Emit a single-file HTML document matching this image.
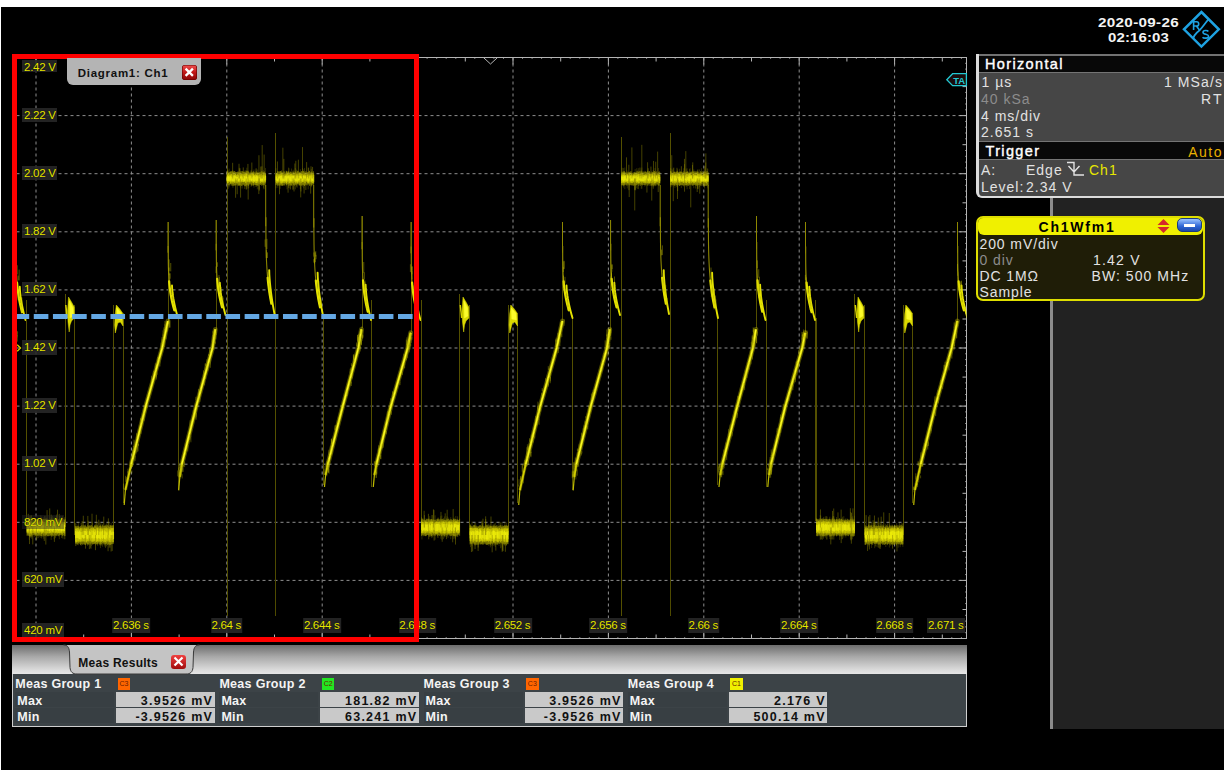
<!DOCTYPE html>
<html><head><meta charset="utf-8">
<style>
*{margin:0;padding:0;box-sizing:border-box}
html,body{width:1230px;height:772px;overflow:hidden;background:#fff}
body{position:relative;font-family:"Liberation Sans",sans-serif}
.a{position:absolute}
.t{position:absolute;white-space:nowrap}
#main{left:1px;top:7px;width:1223px;height:763px;background:#000}
svg{position:absolute;left:0;top:0}
.gd{stroke:#8e8e8e;stroke-width:1;stroke-dasharray:3 3}
.gdh{stroke:#8e8e8e;stroke-width:1;stroke-dasharray:3 3}
.yl{position:absolute;height:14.6px;background:rgba(40,40,40,0.88);color:#e8e800;font-size:11.5px;line-height:14.6px;padding:0 1.5px 0 2px;letter-spacing:-0.25px;white-space:nowrap;text-shadow:0 0 1px #000}
.tl{position:absolute;height:15.2px;background:rgba(40,40,40,0.88);color:#e8e800;font-size:11.5px;line-height:15.2px;padding:0 1.5px 0 0.5px;letter-spacing:-0.3px;white-space:nowrap;transform:translateX(-50%);text-shadow:0 0 1px #000}
#date{left:1090px;top:14px;width:90px;color:#fff;font-weight:bold;font-size:13px;line-height:16px;text-align:center}
#info{left:976px;top:54px;width:248px;height:144px;background:#464646;border-left:3px solid #d4d4d4;border-top:1px solid #9a9a9a;border-bottom:2px solid #d4d4d4;border-bottom-left-radius:5px}
.ih{position:absolute;left:0;width:245px;height:17px;background:#000;color:#fff;font-size:14.5px;line-height:17px;padding-left:7px;font-weight:normal}
.ib{position:absolute;left:2px;color:#e4e4e4;font-size:14px;line-height:16.5px;white-space:nowrap}
.dim{color:#8e8e8e}
#rpanel{left:1053px;top:198px;width:171px;height:531px;background:#222}
#rline{left:1050px;top:198px;width:3px;height:531px;background:#8a8a8a}
#wfm{left:976px;top:216px;width:229px;height:85px;background:#1d1b06;border:2px solid #e6e600;border-radius:7px;overflow:hidden}
#wfmh{left:0;top:0;width:225px;height:18px;background:#f2f200;color:#000;font-weight:bold;font-size:14.5px;line-height:18px;text-align:center}
.wb{position:absolute;color:#e4e4e4;font-size:14px;line-height:16.2px;white-space:nowrap}
#meas{left:12px;top:645px;width:955px;height:82px;background:#3a4145;border:1px solid #c8c8c8;border-top:none}
#mtabbar{left:0;top:0;width:954px;height:29px;background:linear-gradient(#6e6e6e,#d8d8d8 85%,#e8e8e8)}
.mrow{position:absolute;height:16px;font-size:12.5px;line-height:16px;font-weight:bold;color:#fff;white-space:nowrap}
.mval{position:absolute;height:15px;background:#c6c9cc;color:#000;font-size:12.5px;line-height:16px;font-weight:bold;text-align:right;padding-right:3px;white-space:nowrap}
.badge{position:absolute;width:12px;height:12px;font-size:6px;line-height:12px;text-align:center;color:#222}
</style></head><body>
<div id="main" class="a"></div>
<svg width="1230" height="772" viewBox="0 0 1230 772">
<defs><clipPath id="gc"><rect x="17" y="58" width="949.5" height="580"/></clipPath></defs>
<line x1="36" y1="57.5" x2="36" y2="638.5" class="gd"/>
<line x1="131.4" y1="57.5" x2="131.4" y2="638.5" class="gd"/>
<line x1="226.8" y1="57.5" x2="226.8" y2="638.5" class="gd"/>
<line x1="322.2" y1="57.5" x2="322.2" y2="638.5" class="gd"/>
<line x1="417.6" y1="57.5" x2="417.6" y2="638.5" class="gd"/>
<line x1="513" y1="57.5" x2="513" y2="638.5" class="gd"/>
<line x1="608.4" y1="57.5" x2="608.4" y2="638.5" class="gd"/>
<line x1="703.8" y1="57.5" x2="703.8" y2="638.5" class="gd"/>
<line x1="799.2" y1="57.5" x2="799.2" y2="638.5" class="gd"/>
<line x1="894.6" y1="57.5" x2="894.6" y2="638.5" class="gd"/>
<line x1="16.5" y1="115.6" x2="966.5" y2="115.6" class="gdh"/>
<line x1="16.5" y1="173.7" x2="966.5" y2="173.7" class="gdh"/>
<line x1="16.5" y1="231.8" x2="966.5" y2="231.8" class="gdh"/>
<line x1="16.5" y1="289.9" x2="966.5" y2="289.9" class="gdh"/>
<line x1="16.5" y1="348" x2="966.5" y2="348" class="gdh"/>
<line x1="16.5" y1="406.1" x2="966.5" y2="406.1" class="gdh"/>
<line x1="16.5" y1="464.2" x2="966.5" y2="464.2" class="gdh"/>
<line x1="16.5" y1="522.3" x2="966.5" y2="522.3" class="gdh"/>
<line x1="16.5" y1="580.4" x2="966.5" y2="580.4" class="gdh"/>
<rect x="16.5" y="57.5" width="950" height="581" fill="none" stroke="#b4b4b4" stroke-width="1"/>
<path d="M26.5 57.5v1.2M26.5 638.5v-1.2M36 57.5v7M36 638.5v-7M45.5 57.5v1.2M45.5 638.5v-1.2M55.1 57.5v1.2M55.1 638.5v-1.2M64.6 57.5v1.2M64.6 638.5v-1.2M74.2 57.5v1.2M74.2 638.5v-1.2M83.7 57.5v4M83.7 638.5v-4M93.2 57.5v1.2M93.2 638.5v-1.2M102.8 57.5v1.2M102.8 638.5v-1.2M112.3 57.5v1.2M112.3 638.5v-1.2M121.9 57.5v1.2M121.9 638.5v-1.2M131.4 57.5v7M131.4 638.5v-7M140.9 57.5v1.2M140.9 638.5v-1.2M150.5 57.5v1.2M150.5 638.5v-1.2M160 57.5v1.2M160 638.5v-1.2M169.6 57.5v1.2M169.6 638.5v-1.2M179.1 57.5v4M179.1 638.5v-4M188.6 57.5v1.2M188.6 638.5v-1.2M198.2 57.5v1.2M198.2 638.5v-1.2M207.7 57.5v1.2M207.7 638.5v-1.2M217.3 57.5v1.2M217.3 638.5v-1.2M226.8 57.5v7M226.8 638.5v-7M236.3 57.5v1.2M236.3 638.5v-1.2M245.9 57.5v1.2M245.9 638.5v-1.2M255.4 57.5v1.2M255.4 638.5v-1.2M265 57.5v1.2M265 638.5v-1.2M274.5 57.5v4M274.5 638.5v-4M284 57.5v1.2M284 638.5v-1.2M293.6 57.5v1.2M293.6 638.5v-1.2M303.1 57.5v1.2M303.1 638.5v-1.2M312.7 57.5v1.2M312.7 638.5v-1.2M322.2 57.5v7M322.2 638.5v-7M331.7 57.5v1.2M331.7 638.5v-1.2M341.3 57.5v1.2M341.3 638.5v-1.2M350.8 57.5v1.2M350.8 638.5v-1.2M360.4 57.5v1.2M360.4 638.5v-1.2M369.9 57.5v4M369.9 638.5v-4M379.4 57.5v1.2M379.4 638.5v-1.2M389 57.5v1.2M389 638.5v-1.2M398.5 57.5v1.2M398.5 638.5v-1.2M408.1 57.5v1.2M408.1 638.5v-1.2M417.6 57.5v7M417.6 638.5v-7M427.1 57.5v1.2M427.1 638.5v-1.2M436.7 57.5v1.2M436.7 638.5v-1.2M446.2 57.5v1.2M446.2 638.5v-1.2M455.8 57.5v1.2M455.8 638.5v-1.2M465.3 57.5v4M465.3 638.5v-4M474.8 57.5v1.2M474.8 638.5v-1.2M484.4 57.5v1.2M484.4 638.5v-1.2M493.9 57.5v1.2M493.9 638.5v-1.2M503.5 57.5v1.2M503.5 638.5v-1.2M513 57.5v7M513 638.5v-7M522.5 57.5v1.2M522.5 638.5v-1.2M532.1 57.5v1.2M532.1 638.5v-1.2M541.6 57.5v1.2M541.6 638.5v-1.2M551.2 57.5v1.2M551.2 638.5v-1.2M560.7 57.5v4M560.7 638.5v-4M570.2 57.5v1.2M570.2 638.5v-1.2M579.8 57.5v1.2M579.8 638.5v-1.2M589.3 57.5v1.2M589.3 638.5v-1.2M598.9 57.5v1.2M598.9 638.5v-1.2M608.4 57.5v7M608.4 638.5v-7M617.9 57.5v1.2M617.9 638.5v-1.2M627.5 57.5v1.2M627.5 638.5v-1.2M637 57.5v1.2M637 638.5v-1.2M646.6 57.5v1.2M646.6 638.5v-1.2M656.1 57.5v4M656.1 638.5v-4M665.6 57.5v1.2M665.6 638.5v-1.2M675.2 57.5v1.2M675.2 638.5v-1.2M684.7 57.5v1.2M684.7 638.5v-1.2M694.3 57.5v1.2M694.3 638.5v-1.2M703.8 57.5v7M703.8 638.5v-7M713.3 57.5v1.2M713.3 638.5v-1.2M722.9 57.5v1.2M722.9 638.5v-1.2M732.4 57.5v1.2M732.4 638.5v-1.2M742 57.5v1.2M742 638.5v-1.2M751.5 57.5v4M751.5 638.5v-4M761 57.5v1.2M761 638.5v-1.2M770.6 57.5v1.2M770.6 638.5v-1.2M780.1 57.5v1.2M780.1 638.5v-1.2M789.7 57.5v1.2M789.7 638.5v-1.2M799.2 57.5v7M799.2 638.5v-7M808.7 57.5v1.2M808.7 638.5v-1.2M818.3 57.5v1.2M818.3 638.5v-1.2M827.8 57.5v1.2M827.8 638.5v-1.2M837.4 57.5v1.2M837.4 638.5v-1.2M846.9 57.5v4M846.9 638.5v-4M856.4 57.5v1.2M856.4 638.5v-1.2M866 57.5v1.2M866 638.5v-1.2M875.5 57.5v1.2M875.5 638.5v-1.2M885.1 57.5v1.2M885.1 638.5v-1.2M894.6 57.5v7M894.6 638.5v-7M904.1 57.5v1.2M904.1 638.5v-1.2M913.7 57.5v1.2M913.7 638.5v-1.2M923.2 57.5v1.2M923.2 638.5v-1.2M932.8 57.5v1.2M932.8 638.5v-1.2M942.3 57.5v4M942.3 638.5v-4M951.8 57.5v1.2M951.8 638.5v-1.2M961.4 57.5v1.2M961.4 638.5v-1.2M966.5 63.3h-1.2M966.5 69.1h-1.2M966.5 74.9h-1.2M966.5 80.7h-1.2M966.5 86.6h-4M966.5 92.4h-1.2M966.5 98.2h-1.2M966.5 104h-1.2M966.5 109.8h-1.2M966.5 115.6h-7M966.5 121.4h-1.2M966.5 127.2h-1.2M966.5 133h-1.2M966.5 138.8h-1.2M966.5 144.7h-4M966.5 150.5h-1.2M966.5 156.3h-1.2M966.5 162.1h-1.2M966.5 167.9h-1.2M966.5 173.7h-7M966.5 179.5h-1.2M966.5 185.3h-1.2M966.5 191.1h-1.2M966.5 196.9h-1.2M966.5 202.8h-4M966.5 208.6h-1.2M966.5 214.4h-1.2M966.5 220.2h-1.2M966.5 226h-1.2M966.5 231.8h-7M966.5 237.6h-1.2M966.5 243.4h-1.2M966.5 249.2h-1.2M966.5 255h-1.2M966.5 260.9h-4M966.5 266.7h-1.2M966.5 272.5h-1.2M966.5 278.3h-1.2M966.5 284.1h-1.2M966.5 289.9h-7M966.5 295.7h-1.2M966.5 301.5h-1.2M966.5 307.3h-1.2M966.5 313.1h-1.2M966.5 319h-4M966.5 324.8h-1.2M966.5 330.6h-1.2M966.5 336.4h-1.2M966.5 342.2h-1.2M966.5 348h-7M966.5 353.8h-1.2M966.5 359.6h-1.2M966.5 365.4h-1.2M966.5 371.2h-1.2M966.5 377.1h-4M966.5 382.9h-1.2M966.5 388.7h-1.2M966.5 394.5h-1.2M966.5 400.3h-1.2M966.5 406.1h-7M966.5 411.9h-1.2M966.5 417.7h-1.2M966.5 423.5h-1.2M966.5 429.3h-1.2M966.5 435.2h-4M966.5 441h-1.2M966.5 446.8h-1.2M966.5 452.6h-1.2M966.5 458.4h-1.2M966.5 464.2h-7M966.5 470h-1.2M966.5 475.8h-1.2M966.5 481.6h-1.2M966.5 487.4h-1.2M966.5 493.3h-4M966.5 499.1h-1.2M966.5 504.9h-1.2M966.5 510.7h-1.2M966.5 516.5h-1.2M966.5 522.3h-7M966.5 528.1h-1.2M966.5 533.9h-1.2M966.5 539.7h-1.2M966.5 545.5h-1.2M966.5 551.4h-4M966.5 557.2h-1.2M966.5 563h-1.2M966.5 568.8h-1.2M966.5 574.6h-1.2M966.5 580.4h-7M966.5 586.2h-1.2M966.5 592h-1.2M966.5 597.8h-1.2M966.5 603.6h-1.2M966.5 609.5h-4M966.5 615.3h-1.2M966.5 621.1h-1.2M966.5 626.9h-1.2M966.5 632.7h-1.2" stroke="#b4b4b4" stroke-width="1" fill="none"/>
<path d="M484 58 L490.5 64 L497 58" fill="none" stroke="#b4b4b4" stroke-width="1"/>
<g clip-path="url(#gc)">
<path d="M-368.5 318V521M-329.5 294V527M-320.5 305V535M-281.5 305V535M-271.5 313V503M-216.5 315V490M-178.5 220V330M-226.5 222V324M-167.5 137V616M-71.5 318V485M-32.5 216V328M-23.5 300V487M16.5 222V332M26.5 300V521" stroke="#545000" stroke-width="1.0" stroke-opacity="1.0" fill="none"/>
<path d="M-119.5 133V520" stroke="#545000" stroke-width="1.0" stroke-opacity="1.0" fill="none"/>
<path d="M-119.5 520V616" stroke="#4e4a00" stroke-width="1.0" stroke-opacity="1.0" fill="none"/>
<path d="M-365.67 516.95V538.52M-364.72 517.79V536.36M-361.41 518.94V538.11M-360.97 518.03V536.12M-360.25 515.63V538.08M-355.95 518.08V537.16M-353.16 518.16V539.64M-351.75 516.48V539.11M-351.16 517.67V539.86M-350.23 518.01V536.4M-348.55 516.07V536.52M-347.7 517.32V536.85M-346.15 515.46V536.84M-344.62 515.04V536.85M-343.41 518.71V536.36M-342.6 516.59V537.49M-340.14 518.38V539.63M-339.17 518.24V538.96M-338.11 515.2V539.53M-337.29 518.58V536.15M-336.21 516.18V537.03M-334.63 516.12V536.28M-331.94 517.92V537.78M-331.49 517.52V538.29M-331 515.44V539.92" stroke="#8a8600" stroke-width="0.6" stroke-opacity="0.55" fill="none"/><path d="M-368 520.43V534.54M-367.34 518.57V534.54M-366.78 519.04V535.14M-366.08 519.41V535.97M-365.42 519.09V536.09M-364.76 519.13V536.3M-364.11 518.92V536.23M-363.58 519.74V535.67M-363.03 519.22V536.49M-362.38 519.72V535.97M-361.85 518.82V534.67M-361.25 519.3V535.46M-360.86 519.51V535.73M-360.19 520.48V535.1M-359.62 520.16V536.31M-359.05 518.72V535.15M-358.49 519.64V536.11M-357.82 519.73V535.67M-357.4 519.51V536.17M-356.76 518.6V535.05M-356.39 519.95V534.93M-355.92 519.51V535.13M-355.29 519.6V534.65M-354.97 520.42V535.92M-354.45 518.92V534.54M-354.09 520.45V536.16M-353.7 520.41V535.76M-353.22 519.19V536.11M-352.54 520.1V535.45M-352.16 519.56V535.93M-351.79 519.81V535.89M-351.28 518.99V535.29M-350.67 520.33V536.37M-350.08 519.59V535.75M-349.41 519.36V536.26M-348.8 519.57V535.8M-348.41 518.86V535.78M-347.83 518.7V536.46M-347.14 518.92V535.14M-346.47 519.8V534.67M-346 518.96V535.47M-345.68 520.37V536.1M-345.31 518.92V534.78M-344.96 519.05V536.18M-344.38 519.51V536.4M-344.05 519.45V535.08M-343.45 519.45V536.19M-342.93 519.74V536.19M-342.27 518.8V536.44M-341.76 520.1V535.57M-341.26 520.44V536.44M-340.75 518.9V535.63M-340.26 520.37V535.58M-339.79 518.65V535.04M-339.3 519.63V536.13M-338.64 519.87V534.88M-338.09 520.24V536.06M-337.78 520.05V535.87M-337.36 519.26V534.71M-336.76 519.48V535M-336.38 519.63V535.25M-335.92 520.18V534.91M-335.37 519.44V536.2M-334.82 520.03V535.98M-334.2 519.87V535.13M-333.53 518.5V536.28M-333.17 519.05V535.02M-332.84 519.66V536.08M-332.49 519.13V534.54M-332.11 518.68V536.44M-331.76 518.98V535.51M-331.18 520.36V534.71M-330.87 519.47V535.64M-330.51 520.09V536.18M-329.82 520.31V534.62" stroke="#bcb600" stroke-width="0.6" stroke-opacity="0.7" fill="none"/><path d="M-368 521.58V532.72M-367.51 522.11V533.16M-367.21 521.45V532.49M-366.73 522.15V532.51M-366.36 522.78V533.63M-365.74 521.42V533.21M-365.28 521.99V533.77M-364.66 521.34V533.39M-364.04 522.15V533.63M-363.39 521.57V533.42M-362.93 522.69V532.75M-362.44 522.23V533.22M-361.89 521.29V533.27M-361.46 521.89V533.05M-361 521.77V533.32M-360.4 522.76V533.18M-359.8 522.16V532.28M-359.42 522.64V532.6M-358.76 521.99V533.75M-358.23 521.78V533.5M-357.9 521.59V532.27M-357.23 522.05V532.47M-356.73 522.71V533.71M-356.27 521.84V532.78M-355.85 521.9V532.65M-355.26 522.78V532.59M-354.95 521.59V532.82M-354.29 522.72V533.78M-353.61 521.35V532.89M-353.12 522.41V533.04M-352.44 522.05V533.77M-351.82 522.62V533.2M-351.34 522.72V533.04M-350.99 521.73V532.93M-350.58 522.13V533.44M-350.07 521.28V533.37M-349.67 521.37V533.45M-349.12 522.37V533.3M-348.6 521.79V533.41M-348.22 521.23V533.67M-347.57 522.7V532.63M-347.1 522.64V533.07M-346.77 521.72V533.08M-346.22 522.03V532.54M-345.78 521.46V532.32M-345.43 521.8V533.43M-345.05 522.39V533.5M-344.6 521.22V532.72M-344.08 521.33V532.88M-343.63 521.4V532.33M-343.3 522.02V533.3M-342.88 522.68V532.54M-342.32 522.31V533.36M-341.74 522.57V532.77M-341.15 522.61V533.33M-340.62 521.3V533.66M-340.14 522.31V532.71M-339.68 521.37V532.6M-339.24 522.22V532.83M-338.79 521.9V533.48M-338.27 521.9V532.48M-337.67 522.35V532.24M-337.16 521.89V533.75M-336.6 522.7V533.07M-335.98 522.67V533.38M-335.32 521.79V532.43M-334.73 522.41V532.55M-334.12 521.58V532.83M-333.68 521.72V532.99M-333.17 521.67V533.66M-332.7 521.73V533.57M-332.08 521.38V533.73M-331.53 521.66V533.48M-331.06 522.57V533.39M-330.36 522.53V532.53M-329.89 521.25V532.29" stroke="#e0dc00" stroke-width="0.6" stroke-opacity="0.85" fill="none"/><path d="M-368 524.05V531.19M-367.51 524.42V530.82M-366.66 525.09V530.06M-366.15 523.92V530.84M-365.63 524.76V530.03M-364.86 524.24V531.27M-364.22 523.59V531.46M-363.65 523.46V530.63M-363.13 523.48V531.24M-362.54 524.31V530.23M-361.65 524.84V529.72M-361.01 523.77V531.07M-360.31 525V530.32M-359.78 524.31V530.93M-358.88 524.27V529.99M-358.1 523.72V531.33M-357.29 524.78V531.08M-356.84 524.4V531.54M-356.14 524.72V531.22M-355.54 525.12V531.29M-355.03 524.29V530M-354.21 524.7V529.85M-353.66 523.92V530.39M-352.92 524.54V530.59M-352.04 524.04V529.72M-351.45 524.84V530.79M-350.82 523.39V531.24M-350.31 524.74V530.42M-349.64 524.65V530.45M-348.91 524.92V531.11M-348.35 524.22V531.09M-347.78 525.12V529.97M-347.33 523.94V530.05M-346.73 524.16V529.87M-346.22 525.06V530.48M-345.78 524.48V530.68M-345.06 523.72V530.44M-344.49 525.27V530.47M-343.74 523.78V530.97M-343.04 524.66V530.36M-342.31 524.57V530.68M-341.52 524.12V530M-340.74 524.24V530.38M-340.09 523.93V531.6M-339.43 523.69V530.08M-338.56 524.92V529.86M-338.03 523.96V530.33M-337.17 524.41V529.94M-336.28 523.56V530.75M-335.6 524.79V531.45M-334.71 524.14V529.94M-333.89 523.57V530.16M-333.21 524.94V530.75M-332.77 524.95V531.6M-331.9 524.71V530.99M-331.13 524.16V531.25M-330.72 524.4V529.98M-330.13 524.97V530.7" stroke="#ffff10" stroke-width="0.6" stroke-opacity="0.75" fill="none"/><path d="M-346.44 511.19V527.5M-365.63 527.5V539.51M-332.27 527.5V540.64M-352.11 527.5V541.41M-339.56 527.5V540.7M-330.99 527.5V541.99M-352.19 511.47V527.5M-334.23 511.8V527.5M-351.35 527.5V540.92M-365.02 527.5V544.4M-340.5 527.5V543.51M-355.97 527.5V539.42M-362.5 511.98V527.5M-352.64 510.44V527.5M-347.95 513.55V527.5M-352.68 515.45V527.5" stroke="#8c8600" stroke-width="0.7" stroke-opacity="0.7" fill="none"/>
<path d="M-317.42 522.28V545.39M-315.46 522.33V545M-314.29 524.3V545.8M-312.87 524.07V546.84M-312.44 521.91V545.73M-310.06 521.81V548.09M-307.26 522.97V545.27M-306.24 525.08V547.4M-303.06 525.18V545.39M-301.91 524.56V547.16M-300.96 522.85V548.04M-300.15 524.3V548.21M-299.28 522.94V544.86M-298.19 523.39V546.62M-297.16 522.29V544.85M-295.99 523.31V545.25M-293.61 521.78V546.5M-292.23 522.87V547.63M-288.11 522.41V547.65M-287.16 523.54V545.38M-284.02 524.89V544.57M-283.27 523.73V545.55M-282.31 521.87V546.78" stroke="#8a8600" stroke-width="0.6" stroke-opacity="0.55" fill="none"/><path d="M-319.5 526.38V543.08M-319.07 525.95V543.53M-318.54 525.36V543.34M-318.14 525.62V544.66M-317.52 526.18V543.73M-317.14 526.92V543.98M-316.53 526.71V543.91M-315.93 526.52V544.78M-315.58 526.4V543.85M-315.25 525.01V544.53M-314.65 526.49V544.1M-314.26 525.14V543.73M-313.82 525.78V543.08M-313.36 526.88V543.69M-312.78 525.82V544.77M-312.3 525.31V543.76M-311.68 526.31V543.37M-311.16 526.59V543.43M-310.68 526.11V544.99M-310.11 526.59V543.77M-309.78 526.27V543.55M-309.47 526.48V543.79M-308.8 526.46V543.72M-308.44 526.28V544.53M-307.85 526.96V543.64M-307.4 525.24V543.65M-306.79 526.89V543.79M-306.39 526.7V544.19M-306.08 526.15V544.09M-305.72 526.48V544.45M-305.16 526.59V543.56M-304.57 526.23V544.73M-304.18 526.31V543.43M-303.87 525.74V544.13M-303.24 526.4V544.34M-302.57 525.62V544.33M-301.89 526.53V544.27M-301.56 526.22V543.12M-301.1 526.01V543.56M-300.74 526.05V543.33M-300.17 526.81V543.68M-299.71 525.83V544.4M-299.18 526.95V543.78M-298.74 526.19V543.11M-298.24 526.06V543.65M-297.84 526.31V544.78M-297.31 525.66V543.37M-296.82 525.09V543.73M-296.29 525.46V544.25M-295.75 526.17V543.55M-295.11 526.24V544.82M-294.8 525.99V543.62M-294.35 526.7V543.38M-293.96 526.53V543M-293.45 526.52V543.99M-292.89 525.75V544.12M-292.25 526.33V543.69M-291.6 525.57V544.39M-291.02 525.35V543.32M-290.48 525.87V543.74M-290.06 525.93V543.47M-289.66 526.64V544.03M-289.31 526.86V543.2M-288.73 526.1V544.54M-288.24 525.27V544.74M-287.92 525.99V544.59M-287.46 526.5V544.43M-287.03 525.48V544.69M-286.4 526.16V544.41M-285.85 525.4V543.25M-285.4 526.54V543.37M-285.09 525.12V544.94M-284.74 526.16V544.26M-284.28 525.02V543.1M-283.69 526.92V543.57M-283.1 526.76V543.66M-282.79 526.03V543.75M-282.37 525.32V543.57M-281.91 525.47V544.96M-281.45 525.91V544.6" stroke="#bcb600" stroke-width="0.6" stroke-opacity="0.7" fill="none"/><path d="M-319.5 529.13V542.19M-319.1 529.11V541.22M-318.79 529.07V541.7M-318.38 528.53V541.29M-317.98 529.2V542.13M-317.55 529.01V541.47M-316.86 527.91V541.47M-316.39 528.67V540.79M-315.87 528.3V541.14M-315.19 527.71V541.41M-314.56 529.02V540.74M-314.19 529.18V541.27M-313.59 528.48V540.72M-313.21 529.28V541.54M-312.58 528.12V541.34M-311.96 528.07V542.28M-311.62 528.66V541.83M-311.22 529.26V541.62M-310.83 528.71V541.75M-310.21 528.28V541.27M-309.79 528.79V540.85M-309.36 528.96V541.89M-308.84 529.02V540.87M-308.49 528.61V540.72M-307.98 528.79V541.56M-307.3 527.89V541.21M-306.7 527.72V541.39M-306.02 528.65V541.83M-305.65 528.22V542.22M-305.22 528.73V542.28M-304.86 528.7V541.73M-304.47 527.88V542.07M-303.92 528.39V540.88M-303.29 528.57V541.76M-302.82 528.93V541.66M-302.29 529.25V541.7M-301.81 528.35V542.19M-301.45 527.71V541.88M-301.02 527.72V541.34M-300.38 527.72V541.49M-299.98 528.26V542.2M-299.35 528.48V542.29M-299.03 528.16V541.1M-298.4 528.44V542.08M-298.02 528.27V540.82M-297.5 528.51V541.09M-296.88 528.07V541.58M-296.22 529.06V541.29M-295.88 528.75V542.08M-295.25 529.01V541.32M-294.61 527.86V540.82M-293.91 528.29V542.1M-293.32 528.23V541.39M-293.01 528.8V541.71M-292.6 528.19V540.99M-292.25 528.55V540.91M-291.91 528.32V541.27M-291.53 528.19V541.88M-291.08 528.65V540.93M-290.53 527.99V541.35M-290.05 527.79V541.25M-289.47 528.37V541.16M-288.82 527.93V541.78M-288.34 528.68V541.89M-287.8 529.2V541.37M-287.38 527.77V541.17M-286.8 528.91V541.36M-286.45 528.9V541.37M-286.02 527.94V541.65M-285.5 527.87V540.84M-285.05 528.14V541.77M-284.61 527.78V540.74M-284.06 528.72V541.44M-283.63 528.33V542.25M-282.94 528.67V542.03M-282.38 527.7V540.81M-281.9 528.25V541.05" stroke="#e0dc00" stroke-width="0.6" stroke-opacity="0.85" fill="none"/><path d="M-319.5 531.56V537.93M-318.9 532.21V537.98M-318.18 530.71V538.18M-317.37 530.63V537.87M-316.74 530.44V539.75M-315.89 531.6V538.82M-315.22 530.6V538.29M-314.57 531.11V537.9M-314.13 531.73V539.37M-313.6 532.28V538.1M-312.98 531.35V539.54M-312.52 532.05V539.81M-311.86 531.01V539.57M-310.98 532.38V537.95M-310.17 530.78V537.96M-309.51 532.15V538.28M-308.62 530.47V537.7M-308.01 531.81V537.85M-307.15 531.29V539.09M-306.31 531.11V538.74M-305.46 531.72V539.28M-304.93 531.42V538.68M-304.35 531.37V537.71M-303.53 531.2V538.85M-302.93 532.17V538.45M-302.38 531.88V539.31M-301.73 531.47V539.8M-301.33 530.21V538.43M-300.63 531.71V538.99M-299.94 531.27V538.77M-299.16 532.19V538.17M-298.62 531.43V539.56M-298.02 530.85V537.79M-297.13 531.65V538.32M-296.32 530.94V537.73M-295.54 530.98V538.86M-294.67 532.35V539.73M-293.9 532.39V539.28M-293.29 530.16V539.69M-292.85 531.4V539.31M-292.26 531.41V537.87M-291.7 532.24V537.86M-290.89 531.15V537.86M-290.43 530.23V538.87M-289.57 531.46V538.82M-288.75 530.41V538.67M-288.33 531.54V539.13M-287.47 530.83V538.48M-286.68 530.71V537.98M-285.98 531.61V537.97M-285.41 531.22V538.48M-284.72 531.58V538.93M-284.08 531.65V539.19M-283.56 530.74V538.91M-283.04 530.52V538.46M-282.28 530.99V538.87M-281.39 531.36V538.71" stroke="#ffff10" stroke-width="0.6" stroke-opacity="0.75" fill="none"/><path d="M-291.24 518.97V535M-287.82 514.47V535M-297.94 535V549M-313.01 535V550.94M-289.33 513.48V535M-310.59 516.35V535M-296.42 516.38V535M-297.42 535V553.04M-293.55 514.89V535M-292.49 515.64V535M-292.19 520.51V535M-317.76 520.47V535M-307.89 521.45V535M-300.95 520.22V535M-308.45 515.51V535M-312.7 535V552.63" stroke="#8c8600" stroke-width="0.7" stroke-opacity="0.7" fill="none"/>
<path d="M-326.5 297L-323.5 302L-320.8 307L-320.6 318L-323.5 321L-325 325L-325.8 332L-327 322L-327.4 311Z" fill="#e6e400" fill-opacity="0.95" stroke="#e6e400" stroke-opacity="0.76" stroke-width="0.6" stroke-linejoin="round"/><path d="M-325.5 301L-322 308L-321.6 316L-325 318Z" fill="#ffff30" fill-opacity="0.9" stroke="#ffff30" stroke-opacity="0.7200000000000001" stroke-width="0.6" stroke-linejoin="round"/><path d="M-329.2 305L-327.8 318" stroke="#d8d400" stroke-width="1.5" fill="none"/>
<path d="M-278.7 305L-275.2 309L-272.4 313L-272 326L-274.7 322L-277.2 323L-279.7 333L-280.4 325L-279.8 314Z" fill="#e6e400" fill-opacity="0.95" stroke="#e6e400" stroke-opacity="0.76" stroke-width="0.6" stroke-linejoin="round"/><path d="M-278.2 308L-273.7 313L-273.2 320L-277.7 319Z" fill="#ffff30" fill-opacity="0.9" stroke="#ffff30" stroke-opacity="0.7200000000000001" stroke-width="0.6" stroke-linejoin="round"/>
<path d="M-263.8 464.3L-258.5 443.3L-249.2 406L-232.8 347.8L-227.1 321" stroke="#a8a400" stroke-width="4.8" stroke-opacity="0.45" fill="none" stroke-linecap="round" stroke-linejoin="round"/><path d="M-269.6 490L-263.8 464.3" stroke="#a8a400" stroke-width="3.4" stroke-opacity="0.35" fill="none"/><path d="M-263.8 464.3L-258.5 443.3L-249.2 406L-232.8 347.8L-227.1 321" stroke="#dcd800" stroke-width="2.5" fill="none" stroke-linejoin="round" stroke-opacity="0.95"/><path d="M-269.6 490L-263.8 464.3" stroke="#dcd800" stroke-width="1.9" fill="none" stroke-opacity="0.95"/><path d="M-270.8 505L-269.6 490" stroke="#d4d000" stroke-width="1.2" fill="none" stroke-opacity="0.9"/><path d="M-263.8 464.3L-258.5 443.3L-249.2 406L-232.8 347.8L-227.1 321" stroke="#ffff30" stroke-width="1.0" fill="none" stroke-linejoin="round"/><path d="M-230.61 346.89V343.92M-229.73 328.19V325.86M-252.2 421.43V416.54M-256.88 433.33V427.49M-254.08 423.88V420.49M-229.7 347.82V341.87M-270.63 486.03V478.43M-269.21 487.04V482.92M-262.54 464.21V461.81M-269.2 483.08V475.67M-230.06 336.3V330.23M-267.36 478.96V473.97M-261.37 447.25V444.41M-263.46 465.32V459.97M-230.06 347.18V343.65M-257.62 453.48V445.63M-256.81 447.33V445.21M-233.37 362.42V356.99M-232.85 342.63V336.02M-261.34 445.49V442.82M-252.26 408.69V406.5M-260.04 452.58V447.1M-272.02 493.37V486.6M-236.05 359.5V355.49M-252.62 430.4V426.95M-266.06 476.96V472.94M-255.76 429.98V422.69M-264.35 462.44V457.73M-260.58 449.56V446.13M-231.19 342.59V339.06M-270.03 487.16V483.35M-253.28 416.82V414.62M-263.3 456.25V449.67M-264.01 457.7V452.35M-262.64 460.25V452.78M-233.25 350.81V344.79M-260.38 459.34V455.06M-250.79 423.53V421.12M-271.91 492.53V484.8M-236.2 354.39V351.16M-231.03 352.13V348.07M-261.85 465.16V457.49M-261.41 461.03V457.61M-241.91 388.39V380.85M-261.22 446.14V443.03M-254.32 420.04V416.11M-231.95 347.13V341.89M-228.58 337.73V334.16M-270.68 489.14V486.68M-247 409.94V403.88M-263.9 463.64V458.23M-251.8 428.05V422.47M-250.95 423.2V418.41M-263.19 464.24V458.17M-237.25 362.77V360.46M-264.11 466.81V459.88M-269.88 493.26V485.49M-229.27 331.85V328.76M-265.99 487.74V483.72M-228.55 334.49V330.99" stroke="#bcb800" stroke-width="0.6" stroke-opacity="0.6" fill="none"/>
<path d="M-213.3 464.8L-198.8 406.4L-182.5 348L-179.7 329.3" stroke="#a8a400" stroke-width="4.8" stroke-opacity="0.45" fill="none" stroke-linecap="round" stroke-linejoin="round"/><path d="M-215.2 477L-213.3 464.8" stroke="#a8a400" stroke-width="3.4" stroke-opacity="0.35" fill="none"/><path d="M-213.3 464.8L-198.8 406.4L-182.5 348L-179.7 329.3" stroke="#dcd800" stroke-width="2.5" fill="none" stroke-linejoin="round" stroke-opacity="0.95"/><path d="M-215.2 477L-213.3 464.8" stroke="#dcd800" stroke-width="1.9" fill="none" stroke-opacity="0.95"/><path d="M-216.3 490.4L-215.2 477" stroke="#d4d000" stroke-width="1.2" fill="none" stroke-opacity="0.9"/><path d="M-213.3 464.8L-198.8 406.4L-182.5 348L-179.7 329.3" stroke="#ffff30" stroke-width="1.0" fill="none" stroke-linejoin="round"/><path d="M-198.08 399.42V393.95M-180.81 341.74V338.2M-179.41 347.2V340.08M-206.16 441.21V433.69M-200.8 412.93V407.6M-179.55 346.9V343.2M-216.78 471.71V466.83M-211.89 473.48V468.39M-179.67 337.38V332.98M-180.15 339.65V334.88M-213.81 474.29V471.92M-200.46 410.47V405.82M-217.18 476.33V470.83M-181.64 336.79V329.37M-214.08 475.64V467.96M-182.05 333.88V329.98M-182.88 355.37V349.23M-177.57 336.73V329.22M-200.55 421.66V414.8M-211.73 461.07V454.79M-216.12 468.32V463.25M-190.32 381.93V375.87M-179.08 331.76V329.37M-209.01 462.03V454.8M-194.04 394.88V388.23M-182.06 350.25V347.5M-214.89 473.86V469.5M-211.64 472.97V467.14M-180.69 344.91V342.68M-203.37 437.3V433.91M-213.79 470.48V466.58M-190.19 367.85V364.25M-212.18 476.7V469.23M-189.66 377.19V373.37M-181.27 335.36V331.69M-184.57 349.88V343.65M-212.93 472.98V469.48M-200.54 412.63V408.02M-184.81 348.76V344.63M-179.54 347.34V340.6M-215.34 478.57V472.46M-189.69 373.2V371.13M-213.35 475.86V473.52M-208.01 457.44V450.71M-192.76 391.86V389.61M-214.71 472.75V470.11M-183.34 348.09V340.66M-215.39 479.82V474.13M-198.88 410.03V403.32M-206.62 444.31V438.22M-181.19 348.52V345.75M-214.66 472.19V467.89M-179.79 335.96V332.72M-201.02 417.8V412.27M-182.93 354.32V350.31M-212.73 476.83V471.78M-178.36 335.75V332.6M-212.53 469.69V465M-189.65 370V365.39M-204.75 430.28V426.46" stroke="#bcb800" stroke-width="0.6" stroke-opacity="0.6" fill="none"/>
<path d="M-67.3 464.8L-52.3 406.4L-36.6 348L-33.6 329.3" stroke="#a8a400" stroke-width="4.8" stroke-opacity="0.45" fill="none" stroke-linecap="round" stroke-linejoin="round"/><path d="M-69.4 475L-67.3 464.8" stroke="#a8a400" stroke-width="3.4" stroke-opacity="0.35" fill="none"/><path d="M-67.3 464.8L-52.3 406.4L-36.6 348L-33.6 329.3" stroke="#dcd800" stroke-width="2.5" fill="none" stroke-linejoin="round" stroke-opacity="0.95"/><path d="M-69.4 475L-67.3 464.8" stroke="#dcd800" stroke-width="1.9" fill="none" stroke-opacity="0.95"/><path d="M-70.5 487L-69.4 475" stroke="#d4d000" stroke-width="1.2" fill="none" stroke-opacity="0.9"/><path d="M-67.3 464.8L-52.3 406.4L-36.6 348L-33.6 329.3" stroke="#ffff30" stroke-width="1.0" fill="none" stroke-linejoin="round"/><path d="M-68.59 474V466.72M-33.63 338.18V333.16M-36.32 333.11V329.75M-53.92 425.49V419.55M-34.44 341.54V338.19M-65.58 471.53V467.48M-37.02 350.99V344.39M-51.56 404.72V397.53M-38.4 352.11V344.63M-70.86 471.57V468.27M-33.73 349.89V343.62M-40.14 364.55V361.04M-32.24 339.23V336.41M-39.54 360.18V358.05M-44.03 377.05V374.05M-35.79 339.01V332.18M-36.82 336.5V334.21M-32.26 340.8V335.38M-45.31 387.03V384.58M-45.59 376.61V372.43M-62.87 444.67V440.52M-68.84 471.71V467.28M-40.59 372.65V366.99M-66.77 455.67V453.15M-69.17 469.93V464.99M-69.17 470.2V466.22M-42.23 369.2V361.93M-53.49 416.49V414.32M-40.01 372.49V369.15M-59.28 432.59V426.7M-37.76 361.91V358.86M-52.58 412.86V409.83M-43.66 374.4V367.78M-40.14 357.55V353.37M-58.96 439.56V432.46M-66.78 471V463.36M-71.75 476.09V471.97M-32.77 337.97V335.59M-66.23 473.58V467.9M-53.56 406.88V400.81M-69.6 472.92V467.55M-51.16 395.59V388.05M-50.91 393.09V389.23M-65.44 452.65V445.57M-36.3 337.97V332.7M-34.52 337.29V332.81M-36.83 343.56V338.89M-64.17 450.33V445.98M-69.3 470.25V467.1M-33.16 337.43V332.7M-36.63 341.37V335.89M-67.6 464.37V456.54M-36.12 341.96V334.79M-39.13 352.54V344.58M-65.91 469.31V463.02M-65.72 474.12V466.75M-70.01 471.45V466.67M-58.77 427.77V423.09M-34.4 351.45V345.76M-68.06 474.4V471.11" stroke="#bcb800" stroke-width="0.6" stroke-opacity="0.6" fill="none"/>
<path d="M-18.7 464.8L-4.2 406.4L12.7 348L15.7 332.8" stroke="#a8a400" stroke-width="4.8" stroke-opacity="0.45" fill="none" stroke-linecap="round" stroke-linejoin="round"/><path d="M-20.6 475L-18.7 464.8" stroke="#a8a400" stroke-width="3.4" stroke-opacity="0.35" fill="none"/><path d="M-18.7 464.8L-4.2 406.4L12.7 348L15.7 332.8" stroke="#dcd800" stroke-width="2.5" fill="none" stroke-linejoin="round" stroke-opacity="0.95"/><path d="M-20.6 475L-18.7 464.8" stroke="#dcd800" stroke-width="1.9" fill="none" stroke-opacity="0.95"/><path d="M-21.7 487L-20.6 475" stroke="#d4d000" stroke-width="1.2" fill="none" stroke-opacity="0.9"/><path d="M-18.7 464.8L-4.2 406.4L12.7 348L15.7 332.8" stroke="#ffff30" stroke-width="1.0" fill="none" stroke-linejoin="round"/><path d="M-21.2 474.06V470.99M-20.51 466.6V463.47M-10.18 421.62V419.41M-6.48 421.83V415.39M17.35 341.61V334.78M-16.22 447.16V445.12M-20.05 469.8V462.53M3.18 386.01V381.51M-21.38 476.31V468.8M-22.23 476.04V472.62M12.54 353.11V350.39M14.5 334.81V332.76M13.53 343.11V337.93M-21.16 476.63V470.98M4.86 386.59V380.73M-18.48 455.86V449.92M-12.28 439.74V437.48M-21.01 475.35V472M15.94 341.86V335.3M-22.36 473.25V469.59M-20.34 468.8V462.92M-19.98 463.29V456.21M-20.99 470.5V467.42M11.36 349.22V343.37M-15.85 464.05V457.3M13.53 348.25V343.2M11.64 351.88V343.95M-21.15 474.06V472M12.37 346.59V340.6M-11.98 444.52V440.29M-21.45 467.59V463.88M2.71 393.42V390.83M-7.55 430.15V426.09M0.39 403.04V396.6M6.77 374.64V369.18M14.58 351.03V345.09M-14.95 450.91V448.37M-19.33 472.2V468.94M12.98 348.66V341.52M-20.85 475.4V469.24M-12.17 435.27V430.99M6.04 366.63V360.5M6.47 371.47V366.42M-19.27 476.03V472.64M13.03 347.72V342.87M13.85 345.65V342.2M14.98 343.56V336.07M-16.32 460.52V454.4M12.17 344.9V338.52M9.69 351.17V348.58M-19.35 475.35V471.81M7.05 376.52V372.29M-19.66 476.84V471.99M-22.44 475.89V473.5M-1.46 402.39V395.45M10.61 355.71V349.81M11.04 357.52V352.03M-16.65 469.95V466.23M6.32 370.47V368.41M15.16 338.78V331.32" stroke="#bcb800" stroke-width="0.6" stroke-opacity="0.6" fill="none"/>
<path d="M-227 222V252.72" stroke="#8e8800" stroke-width="1" fill="none"/><path d="M-226.8 246L-226.8 249.22L-226.8 252.43L-226.79 255.65L-226.76 258.86L-226.73 262.08L-226.67 265.3L-226.58 268.51L-226.47 271.73L-226.32 274.94L-226.13 278.16L-225.88 281.38L-225.59 284.59L-225.24 287.81L-224.82 291.02L-224.33 294.24L-223.76 297.46L-223.11 300.67L-222.37 303.89L-221.54 307.1L-220.6 310.32" stroke="#8c8600" stroke-width="1.1" fill="none"/><path d="M-225.88 281.38L-225.59 284.59L-225.24 287.81L-224.82 291.02L-224.33 294.24L-223.76 297.46L-223.11 300.67L-222.37 303.89L-221.54 307.1L-220.6 310.32" stroke="#e4e200" stroke-width="2.2" stroke-linecap="round" fill="none"/><path d="M-223 285.36L-222.85 288.62L-222.54 291.89L-222.13 295.15L-221.62 298.42L-221.02 301.68L-220.35 304.94L-219.61 308.21L-218.8 311.47L-217.93 314.74L-217 318" stroke="#e4e200" stroke-width="1.9" stroke-linecap="round" fill="none"/><path d="M-226.51 267.12V274.43M-226.51 273.99V284.93M-225.45 264.1V270.46M-219.73 300.98V311.6M-223.12 301.08V306.89M-222.68 281.59V291.65M-225.49 287.53V292.35M-224.19 290.25V298.28" stroke="#c8c400" stroke-width="0.6" stroke-opacity="0.7" fill="none"/>
<path d="M-178.9 220V250.4" stroke="#8e8800" stroke-width="1" fill="none"/><path d="M-178.7 243.75L-178.7 246.93L-178.7 250.12L-178.69 253.3L-178.67 256.48L-178.63 259.66L-178.58 262.85L-178.5 266.03L-178.39 269.21L-178.25 272.39L-178.07 275.57L-177.84 278.76L-177.56 281.94L-177.23 285.12L-176.84 288.31L-176.38 291.49L-175.85 294.67L-175.24 297.85L-174.54 301.04L-173.75 304.22L-172.87 307.4" stroke="#8c8600" stroke-width="1.1" fill="none"/><path d="M-177.84 278.76L-177.56 281.94L-177.23 285.12L-176.84 288.31L-176.38 291.49L-175.85 294.67L-175.24 297.85L-174.54 301.04L-173.75 304.22L-172.87 307.4" stroke="#e4e200" stroke-width="2.2" stroke-linecap="round" fill="none"/><path d="M-175.14 282.7L-175 285.93L-174.71 289.16L-174.32 292.39L-173.84 295.62L-173.28 298.85L-172.65 302.08L-171.95 305.31L-171.19 308.54L-170.37 311.77L-169.5 315" stroke="#e4e200" stroke-width="1.9" stroke-linecap="round" fill="none"/><path d="M-176.72 292.29V296.73M-178.96 262.82V273.28M-177.33 284.09V289.63M-173.13 304.26V309.67M-178.32 276.45V285.7M-177.52 270.13V280.94M-172.64 296.69V302.24M-177.54 269.87V280.39" stroke="#c8c400" stroke-width="0.6" stroke-opacity="0.7" fill="none"/>
<path d="M-33 216V249.28" stroke="#8e8800" stroke-width="1" fill="none"/><path d="M-32.8 242L-32.8 245.48L-32.8 248.97L-32.79 252.45L-32.77 255.94L-32.73 259.42L-32.68 262.9L-32.61 266.39L-32.5 269.87L-32.37 273.36L-32.19 276.84L-31.98 280.32L-31.71 283.81L-31.39 287.29L-31.02 290.78L-30.58 294.26L-30.07 297.74L-29.48 301.23L-28.82 304.71L-28.06 308.2L-27.22 311.68" stroke="#8c8600" stroke-width="1.1" fill="none"/><path d="M-31.98 280.32L-31.71 283.81L-31.39 287.29L-31.02 290.78L-30.58 294.26L-30.07 297.74L-29.48 301.23L-28.82 304.71L-28.06 308.2L-27.22 311.68" stroke="#e4e200" stroke-width="2.2" stroke-linecap="round" fill="none"/><path d="M-29.4 284.64L-29.26 288.18L-28.99 291.71L-28.61 295.25L-28.15 298.78L-27.62 302.32L-27.02 305.86L-26.35 309.39L-25.62 312.93L-24.84 316.46L-24 320" stroke="#e4e200" stroke-width="1.9" stroke-linecap="round" fill="none"/><path d="M-32.2 278.6V284.89M-32.16 258.27V269.78M-29.37 295.67V305.28M-31.16 286.53V292.11M-27.56 301.99V307.3M-28.32 288.18V297.47M-31.83 262.57V267.69M-29.78 278.53V285.04" stroke="#c8c400" stroke-width="0.6" stroke-opacity="0.7" fill="none"/>
<path d="M16 222V253.36" stroke="#8e8800" stroke-width="1" fill="none"/><path d="M16.2 246.5L16.2 249.78L16.2 253.07L16.21 256.35L16.23 259.63L16.27 262.92L16.32 266.2L16.4 269.48L16.51 272.76L16.66 276.05L16.84 279.33L17.07 282.61L17.35 285.9L17.68 289.18L18.08 292.46L18.55 295.75L19.08 299.03L19.7 302.31L20.4 305.59L21.2 308.88L22.09 312.16" stroke="#8c8600" stroke-width="1.1" fill="none"/><path d="M17.07 282.61L17.35 285.9L17.68 289.18L18.08 292.46L18.55 295.75L19.08 299.03L19.7 302.31L20.4 305.59L21.2 308.88L22.09 312.16" stroke="#e4e200" stroke-width="2.2" stroke-linecap="round" fill="none"/><path d="M19.8 286.68L19.94 290.01L20.23 293.34L20.63 296.68L21.12 300.01L21.68 303.34L22.32 306.67L23.02 310L23.79 313.34L24.62 316.67L25.5 320" stroke="#e4e200" stroke-width="1.9" stroke-linecap="round" fill="none"/><path d="M16.2 264.1V271.48M17.2 265.21V274.26M21.9 297.65V306.64M19.14 269.59V280.41M16.36 267.07V274.55M18.2 275.61V280.39M17.98 293.22V300.23M21.3 303.29V313.53" stroke="#c8c400" stroke-width="0.6" stroke-opacity="0.7" fill="none"/>
<path d="M-164.82 171.23V188.3M-160.2 171.17V188.49M-159.41 169.63V187.45M-158.08 170.97V187.99M-156.66 168.98V186.21M-154.67 170.32V186.68M-153.79 170.25V185.98M-146.87 170.82V187.8M-145.56 169.82V187.47M-144.35 168.91V188.17M-143.42 170.19V188.12M-142.72 171.26V187.36M-138.14 168.69V188.99M-136.54 169.79V189.14M-136.08 168.13V189.13M-135.62 168.11V187.65" stroke="#8a8600" stroke-width="0.6" stroke-opacity="0.55" fill="none"/><path d="M-168 172.3V184.16M-167.61 171.43V184.12M-167.04 172.33V184.37M-166.6 171.47V184.37M-165.97 172.6V184.76M-165.48 171.32V184.09M-164.99 172.8V185.94M-164.32 172.4V184.69M-163.8 171.3V184.66M-163.13 172.08V185.81M-162.8 172.36V184.17M-162.33 172.93V184.59M-161.67 172.2V184.15M-161.03 172.18V184.81M-160.49 172V185.55M-160.06 172.42V185.85M-159.55 172.09V184.09M-159.02 172.81V185.25M-158.71 172.69V184.48M-158.09 171.53V184.06M-157.79 172.67V184.84M-157.33 171.69V184.19M-156.87 172.22V185.94M-156.29 172.72V184.6M-155.61 171.33V185.03M-154.92 171.33V185.65M-154.4 171.22V185.2M-154.05 171.84V185.79M-153.64 171.48V184.22M-153.09 172.14V184.66M-152.43 171.61V185.55M-151.74 172.08V185.86M-151.21 172.85V184.88M-150.81 171.84V184.76M-150.33 172.75V185.11M-149.82 172.23V185.03M-149.31 172.38V184.04M-148.72 171.94V185.42M-148.34 172.04V185.41M-147.78 171.69V184.26M-147.11 171.1V185.89M-146.54 172.76V184.16M-145.89 172.11V184.56M-145.23 172.74V184.7M-144.57 171.09V185.21M-143.99 172.73V184.51M-143.31 171.51V184.23M-142.99 172.18V185.31M-142.56 171.24V185.87M-141.96 172.21V185.02M-141.36 171.83V185.37M-140.72 172.37V184.87M-140.39 171.48V184.76M-139.81 171.11V184.3M-139.33 171.57V184.31M-138.64 171.33V184.27M-137.95 171.82V184.27M-137.33 171.59V184.35M-136.9 172.83V185.28M-136.46 171.3V185.1M-136.14 172.03V184.15M-135.47 172.08V185.55M-134.93 172.66V185.67M-134.49 171.71V184.65M-133.99 172.6V184.07M-133.45 171.2V185.27M-132.87 171.17V184.12M-132.34 172.87V185.75M-131.81 171.51V184.18M-131.31 172.91V185.24M-130.73 172.4V184.65M-130.22 171.62V184.68M-129.58 171.6V184.72" stroke="#bcb600" stroke-width="0.6" stroke-opacity="0.7" fill="none"/><path d="M-168 173.78V182.94M-167.38 175.09V182.2M-166.93 174.9V181.85M-166.3 174.31V183.02M-165.95 174.56V182.31M-165.53 175.2V182.4M-164.9 175.26V181.85M-164.53 174.62V183.06M-163.84 174.97V182.89M-163.25 174.73V182.66M-162.63 174.48V182.8M-162.24 174.36V183.02M-161.89 174.07V182.87M-161.24 174.58V182.13M-160.68 174.55V183.3M-160.25 174.64V182.85M-159.62 174.48V183.04M-158.97 174.83V181.84M-158.51 173.83V181.86M-158.18 174.06V182.48M-157.69 174.17V182.23M-157.23 174.87V181.84M-156.92 175.04V182.63M-156.46 173.89V182.19M-156.08 174.56V182.27M-155.54 174.91V181.9M-155.11 174.01V182.02M-154.69 174.51V181.87M-154.3 173.99V183.06M-153.92 174.21V181.7M-153.25 173.91V181.77M-152.57 173.94V182.06M-152.13 175.1V181.86M-151.53 175.1V182.62M-150.9 174.43V182.3M-150.5 175.07V182.48M-149.81 173.94V182.06M-149.12 174.75V183.08M-148.61 174.29V182.44M-148.02 174.92V181.8M-147.54 173.71V182.09M-147.05 173.94V183.03M-146.58 175.28V182.15M-146.27 173.85V183.3M-145.73 174.58V182.34M-145.23 175.04V183.12M-144.66 175V182.49M-144.07 174.79V182.02M-143.59 174.6V181.92M-143.18 173.75V182.17M-142.8 173.89V182.18M-142.28 173.88V182.61M-141.74 174.44V182.29M-141.04 174.53V182.03M-140.7 174.49V182.97M-140.03 174.31V183.02M-139.45 175.08V182.51M-138.89 175.13V181.82M-138.56 174.21V183.01M-137.9 173.79V182.61M-137.38 174.74V181.85M-136.78 175.19V181.95M-136.39 173.95V182.52M-135.9 174.64V181.85M-135.27 174.26V182.26M-134.83 174.98V183.26M-134.32 174.4V182.12M-133.94 174V182.04M-133.42 174.41V181.74M-132.81 174.13V182.93M-132.27 175.19V182.01M-131.7 174.55V182M-131.05 174.3V182.86M-130.68 174.91V182.07M-130.13 174.33V182.15M-129.44 175.03V183.1" stroke="#e0dc00" stroke-width="0.6" stroke-opacity="0.85" fill="none"/><path d="M-168 176.74V180.29M-167.2 175.65V181.25M-166.78 175.8V180.93M-166.23 176.46V180.25M-165.36 176.34V181.4M-164.73 176.04V181.07M-163.99 176.89V181.03M-163.5 176.08V181.06M-162.7 176.24V180.3M-162.05 176.16V180.49M-161.6 176.48V180.48M-160.82 176.47V181.17M-160.17 176.13V180.6M-159.7 176.17V180.57M-159.22 176.73V180.54M-158.45 176.58V181.17M-157.55 175.73V181.04M-156.97 176.52V181.3M-156.29 176.23V181.12M-155.52 176.03V180.52M-155.11 175.76V180.35M-154.43 176.49V181.01M-153.8 176.62V181.37M-153.36 175.54V181.3M-152.78 175.8V180.96M-151.88 176.9V180.89M-151.27 175.52V181.06M-150.7 176.07V181.39M-150.18 176.21V180.72M-149.68 176.41V181.34M-149.05 176.01V181.41M-148.56 175.95V181.09M-147.98 175.52V180.8M-147.08 176.03V180.64M-146.18 176.31V180.3M-145.32 176.57V180.31M-144.83 176.73V180.84M-143.99 175.54V181.2M-143.13 176.25V181.45M-142.56 176.35V180.76M-141.75 175.88V180.44M-141.3 176.06V180.77M-140.72 176.32V180.7M-140.21 175.85V180.78M-139.69 176.04V180.18M-139.12 176.76V180.12M-138.26 175.67V180.15M-137.74 176.63V180.98M-137.21 175.51V181.3M-136.76 176.86V181.35M-135.96 176.44V180.75M-135.13 176.57V181.1M-134.63 176.3V180.84M-134.22 175.7V180.22M-133.71 176.55V180.11M-133.12 175.87V181.05M-132.59 175.52V180.47M-131.99 176.44V180.67M-131.56 175.72V180.41M-130.98 176.48V181.26M-130.35 175.67V180.12M-129.79 175.9V180.86" stroke="#ffff10" stroke-width="0.6" stroke-opacity="0.75" fill="none"/><path d="M-153.47 178.5V199.32M-144.81 178.5V197.94M-145.14 159.98V178.5M-145.96 178.5V197.2M-135.97 178.5V191.5M-146.54 151.03V178.5M-138.93 164.4V178.5M-146.88 157.68V178.5M-166.28 162.03V178.5M-149.89 163.94V178.5M-160.2 166.71V178.5M-138.75 162.19V178.5M-148.85 163.41V178.5M-145.76 164.81V178.5M-136.55 166.9V178.5M-163.94 178.5V193.86M-133.77 163.81V178.5M-164.45 163.41V178.5M-161.46 165.67V178.5M-133.95 161.28V178.5" stroke="#8c8600" stroke-width="0.7" stroke-opacity="0.7" fill="none"/>
<path d="M-119 170.95V187.37M-118.25 169.2V189.1M-115.36 170.67V186.57M-114.1 168.26V188.11M-106.88 168.54V188.15M-102.6 169.22V189.27M-99.63 170.58V188.98M-98.87 169.11V186.57M-98.06 171.33V187.71M-96.84 168.94V187.32M-95.45 170.19V188.22M-93.46 169.77V187.11M-93 170.29V186.97M-92.42 170.53V186.13M-91.56 168.36V186.55M-90.49 169.52V186.58M-88.21 167.62V187.45M-87.25 168.6V185.71M-84.74 169.39V188.91M-84.11 171.26V188.47" stroke="#8a8600" stroke-width="0.6" stroke-opacity="0.55" fill="none"/><path d="M-119 171.76V185.25M-118.55 172.16V185.39M-118.1 171.49V185.84M-117.53 172.03V185.07M-116.96 172.13V185.03M-116.39 172.44V185.38M-116.07 171.07V185.31M-115.56 171.58V184.91M-114.92 172.13V184.27M-114.51 172.79V185.88M-114.03 171.93V184.02M-113.5 172.22V184.65M-113.11 171.5V184.68M-112.62 171.6V184.77M-112.01 171V184.1M-111.39 171.84V185.59M-110.84 171.19V184.9M-110.27 172.02V184.47M-109.63 171.52V185.25M-108.94 171.46V184.66M-108.43 171.51V184.76M-107.83 171.62V184.34M-107.17 172.7V184.16M-106.63 171.24V184.09M-106 172.42V184.1M-105.34 171.18V185M-104.66 171.58V184.78M-103.99 172.78V185.73M-103.62 172.09V184.99M-102.97 171.19V184.12M-102.58 171.66V185.86M-102.23 171.91V185.93M-101.65 171.09V184.57M-101.31 172.89V184.37M-100.89 171.63V184.36M-100.29 171.54V185.13M-99.74 172.75V185.37M-99.16 171.46V185.73M-98.71 172.22V184.96M-98.07 171.04V185.68M-97.48 172.55V184.88M-97.11 172.84V184.52M-96.76 171.85V185.5M-96.24 172.11V184.94M-95.94 172.64V185.95M-95.5 172.72V184.88M-95 171.46V184.59M-94.52 171.67V185.89M-94.01 171.02V185.42M-93.33 171.06V185.83M-92.91 171.11V185.85M-92.34 172.72V185.68M-91.78 172.95V184.95M-91.14 172.28V184.87M-90.75 171.77V185.08M-90.06 172.12V184.17M-89.71 171.86V184.53M-89.21 171.04V184.39M-88.74 171.04V185.88M-88.24 171.74V185.22M-87.63 172.36V184.01M-87.19 171.06V185.84M-86.62 171.48V185.06M-85.98 172.25V185.98M-85.59 172.35V185.15M-85.11 171.88V184.42M-84.48 172.4V184.11M-84.06 171.02V184.19M-83.51 171.53V184.93M-83.15 171.46V184.71M-82.73 172.86V184.43M-82.24 171.81V185.17M-81.78 171.56V185.23M-81.32 172.86V184.95" stroke="#bcb600" stroke-width="0.6" stroke-opacity="0.7" fill="none"/><path d="M-119 174.38V182.05M-118.64 174.41V183.21M-118.34 174.11V181.84M-117.79 174.36V182.41M-117.33 174.13V182.27M-116.9 174.18V182.64M-116.41 174.67V183.15M-115.91 175.07V182.34M-115.23 174.27V182.39M-114.65 174.28V181.99M-114.11 173.83V182.11M-113.55 175.3V182.01M-113.02 175.09V182.18M-112.43 174.04V182.79M-111.91 174.87V183.21M-111.45 174.89V182.16M-110.96 175.07V182.15M-110.48 174.36V182.38M-110.01 174.07V183.04M-109.52 174.32V182.21M-108.93 174.98V183.29M-108.44 174.76V181.88M-108.09 174.01V183M-107.62 175.25V182.46M-107 174.46V181.89M-106.55 175.28V182.46M-105.91 173.82V182.43M-105.46 174.92V181.8M-104.93 174.71V182.49M-104.5 174.02V182.5M-103.91 173.81V182.32M-103.48 174.59V183.03M-103.12 174.88V182.81M-102.45 173.94V182.46M-101.77 173.72V181.76M-101.32 174.05V182.65M-100.66 174.95V183.1M-100.09 175.19V181.79M-99.74 174.52V182.51M-99.32 175.02V182.53M-98.68 174.86V182.53M-98.08 173.78V182.16M-97.51 174.71V181.8M-97.05 174.96V183.09M-96.74 175.17V182.76M-96.4 174.45V182.67M-95.75 173.84V182.51M-95.25 173.8V183.07M-94.73 175.24V182.08M-94.31 174.34V181.83M-93.88 173.9V181.8M-93.51 174.38V182.64M-93.21 173.99V182.67M-92.51 174.18V182M-91.91 173.95V181.95M-91.34 174.96V183.29M-90.65 173.95V182.73M-90.19 175.12V182.07M-89.7 174.18V183.29M-89 175.18V182.54M-88.68 174.46V182.42M-88.04 174.08V182.5M-87.64 175.23V181.75M-87.2 174.27V182.69M-86.81 173.93V183.03M-86.33 174.15V182.04M-85.99 175.25V182.25M-85.54 173.93V182.79M-84.93 173.83V181.72M-84.62 174.39V182.31M-84.25 175.18V181.79M-83.57 174.78V182.21M-83.03 174.39V182.36M-82.71 174.76V182.18M-82.28 175.15V181.9M-81.85 175.19V183.24M-81.32 174.46V182.35" stroke="#e0dc00" stroke-width="0.6" stroke-opacity="0.85" fill="none"/><path d="M-119 176.65V180.98M-118.34 176.88V180.23M-117.49 175.53V181.06M-116.94 175.51V181.05M-116.38 176.2V180.22M-115.53 176.9V180.96M-115.01 175.88V181.12M-114.21 175.89V180.7M-113.41 175.54V181.17M-112.58 176.33V181.45M-111.87 175.74V180.57M-111.07 175.68V181.07M-110.4 176.53V181.49M-109.82 176.63V180.78M-109.09 176.2V180.72M-108.22 175.94V180.62M-107.64 175.74V181.48M-107.17 176.68V180.22M-106.62 175.82V180.9M-105.74 176.73V180.71M-105.15 176.45V180.23M-104.51 176.83V181M-103.76 176.1V180.4M-102.87 176.34V181.45M-102.11 175.85V181.38M-101.64 175.65V180.17M-101.14 176.79V180.28M-100.28 176.79V180.57M-99.48 176.55V180.47M-98.79 176.26V181.21M-97.99 175.9V180.81M-97.15 176.83V181.38M-96.41 175.89V180.84M-95.9 176.37V181.15M-95.17 175.53V181.37M-94.36 175.52V181.48M-93.91 175.93V180.76M-93.36 175.87V181.07M-92.65 176.35V180.93M-92.08 175.66V181.44M-91.65 175.58V180.6M-91.12 176.79V180.84M-90.64 175.81V181.01M-89.89 176.69V181.32M-89.38 175.54V180.13M-88.63 176.17V181.43M-87.95 175.75V180.27M-87.28 176.55V181.28M-86.42 176.44V180.79M-85.58 175.52V180.94M-85.08 175.83V180.16M-84.28 175.74V180.74M-83.86 176.79V180.85M-83.44 176.58V181M-82.66 176.89V180.44M-81.89 176.35V181.19M-81.23 176.79V180.88" stroke="#ffff10" stroke-width="0.6" stroke-opacity="0.75" fill="none"/><path d="M-116.78 178.5V200.42M-94.52 147.4V178.5M-82.59 167.45V178.5M-109.93 178.5V203.21M-107.41 156.75V178.5M-86.1 178.5V207.56M-85.99 166.14V178.5M-114.68 165.36V178.5M-94.96 163.47V178.5M-113.48 178.5V188.75M-93.18 178.5V193.68M-98.18 178.5V191.02M-115.25 164.69V178.5M-89.19 178.5V192.72M-115.55 178.5V190.54M-82.82 178.5V192.98M-109.16 161.95V178.5M-105.34 178.5V194.47M-104.52 178.5V191.37M-83.06 163.34V178.5" stroke="#8c8600" stroke-width="0.7" stroke-opacity="0.7" fill="none"/>
<path d="M-129.3 185V226.28" stroke="#8e8800" stroke-width="1" fill="none"/><path d="M-129.1 217.25L-129.1 221.57L-129.1 225.89L-129.09 230.21L-129.07 234.54L-129.04 238.86L-128.98 243.18L-128.91 247.5L-128.81 251.82L-128.68 256.14L-128.51 260.46L-128.29 264.79L-128.04 269.11L-127.73 273.43L-127.36 277.75L-126.93 282.07L-126.43 286.39L-125.86 290.72L-125.21 295.04L-124.47 299.36L-123.64 303.68" stroke="#8c8600" stroke-width="1.1" fill="none"/><path d="M-127.36 277.75L-126.93 282.07L-126.43 286.39L-125.86 290.72L-125.21 295.04L-124.47 299.36L-123.64 303.68" stroke="#e4e200" stroke-width="2.2" stroke-linecap="round" fill="none"/><path d="M-125.78 270.14L-125.65 274.53L-125.38 278.91L-125.01 283.3L-124.56 287.68L-124.04 292.07L-123.45 296.46L-122.8 300.84L-122.09 305.23L-121.32 309.61L-120.5 314" stroke="#e4e200" stroke-width="1.9" stroke-linecap="round" fill="none"/><path d="M-128.47 239.18V246.67M-127.63 241.9V252.48M-127.7 243.99V253.16M-128.91 240.63V247.88M-126.86 259.92V269.99M-125.99 268.03V274.47M-129.81 244.27V249.26M-128.46 265.95V273.03" stroke="#c8c400" stroke-width="0.6" stroke-opacity="0.7" fill="none"/>
<path d="M-81.3 185V227.56" stroke="#8e8800" stroke-width="1" fill="none"/><path d="M-81.1 218.25L-81.1 222.71L-81.1 227.16L-81.09 231.62L-81.06 236.07L-81.03 240.53L-80.97 244.98L-80.89 249.44L-80.78 253.89L-80.63 258.35L-80.44 262.81L-80.2 267.26L-79.92 271.72L-79.57 276.17L-79.16 280.63L-78.68 285.08L-78.12 289.54L-77.49 293.99L-76.76 298.45L-75.94 302.9L-75.02 307.36" stroke="#8c8600" stroke-width="1.1" fill="none"/><path d="M-79.16 280.63L-78.68 285.08L-78.12 289.54L-77.49 293.99L-76.76 298.45L-75.94 302.9L-75.02 307.36" stroke="#e4e200" stroke-width="2.2" stroke-linecap="round" fill="none"/><path d="M-77.38 272.78L-77.23 277.3L-76.93 281.82L-76.52 286.35L-76.02 290.87L-75.44 295.39L-74.78 299.91L-74.06 304.43L-73.27 308.96L-72.41 313.48L-71.5 318" stroke="#e4e200" stroke-width="1.9" stroke-linecap="round" fill="none"/><path d="M-79.16 253.35V261.03M-78.66 269.23V274.68M-78.57 282.03V288.76M-74.69 303.49V308.01M-80.82 269.13V275.93M-78.28 277.95V286.37M-80.38 248.52V257.64M-74.27 294.35V305" stroke="#c8c400" stroke-width="0.6" stroke-opacity="0.7" fill="none"/>
<path d="M26.5 318V521M65.5 294V527M74.5 305V535M113.5 305V535M123.5 313V503M178.5 315V490M216.5 220V330M168.5 222V324M227.5 137V616M323.5 318V485M362.5 216V328M371.5 300V487M411.5 222V332M421.5 300V521" stroke="#545000" stroke-width="1.0" stroke-opacity="1.0" fill="none"/>
<path d="M275.5 133V520" stroke="#545000" stroke-width="1.0" stroke-opacity="1.0" fill="none"/>
<path d="M275.5 520V616" stroke="#4e4a00" stroke-width="1.0" stroke-opacity="1.0" fill="none"/>
<path d="M29.3 516.75V539.85M29.89 515.44V536.94M30.4 517.18V537.83M31.14 515.92V537.6M31.78 517.65V538.85M34.36 519V536.82M37.27 518.46V538.37M38.68 519V538.13M40.81 515.32V537.85M41.74 516.8V538.51M43.68 517.31V538.84M46.1 517.75V536.76M51.17 517.35V539.9M51.95 517.78V537.03M52.66 515.9V536.39M54.12 516.79V539.19M55.56 518.84V538.14M56.08 515.87V536.35M59.37 518.68V539.17M61.53 516.7V538.01M62.15 517.05V536.29M62.58 515.76V538.47M64.12 517.6V539.22M64.9 517.13V539.29" stroke="#8a8600" stroke-width="0.6" stroke-opacity="0.55" fill="none"/><path d="M27 520.41V535.81M27.42 519.36V534.61M27.82 518.83V535.77M28.42 519.52V535.28M28.81 520.14V535.97M29.45 520.47V536.26M29.77 520.26V536.35M30.13 520.29V535.79M30.8 518.84V536.32M31.17 519.33V536.44M31.5 520.36V534.91M32.18 519.53V536.35M32.82 520.44V535.04M33.35 519.9V535.26M33.86 520.1V534.56M34.46 520.2V534.75M35.04 519.78V535.39M35.35 520.02V535.58M35.75 518.61V536.33M36.22 519.01V534.92M36.82 519.57V535.95M37.48 520.26V535.57M38.08 519.72V536.01M38.75 519.55V535.41M39.1 520.22V535.21M39.65 519.76V536.41M39.97 519.8V534.68M40.62 519.9V535.81M41.14 519.52V535.95M41.71 519.94V536.2M42.27 518.99V536.49M42.83 519.29V534.52M43.46 519.03V536.32M43.85 519.05V535.01M44.46 519.05V535.99M45.1 518.73V535.52M45.44 519.2V535.85M45.8 520.49V535.37M46.15 518.8V534.93M46.62 518.76V535.17M47.14 519.12V536.08M47.64 518.75V536.29M48.24 519.15V536.09M48.7 519.9V536.21M49.25 519.92V534.56M49.75 520.03V536.12M50.12 518.93V536.05M50.62 519.45V535.16M51.01 519.4V534.67M51.4 519.29V536.36M51.91 519.2V535.57M52.53 518.91V535.35M53.14 520.46V535.96M53.84 518.62V535.81M54.45 518.98V534.8M55.07 518.62V536.41M55.6 519V535.36M56.25 518.89V535.15M56.75 518.53V535.99M57.28 520.31V535.71M57.79 520.27V534.76M58.47 519.13V536.13M59.09 519.83V536.27M59.62 519.49V534.89M60.05 519.54V535.39M60.37 520.17V534.73M60.89 520V534.77M61.51 519.87V534.84M62.01 520.1V534.77M62.66 519.34V536M63.18 518.91V535.53M63.83 519.65V535.03M64.49 519.68V536.13M65.18 519.22V536.12" stroke="#bcb600" stroke-width="0.6" stroke-opacity="0.7" fill="none"/><path d="M27 522.71V532.74M27.36 521.6V533.28M28.01 521.72V532.36M28.49 521.48V533.45M29.18 521.43V532.52M29.59 522.35V533.64M30.09 522.44V533.49M30.45 521.27V533.18M31.15 522.15V533.62M31.76 522.11V533.31M32.26 522.75V532.72M32.7 522.14V533.14M33.36 521.62V532.72M33.89 521.88V533.13M34.45 521.37V533.44M35.14 521.33V532.38M35.5 522.52V532.45M36.18 521.31V533.67M36.74 522V532.39M37.29 522.41V532.63M37.6 521.45V532.8M37.92 522.19V532.56M38.54 522.77V533.46M39.19 521.64V532.58M39.82 521.41V533.41M40.37 521.76V532.39M40.77 521.6V532.29M41.43 522.77V533.5M41.84 522.41V533.76M42.39 521.39V533.03M42.78 521.42V533.32M43.39 521.73V532.46M43.93 522.22V532.45M44.49 521.99V533.32M45.18 521.74V533.41M45.8 522.61V533.1M46.25 521.85V533.5M46.94 522.23V533.59M47.6 522.5V533.06M48.26 521.57V533.51M48.95 522.27V532.68M49.41 522.37V533.16M49.84 522.73V533.29M50.29 521.79V532.74M50.61 522.44V532.59M51.13 522.54V532.28M51.77 521.9V533.46M52.44 522.54V532.43M53.02 522.19V532.81M53.37 522.21V532.54M53.77 521.24V532.31M54.13 522.31V533.34M54.5 522.39V532.32M54.87 521.86V533.38M55.52 522.18V533.02M55.92 521.41V532.51M56.47 521.78V533.24M56.99 522.48V532.47M57.43 521.94V533.6M57.85 521.79V533.21M58.18 521.88V532.73M58.62 522.03V533.04M59 522.56V533.32M59.49 521.3V532.83M60.1 522.48V533.25M60.6 521.83V532.88M61.09 522.76V532.26M61.5 521.54V533.15M62.16 521.83V533.77M62.82 522.16V532.61M63.49 522.21V532.85M63.96 522.24V532.37M64.65 522.51V533.58" stroke="#e0dc00" stroke-width="0.6" stroke-opacity="0.85" fill="none"/><path d="M27 524.22V531.62M27.85 525.16V531.39M28.71 523.8V529.81M29.3 524.82V531.01M30.07 525.14V531.49M30.77 523.53V531.26M31.27 525.21V530.32M31.93 525.11V529.88M32.79 523.94V531M33.37 523.86V529.95M34.08 523.42V531.44M34.88 524.4V530.72M35.29 523.65V530.65M36.15 524.02V529.77M36.75 524.71V531.33M37.15 523.55V531.3M37.73 523.4V531.01M38.34 524.46V529.76M38.85 525.15V530.71M39.26 523.67V531.32M40.04 523.64V531.33M40.93 524.96V531.06M41.36 523.97V531.56M41.89 525.2V529.95M42.48 524.16V531.49M42.98 525.12V531.52M43.65 524.82V531.47M44.31 524.47V530.14M45.07 523.44V530.2M45.55 524.45V530.55M46.18 523.82V530.14M46.85 524.79V529.85M47.62 524.06V530.8M48.02 524.29V530.32M48.9 524.12V531M49.5 524.43V531.05M50.05 524.06V529.73M50.9 524.04V530.25M51.7 524.13V530.76M52.44 524.05V531.6M53.19 523.38V530.57M53.65 525.28V530.03M54.43 524.4V529.91M55.19 524.66V530.11M55.71 523.4V529.82M56.24 523.73V531.61M57.13 523.88V529.98M57.59 525.13V529.78M58.15 523.98V531.37M58.78 525.27V530.69M59.56 525.01V530.36M60.16 524.41V531.4M61.01 524.91V530.65M61.62 523.89V531.33M62.11 523.7V531.01M62.82 523.67V530.61M63.35 524.3V530.82M64.12 524.85V530.87M64.54 524.68V531.14" stroke="#ffff10" stroke-width="0.6" stroke-opacity="0.75" fill="none"/><path d="M36.44 527.5V540.17M28.25 513.84V527.5M44.29 527.5V540.92M51.29 514.65V527.5M44.89 515.84V527.5M57.53 509.72V527.5M56.69 514.56V527.5M59.88 515.93V527.5M45.84 527.5V544.55M49.73 508.41V527.5M59.26 513.9V527.5M32.79 527.5V544.42M54.4 527.5V541.88M29.52 527.5V544.07M47.09 510.08V527.5M31.19 515.09V527.5" stroke="#8c8600" stroke-width="0.7" stroke-opacity="0.7" fill="none"/>
<path d="M75.5 522.68V546.06M76.12 523.9V545.87M78.3 522.26V545.29M81.2 522.69V545.92M85.5 524.52V545.03M87.6 525.06V545.98M90.49 524.76V547.73M91.51 525.14V545.89M92.49 521.73V545M95.33 523.61V545.45M97.7 522.4V546.04M99.85 521.65V545.47M100.47 524.41V548.12M101.08 523.25V545.99M102.62 523.82V546.69M104.67 525.25V546.51M105.51 525.19V548.02M105.96 524.24V546.89M106.45 523.42V545.9M107.91 522.89V545.04M109.15 522.17V548.12M109.64 525.49V546.6M110.19 524.99V547.69M111.13 522.69V545.15" stroke="#8a8600" stroke-width="0.6" stroke-opacity="0.55" fill="none"/><path d="M75.5 526.29V543.66M75.83 526.16V543.2M76.35 526.35V543.7M76.81 526.44V544.43M77.46 526.26V544.53M77.95 525.38V544.34M78.32 526.39V543.05M78.81 526.3V543.27M79.27 526.87V543.63M79.95 526.57V543.77M80.4 526.39V544.97M80.86 526.03V544.9M81.38 525.11V543.86M82.08 526.96V543.9M82.62 525.39V544.89M83.26 526.59V544.34M83.72 525.29V543.81M84.37 525.35V544.89M84.68 526.47V543.9M85.2 525.28V544.61M85.85 526.13V544.92M86.29 526.7V543.04M86.66 526.6V543.62M87.1 526.97V544.03M87.66 526.9V544.71M88.03 525.19V543.85M88.42 526.22V544.61M88.92 525.95V544.42M89.59 525.09V543.23M90.01 526.03V544.71M90.66 526.2V543.72M91.25 525.01V543.19M91.89 526.88V543.76M92.45 526.31V543.8M93.01 526.78V544.33M93.57 526.89V544.03M93.93 526.52V544.14M94.5 525.45V543.66M94.82 525.27V543.81M95.22 526.02V543.49M95.63 525.25V543.25M96.06 526.92V544.27M96.61 525.39V544.1M97.02 526.56V544.61M97.33 525.05V543.51M97.81 526.56V544.38M98.14 526.86V543.57M98.69 526.56V543.35M99.36 525.84V544.33M99.92 525.9V544.47M100.33 525.27V543.41M100.71 525.89V544.58M101.33 526.92V544.01M101.82 525.81V544.63M102.46 525.06V543.27M103.11 526.53V543.07M103.72 526.2V543.89M104.03 525.61V544.68M104.44 526.27V543.56M105.13 525.65V544.69M105.68 526.4V544.17M106.12 525.35V544.12M106.56 526.86V543.54M106.87 525.38V543.32M107.55 525.13V544.94M108.18 525.55V543.96M108.51 526.27V544.56M109.14 526.86V543.82M109.61 526.74V544.9M110.13 525.01V544.88M110.55 525.78V544.88M111.04 525.08V544.07M111.45 525.76V544.12M112.01 525.84V544.01M112.54 525.43V543.56M112.94 525.02V544.13M113.49 525.4V543.6" stroke="#bcb600" stroke-width="0.6" stroke-opacity="0.7" fill="none"/><path d="M75.5 529V541.46M75.87 528.12V542.22M76.44 528.62V542.22M76.77 528.6V542.21M77.35 528.1V541.5M77.9 528.01V541.82M78.59 529.22V541.02M78.94 527.88V541.87M79.55 529.08V541.48M80.22 528.55V541.99M80.63 528.11V541.24M81.24 528.29V541.81M81.76 528.52V540.88M82.2 527.81V541.32M82.83 528.69V541.77M83.47 528.55V541.32M84.14 527.82V541.46M84.83 528.24V541.57M85.35 528.92V541.76M85.95 528.22V541.47M86.45 528.84V542.28M86.78 528.53V541.5M87.46 528.39V541M88.1 529.23V541.6M88.62 527.7V541.2M89.31 529.07V541.25M89.96 528.9V541.39M90.62 528.57V541.13M91.29 527.98V541.09M91.67 528.66V541.94M92.02 527.76V541.2M92.36 528.65V542.01M92.82 528.43V540.81M93.42 527.97V542.08M93.77 528.53V541.06M94.1 529.14V541.05M94.71 528.94V541.23M95.25 529.22V542.26M95.93 529V540.78M96.45 527.71V542.05M96.86 528.39V541.91M97.23 528V541.01M97.56 528.54V541.2M98.21 528.39V541.56M98.75 527.87V541.83M99.14 528.94V540.78M99.67 528.37V541.74M100.36 528.84V541.01M100.77 527.8V542.21M101.41 528.92V542.1M102 528.2V541.24M102.53 528.96V541.15M103.19 528.16V541.69M103.79 528.39V542.3M104.42 528.38V541.49M105.03 528.11V542.09M105.67 528.33V542.15M106.33 528.7V540.74M106.91 527.8V541.57M107.43 528.47V541.25M108.02 528.28V541.71M108.57 529.08V541.45M109.13 528.44V541.15M109.66 529.15V542M110.15 528.67V542.2M110.75 527.71V542.13M111.36 528.56V540.77M111.85 527.99V541.95M112.28 527.94V541.88M112.88 528.44V541.93M113.3 527.73V542.05" stroke="#e0dc00" stroke-width="0.6" stroke-opacity="0.85" fill="none"/><path d="M75.5 530.96V538.37M76.35 531.6V538.04M77.18 530.31V537.86M77.66 531.47V538.25M78.4 532.03V538.13M79.04 531.29V539.11M79.45 530.51V539.33M80.23 531.64V539.43M81.03 532.13V539.27M81.92 532.03V537.67M82.59 531.49V537.6M83 531.2V538.17M83.51 530.83V538.83M84.17 530.76V538.22M84.75 530.98V538.45M85.53 530.97V538.29M86.31 532.09V537.62M86.87 530.79V539.01M87.53 530.89V538.58M88.02 531.06V539.63M88.92 531.94V537.81M89.35 531.14V538.82M89.83 530.54V537.9M90.65 532.05V539.69M91.47 530.34V538.22M92.11 530.71V538.54M92.66 530.61V537.61M93.31 530.59V538.41M94.14 532.35V539.56M94.81 531.94V538.19M95.22 530.33V538.15M96.06 531.19V537.91M96.79 531.63V538.7M97.19 530.35V537.96M97.66 530.92V539.27M98.52 530.72V537.98M99.07 531.13V538.62M99.66 531.82V538.33M100.13 532.22V539.03M100.85 530.72V539.53M101.64 531.57V538.09M102.51 530.67V539.06M103.06 530.35V538.21M103.95 531.42V537.76M104.43 530.29V539.05M105 531.57V539.36M105.82 531.26V539.36M106.34 532.39V537.74M107.19 532.36V538.56M108.08 530.49V539.71M108.87 531.94V539.84M109.69 530.68V537.8M110.17 530.26V537.74M110.71 530.58V539.53M111.4 532.36V537.9M112.15 532.1V539.72M113.03 531.26V539.24M113.59 531.97V538.95" stroke="#ffff10" stroke-width="0.6" stroke-opacity="0.75" fill="none"/><path d="M82.15 520.98V535M89.36 535V549.09M108.08 535V551.22M92.03 513.73V535M95.49 535V550.17M111.1 535V551.54M103.75 516.61V535M85.57 535V548.66M112.19 535V550.91M83.32 515.76V535M88.22 520.82V535M96.35 514.77V535M98.79 519.73V535M90.95 535V548.72M87.82 515.91V535M108.39 518.39V535" stroke="#8c8600" stroke-width="0.7" stroke-opacity="0.7" fill="none"/>
<path d="M68.5 297L71.5 302L74.2 307L74.4 318L71.5 321L70 325L69.2 332L68 322L67.6 311Z" fill="#e6e400" fill-opacity="0.95" stroke="#e6e400" stroke-opacity="0.76" stroke-width="0.6" stroke-linejoin="round"/><path d="M69.5 301L73 308L73.4 316L70 318Z" fill="#ffff30" fill-opacity="0.9" stroke="#ffff30" stroke-opacity="0.7200000000000001" stroke-width="0.6" stroke-linejoin="round"/><path d="M65.8 305L67.2 318" stroke="#d8d400" stroke-width="1.5" fill="none"/>
<path d="M116.3 305L119.8 309L122.6 313L123 326L120.3 322L117.8 323L115.3 333L114.6 325L115.2 314Z" fill="#e6e400" fill-opacity="0.95" stroke="#e6e400" stroke-opacity="0.76" stroke-width="0.6" stroke-linejoin="round"/><path d="M116.8 308L121.3 313L121.8 320L117.3 319Z" fill="#ffff30" fill-opacity="0.9" stroke="#ffff30" stroke-opacity="0.7200000000000001" stroke-width="0.6" stroke-linejoin="round"/>
<path d="M131.2 464.3L136.5 443.3L145.8 406L162.2 347.8L167.9 321" stroke="#a8a400" stroke-width="4.8" stroke-opacity="0.45" fill="none" stroke-linecap="round" stroke-linejoin="round"/><path d="M125.4 490L131.2 464.3" stroke="#a8a400" stroke-width="3.4" stroke-opacity="0.35" fill="none"/><path d="M131.2 464.3L136.5 443.3L145.8 406L162.2 347.8L167.9 321" stroke="#dcd800" stroke-width="2.5" fill="none" stroke-linejoin="round" stroke-opacity="0.95"/><path d="M125.4 490L131.2 464.3" stroke="#dcd800" stroke-width="1.9" fill="none" stroke-opacity="0.95"/><path d="M124.2 505L125.4 490" stroke="#d4d000" stroke-width="1.2" fill="none" stroke-opacity="0.9"/><path d="M131.2 464.3L136.5 443.3L145.8 406L162.2 347.8L167.9 321" stroke="#ffff30" stroke-width="1.0" fill="none" stroke-linejoin="round"/><path d="M161.15 348.78V342.55M140.82 433.9V429.87M132.89 455.8V452.03M126.59 483V480.12M168.49 323.51V319.34M140.98 425.77V418.63M156.22 376.14V373.67M127.81 477.41V471.3M161.99 343.63V336.95M147.53 407.58V404.87M126.33 480.25V477.1M140.47 420.63V418.18M130.2 481.2V479.1M144.09 420.79V412.88M156.02 377.55V372.7M131.89 473.41V470.39M157.7 364.46V356.96M134.17 450.88V447.99M144.1 413.57V407.68M153.37 374.83V370.83M164.93 330.4V324.48M133.35 451.28V445.98M130.52 466.39V462.54M164.58 334.33V328.99M169.79 327.78V321.83M165.93 339.17V335.53M169.92 327.46V320.48M137.25 452.16V445.54M169.12 327.64V325.57M155.27 367.43V363.32M136.55 438.13V433.26M132.64 453.02V449.78M127.92 472.76V468.68M148.18 396.85V394.43M141.97 422.91V416.39M151.46 381.75V375.65M163.89 330.51V327.34M132.24 466.52V461.28M133 457.42V453.31M159.97 366.44V358.79M169.02 325.63V318.61M164.89 325.44V321.04M157.02 375.09V372.57M135.75 453.42V446.86M134.04 447.03V439.62M155.79 373.84V369.17M162.22 344.04V339.3M138.08 451.35V443.91M164.66 346.99V339.99M165.81 329.52V325.59M125.57 481.79V475.79M156.45 379.57V375.33M135.14 460.86V456.02M159.02 361.56V359M138.45 445.91V443.76M167.53 331.69V325.74M132.45 467.05V459.07M162.98 336.16V330.44M123.46 489.25V483.54M163.64 345.69V337.89" stroke="#bcb800" stroke-width="0.6" stroke-opacity="0.6" fill="none"/>
<path d="M181.7 464.8L196.2 406.4L212.5 348L215.3 329.3" stroke="#a8a400" stroke-width="4.8" stroke-opacity="0.45" fill="none" stroke-linecap="round" stroke-linejoin="round"/><path d="M179.8 477L181.7 464.8" stroke="#a8a400" stroke-width="3.4" stroke-opacity="0.35" fill="none"/><path d="M181.7 464.8L196.2 406.4L212.5 348L215.3 329.3" stroke="#dcd800" stroke-width="2.5" fill="none" stroke-linejoin="round" stroke-opacity="0.95"/><path d="M179.8 477L181.7 464.8" stroke="#dcd800" stroke-width="1.9" fill="none" stroke-opacity="0.95"/><path d="M178.7 490.4L179.8 477" stroke="#d4d000" stroke-width="1.2" fill="none" stroke-opacity="0.9"/><path d="M181.7 464.8L196.2 406.4L212.5 348L215.3 329.3" stroke="#ffff30" stroke-width="1.0" fill="none" stroke-linejoin="round"/><path d="M179.87 478.84V472.24M189.59 440.12V434.4M212.97 338.26V334.65M190.88 442.29V435.69M177.63 476.37V470.49M214.86 336.3V328.85M200.27 392.04V388.8M180.32 474.37V470.17M189.98 427.24V420.37M184.6 467.13V461.55M196.19 419.7V413.12M180.97 471.74V468.51M204.6 385.37V379.82M196.96 409.45V405.4M210.42 367.79V360.33M181.63 471.69V463.92M195.77 399.88V396.8M208.53 356.06V354.03M178.78 470.4V467.56M213.06 344.18V338.37M181.2 475.55V469.06M213.03 337.35V335.19M193.88 417.72V409.81M215.71 339.34V333.6M181.19 470.92V467.39M179.5 479.86V472.32M212.99 333.46V330.83M207.98 370.45V362.75M199.93 402.09V394.54M183.14 471.87V464.9M180.5 476.78V473.5M216.41 334.85V331.7M203.58 376.01V370.33M180.94 469.55V466.47M213.67 336.61V332.52M179.2 477.82V475.32M185.65 454.47V451M187.83 451.42V444.98M205.66 366.21V363.38M179.35 475.43V469.71M215.26 343.87V341.57M198.27 401.86V395.34M214.81 340.16V332.58M181 470.27V467.52M213.21 350.01V344.85M198.46 395.53V389.04M207.03 363.78V359.11M179.17 474.83V467.35M209.53 353.26V348.18M182.23 471.83V467.03M206.7 369.75V364.12M182.16 478.48V474.15M182.2 470.27V467.88M196.06 417.45V409.91M205.5 379.09V375.53M205.09 369.97V363.47M214.62 343V335.77M213.11 344.74V339.41M179.44 468.23V465.1M212.34 342.5V340.5" stroke="#bcb800" stroke-width="0.6" stroke-opacity="0.6" fill="none"/>
<path d="M327.7 464.8L342.7 406.4L358.4 348L361.4 329.3" stroke="#a8a400" stroke-width="4.8" stroke-opacity="0.45" fill="none" stroke-linecap="round" stroke-linejoin="round"/><path d="M325.6 475L327.7 464.8" stroke="#a8a400" stroke-width="3.4" stroke-opacity="0.35" fill="none"/><path d="M327.7 464.8L342.7 406.4L358.4 348L361.4 329.3" stroke="#dcd800" stroke-width="2.5" fill="none" stroke-linejoin="round" stroke-opacity="0.95"/><path d="M325.6 475L327.7 464.8" stroke="#dcd800" stroke-width="1.9" fill="none" stroke-opacity="0.95"/><path d="M324.5 487L325.6 475" stroke="#d4d000" stroke-width="1.2" fill="none" stroke-opacity="0.9"/><path d="M327.7 464.8L342.7 406.4L358.4 348L361.4 329.3" stroke="#ffff30" stroke-width="1.0" fill="none" stroke-linejoin="round"/><path d="M358.35 340.69V333.88M349.99 385.69V377.89M359.22 341.27V335.1M332.11 454.32V446.73M327.53 470.01V466.86M331.29 446.39V439.2M357.55 342.49V334.8M331.67 444.42V438.39M353.58 359.64V354.32M329.05 473.7V468.93M328.67 469.12V464.74M347.43 396.16V390.16M358.93 343.14V336.67M361.9 333.68V326.18M335.66 435.67V428.44M326.76 476.32V470.67M330.35 457.59V454.93M360.05 339.12V336.39M325.99 475.09V472.64M328.69 472.27V465.38M358.87 353.72V348.98M360.91 341.61V338.93M356.65 346.05V342.5M341.9 409.08V405.21M346.63 395.17V391.26M326.82 467.92V461.37M350.13 372.87V368.72M354.09 364.94V360.06M328.35 472.92V465.77M338.76 423.14V417.3M359.13 350.14V346.36M362.15 340.86V336.54M353.38 360.13V354.51M325.01 469.33V465.86M361.49 345.17V339.23M351.19 373.11V367.38M330.34 451.13V445.73M329.2 468.39V463.63M361.38 344.58V341.09M362.95 337.42V329.66M334.74 429.88V425.45M324.31 474.85V468.92M351.41 366.04V363.18M359.88 347.76V340.15M362.75 337.91V334.55M352.34 378.46V373.58M335.8 430.36V425.01M351.41 385.99V381.8M353.81 362.02V355.42M357.47 340.79V335.02M362.6 338.93V334.77M331.53 444.11V438.82M360.26 351.52V346.42M358.23 339.58V336.77M328.83 455.04V449.71M328.35 472.62V467.7M328.46 464.25V458.89M343.6 407.87V405.66M360.67 333.75V329.67M359.37 342.13V338.64" stroke="#bcb800" stroke-width="0.6" stroke-opacity="0.6" fill="none"/>
<path d="M376.3 464.8L390.8 406.4L407.7 348L410.7 332.8" stroke="#a8a400" stroke-width="4.8" stroke-opacity="0.45" fill="none" stroke-linecap="round" stroke-linejoin="round"/><path d="M374.4 475L376.3 464.8" stroke="#a8a400" stroke-width="3.4" stroke-opacity="0.35" fill="none"/><path d="M376.3 464.8L390.8 406.4L407.7 348L410.7 332.8" stroke="#dcd800" stroke-width="2.5" fill="none" stroke-linejoin="round" stroke-opacity="0.95"/><path d="M374.4 475L376.3 464.8" stroke="#dcd800" stroke-width="1.9" fill="none" stroke-opacity="0.95"/><path d="M373.3 487L374.4 475" stroke="#d4d000" stroke-width="1.2" fill="none" stroke-opacity="0.9"/><path d="M376.3 464.8L390.8 406.4L407.7 348L410.7 332.8" stroke="#ffff30" stroke-width="1.0" fill="none" stroke-linejoin="round"/><path d="M391.28 414.89V411.31M402.36 374.99V371.62M408 344.33V341.15M410.81 346.16V344.02M408.69 346.33V340.56M389.69 413.92V408.65M403.87 369.16V366.45M393.39 396.42V391.66M378.71 454.79V450.36M407.61 358.27V351.98M383.29 447.73V440.73M406.78 342.9V337.36M386.37 434.31V430.93M408.03 352.3V344.53M410.35 338.32V331.89M392.57 396.37V391.31M409.67 347.19V341.97M374.38 463.56V461.38M409.42 340.43V333.6M407.93 347.18V339.64M387.4 417.55V411.24M386.93 420.46V416.32M376.18 477.73V471.63M381.31 449.13V443.48M376.23 478.05V471.5M380.58 456.55V450.94M408.43 350.12V344.6M410.18 349.37V341.65M374.07 475.46V473.04M400.06 385.11V381.82M392.84 406.73V404.11M390.96 403.27V398.26M387.7 421.79V415.45M403.88 358.95V353.81M409.32 352.47V345.79M406.68 347.61V343.17M382.61 448.34V444.57M376.68 467.7V462.12M380.62 459.07V456.39M409.05 341.63V338.48M388.22 416.76V411.87M376.93 468.72V466.53M406.5 360.23V354.22M378.38 451.12V448.3M411.2 343.27V337.13M378.86 463.18V455.47M376.75 474.72V469.36M410.66 339.83V337.75M408.58 345.98V341.84M380.91 459.3V454.98M412.07 339.76V337.17M385.67 432.01V425.42M410.5 337.72V334.09M406.27 345.51V339.54M375.33 465.02V460.87M395.76 392.45V388.67M404.66 368.02V363.67M378.63 452.74V445.31M410.7 337.8V331.94M376.77 473.75V467.97" stroke="#bcb800" stroke-width="0.6" stroke-opacity="0.6" fill="none"/>
<path d="M168 222V252.72" stroke="#8e8800" stroke-width="1" fill="none"/><path d="M168.2 246L168.2 249.22L168.2 252.43L168.21 255.65L168.24 258.86L168.27 262.08L168.33 265.3L168.42 268.51L168.53 271.73L168.68 274.94L168.87 278.16L169.12 281.38L169.41 284.59L169.76 287.81L170.18 291.02L170.67 294.24L171.24 297.46L171.89 300.67L172.63 303.89L173.46 307.1L174.4 310.32" stroke="#8c8600" stroke-width="1.1" fill="none"/><path d="M169.12 281.38L169.41 284.59L169.76 287.81L170.18 291.02L170.67 294.24L171.24 297.46L171.89 300.67L172.63 303.89L173.46 307.1L174.4 310.32" stroke="#e4e200" stroke-width="2.2" stroke-linecap="round" fill="none"/><path d="M172 285.36L172.15 288.62L172.46 291.89L172.87 295.15L173.38 298.42L173.98 301.68L174.65 304.94L175.39 308.21L176.2 311.47L177.07 314.74L178 318" stroke="#e4e200" stroke-width="1.9" stroke-linecap="round" fill="none"/><path d="M170.08 273.28V278.75M173.17 291.94V300.72M170.74 263V271.36M174.98 305.43V309.45M169.66 273.45V282.15M169.11 259.45V270.89M169.05 267.54V275.24M173.42 294.01V301.47" stroke="#c8c400" stroke-width="0.6" stroke-opacity="0.7" fill="none"/>
<path d="M216.1 220V250.4" stroke="#8e8800" stroke-width="1" fill="none"/><path d="M216.3 243.75L216.3 246.93L216.3 250.12L216.31 253.3L216.33 256.48L216.37 259.66L216.42 262.85L216.5 266.03L216.61 269.21L216.75 272.39L216.93 275.57L217.16 278.76L217.44 281.94L217.77 285.12L218.16 288.31L218.62 291.49L219.15 294.67L219.76 297.85L220.46 301.04L221.25 304.22L222.13 307.4" stroke="#8c8600" stroke-width="1.1" fill="none"/><path d="M217.16 278.76L217.44 281.94L217.77 285.12L218.16 288.31L218.62 291.49L219.15 294.67L219.76 297.85L220.46 301.04L221.25 304.22L222.13 307.4" stroke="#e4e200" stroke-width="2.2" stroke-linecap="round" fill="none"/><path d="M219.86 282.7L220 285.93L220.29 289.16L220.68 292.39L221.16 295.62L221.72 298.85L222.35 302.08L223.05 305.31L223.81 308.54L224.63 311.77L225.5 315" stroke="#e4e200" stroke-width="1.9" stroke-linecap="round" fill="none"/><path d="M218.91 282.94V288.58M218.99 275.09V282.71M217.45 262.29V266.8M222.59 295.87V300.6M215.99 266.43V273.1M219.27 276.9V284.09M221.23 286.69V296.31M223.14 297.56V306.38" stroke="#c8c400" stroke-width="0.6" stroke-opacity="0.7" fill="none"/>
<path d="M362 216V249.28" stroke="#8e8800" stroke-width="1" fill="none"/><path d="M362.2 242L362.2 245.48L362.2 248.97L362.21 252.45L362.23 255.94L362.27 259.42L362.32 262.9L362.39 266.39L362.5 269.87L362.63 273.36L362.81 276.84L363.02 280.32L363.29 283.81L363.61 287.29L363.98 290.78L364.42 294.26L364.93 297.74L365.52 301.23L366.18 304.71L366.94 308.2L367.78 311.68" stroke="#8c8600" stroke-width="1.1" fill="none"/><path d="M363.02 280.32L363.29 283.81L363.61 287.29L363.98 290.78L364.42 294.26L364.93 297.74L365.52 301.23L366.18 304.71L366.94 308.2L367.78 311.68" stroke="#e4e200" stroke-width="2.2" stroke-linecap="round" fill="none"/><path d="M365.6 284.64L365.74 288.18L366.01 291.71L366.39 295.25L366.85 298.78L367.38 302.32L367.98 305.86L368.65 309.39L369.38 312.93L370.16 316.46L371 320" stroke="#e4e200" stroke-width="1.9" stroke-linecap="round" fill="none"/><path d="M365.3 289.9V296.31M363.76 261.98V273.18M366.65 303.21V309.55M364.9 280.44V290.65M365.77 294.41V302.65M364.36 272.37V279.65M364.86 281.79V289.25M365.43 291.47V296.05" stroke="#c8c400" stroke-width="0.6" stroke-opacity="0.7" fill="none"/>
<path d="M411 222V253.36" stroke="#8e8800" stroke-width="1" fill="none"/><path d="M411.2 246.5L411.2 249.78L411.2 253.07L411.21 256.35L411.23 259.63L411.27 262.92L411.32 266.2L411.4 269.48L411.51 272.76L411.66 276.05L411.84 279.33L412.07 282.61L412.35 285.9L412.68 289.18L413.08 292.46L413.55 295.75L414.08 299.03L414.7 302.31L415.4 305.59L416.2 308.88L417.09 312.16" stroke="#8c8600" stroke-width="1.1" fill="none"/><path d="M412.07 282.61L412.35 285.9L412.68 289.18L413.08 292.46L413.55 295.75L414.08 299.03L414.7 302.31L415.4 305.59L416.2 308.88L417.09 312.16" stroke="#e4e200" stroke-width="2.2" stroke-linecap="round" fill="none"/><path d="M414.8 286.68L414.94 290.01L415.23 293.34L415.63 296.68L416.12 300.01L416.68 303.34L417.32 306.67L418.02 310L418.79 313.34L419.62 316.67L420.5 320" stroke="#e4e200" stroke-width="1.9" stroke-linecap="round" fill="none"/><path d="M414.95 288.47V295.32M414.76 297.56V308.71M412.08 266.55V270.25M413.27 285.33V291.47M410.41 264.25V272.14M412.15 270.55V279.38M414.92 284.52V292.04M412.1 266.4V274.36" stroke="#c8c400" stroke-width="0.6" stroke-opacity="0.7" fill="none"/>
<path d="M227.66 170.01V187.68M228.18 170.53V189.13M229.12 168.58V187.36M230.81 171.09V185.55M232.33 170.25V186.1M232.96 170.39V187.76M239.6 169.41V185.69M240.21 168.2V187.49M242.08 171.11V188.51M243.16 171.36V185.68M244.64 170.76V189.02M245.29 170.27V186.72M246.27 170.07V189.36M246.8 167.71V187.15M247.88 170.11V188.72M248.75 170.91V188.23M251.11 169.9V186.94M253.94 169.5V187.63M255.82 168.4V186.95M256.42 168.36V186.83M257.34 169.49V189.33M263.46 170.22V187.79M265.44 167.96V186.72" stroke="#8a8600" stroke-width="0.6" stroke-opacity="0.55" fill="none"/><path d="M227 171.44V184.29M227.63 171.29V184.27M228.25 172.68V185.02M228.92 171.97V185.69M229.61 172.05V185.25M230.07 171.61V184.19M230.47 171.89V184.07M230.98 171.41V184.06M231.38 171.16V184.48M231.83 172.41V185.72M232.32 171.24V184.04M232.8 171.7V185.53M233.34 172.38V184.11M233.65 171.55V185.83M234.01 171.1V185.54M234.63 171.09V185.23M235.04 171.57V185.97M235.63 172.11V184.91M235.97 172.03V185.12M236.66 172.15V184.42M237.07 172.23V185.6M237.55 171.53V184.18M238.02 172.14V185.47M238.48 171.45V185.46M238.81 172.84V185.72M239.23 172.02V185.48M239.59 172.94V185.45M240.04 172.29V184.74M240.7 171.45V185.2M241.11 171.05V185.94M241.71 172.68V185.9M242.3 171.03V185.42M242.9 171.64V184.33M243.46 171.89V184.91M243.96 171.81V184.37M244.63 172.04V185.95M245.21 172.2V185.91M245.78 171.48V185.84M246.25 172.85V184.79M246.61 171.14V185.45M247.05 171.26V185.08M247.61 171.36V184.61M248.04 171.14V185.96M248.7 172.1V185.75M249.02 172.17V184.84M249.65 172.93V184.11M250.05 172.75V184.24M250.74 171.66V184.53M251.34 171.53V185.49M251.7 172.87V185.67M252.4 171.8V184.58M252.86 171.85V185.66M253.39 171.69V185.75M253.73 171.14V184.76M254.1 172.9V185M254.66 172.07V184.54M255.32 172.8V184.96M255.8 172.57V185.27M256.15 171.11V184.99M256.67 172.57V184.91M257.05 172.57V185.79M257.4 172.51V185.49M257.96 172.54V185.41M258.38 172.99V185.72M258.94 171.76V184.11M259.29 172.53V184.16M259.76 172.32V184.62M260.45 171.9V185M260.92 172.86V184.91M261.35 171.33V184.2M261.76 171.38V185.92M262.28 171.37V184.47M262.73 172.24V185.36M263.22 172.31V185M263.67 172.08V184.69M264.14 171.56V184.66M264.65 171.47V185.4M265.22 172.72V184.39" stroke="#bcb600" stroke-width="0.6" stroke-opacity="0.7" fill="none"/><path d="M227 174.45V182.52M227.42 175.15V182.96M227.76 174.43V182.7M228.45 173.76V182.97M228.93 174.62V181.87M229.31 174.55V181.75M229.91 174.75V181.99M230.36 174.54V182.45M230.82 174.56V183.28M231.33 174.04V182.48M231.87 174.25V181.74M232.52 175.18V182.64M233.11 174.39V181.83M233.75 174.84V182.46M234.21 174.98V182.41M234.61 174.49V182.8M235.23 173.92V182.9M235.7 173.99V181.87M236.22 175.23V183.13M236.88 174.96V182.89M237.51 174.5V182.53M238 173.78V183.24M238.42 174.93V182.06M238.92 174.9V181.81M239.59 173.76V182.43M240.23 173.96V181.95M240.7 175.13V182.22M241.13 174.64V182.57M241.65 174.01V182.1M242.28 174.38V182.04M242.98 173.89V182.02M243.42 174.85V182.21M243.78 174.16V182.08M244.3 174.5V181.84M244.97 173.96V182.28M245.43 174.33V182.93M245.86 175.23V182.3M246.16 173.86V183.27M246.5 173.95V181.83M247.19 174.26V182.36M247.83 173.86V182.03M248.47 174.92V182.22M248.95 174.92V182.06M249.35 175.07V182.41M249.8 174.03V181.73M250.12 174.96V182.83M250.76 174.07V181.72M251.39 173.9V181.77M252.09 174.16V182.23M252.53 173.88V182.63M253.04 174.07V181.89M253.43 173.87V182.78M253.85 174.9V183.02M254.34 175V182.01M254.7 175.27V181.72M255.08 174.2V182.3M255.61 174.57V183.07M256.23 175.03V182.53M256.62 174.94V183.04M257.05 174.51V182.95M257.71 174.57V182.19M258.32 175.22V183.24M258.84 174.73V181.85M259.53 174.46V181.81M259.95 174.79V182.96M260.3 174.7V183.29M260.86 174.01V182.53M261.47 173.82V182.25M262.14 175.14V181.83M262.54 175.1V182.42M262.95 175.05V182.7M263.34 175.26V181.98M263.71 173.71V182.43M264.24 174.63V183.13M264.67 174.29V181.81M265.21 175.09V181.77M265.57 173.72V182.6" stroke="#e0dc00" stroke-width="0.6" stroke-opacity="0.85" fill="none"/><path d="M227 176.37V181.11M227.84 176.6V180.9M228.26 176.11V180.68M228.69 176.24V181.01M229.19 176.88V180.62M229.81 176.22V181.09M230.31 176.21V180.26M230.81 175.71V180.99M231.28 176.7V180.52M232.13 176.79V181.25M232.73 176.6V180.94M233.6 176.28V181.39M234.09 175.57V180.72M234.74 175.54V181.36M235.38 176.2V180.24M236.09 175.65V180.34M236.51 176.85V180.26M237.16 176.78V181.42M237.73 176.87V180.62M238.57 175.59V181.23M239.02 176.1V180.48M239.72 176.44V180.54M240.59 176.6V180.16M241.17 175.76V180.55M241.73 176.58V181.04M242.49 176.62V180.3M243.34 175.6V180.39M244 175.82V181.33M244.54 176.12V181.17M245.09 176.53V180.84M245.92 176.33V180.41M246.38 176.4V181.3M247.07 176.85V181.37M247.73 176.78V181.32M248.56 176.43V180.57M249.21 176.36V180.36M249.91 176.17V180.36M250.67 175.64V180.42M251.24 176.68V180.86M251.66 175.59V180.83M252.08 176.85V180.62M252.88 176.76V180.38M253.65 175.69V181.05M254.23 176.09V181.34M255.09 176.69V181.04M255.73 176.43V180.41M256.54 175.82V181.09M257.34 176.59V181.18M257.84 176V180.33M258.27 176.19V181.24M259.06 176.7V180.96M259.93 176.59V181.4M260.56 176.83V181.09M260.97 176.3V180.28M261.62 175.88V181.45M262.11 175.73V180.53M262.71 176.62V180.53M263.27 176.89V181.2M263.98 175.73V180.34M264.47 176.77V180.76M264.97 175.53V180.35M265.66 175.87V180.34" stroke="#ffff10" stroke-width="0.6" stroke-opacity="0.75" fill="none"/><path d="M262.19 145.07V178.5M264.13 154.57V178.5M248.18 178.5V199.54M240.59 178.5V197.58M237.18 178.5V194.22M235.59 178.5V197.78M258.93 155.24V178.5M259.24 178.5V190.65M260.77 166.55V178.5M232.64 162.81V178.5M246.29 178.5V189.46M258.84 178.5V194.08M243.28 167.45V178.5M239.02 163.79V178.5M251.83 162.56V178.5M259.14 178.5V189.48M263.94 178.5V189.23M239.31 167.82V178.5M247.92 163.92V178.5M261.88 166.31V178.5" stroke="#8c8600" stroke-width="0.7" stroke-opacity="0.7" fill="none"/>
<path d="M276 168.23V188.19M277.82 171.3V187.79M280.11 171.46V188.83M281.44 170.05V185.59M286.08 170.48V186.53M287.02 170.92V189.29M288.51 167.62V187.83M289.1 168.25V188.16M290.13 171.48V189.43M290.55 171.3V189.37M291.45 168.55V185.61M293.19 169.73V188.95M295.34 168.03V189.4M296.66 169.58V187.18M297.15 170.39V187.71M300.33 169.23V189.13M302.53 168.12V186.58M303.74 169.35V188.36M304.57 167.91V185.89M308.19 167.55V189.4M309.83 170.42V185.73M311.34 168.83V187.18M313.53 171.23V186.01" stroke="#8a8600" stroke-width="0.6" stroke-opacity="0.55" fill="none"/><path d="M276 172.95V185.12M276.57 172.86V184.62M277.13 172.61V184.18M277.5 171.24V185.54M278.16 171.74V185.9M278.77 171.21V185.01M279.36 171.53V185.73M280.03 171.5V184.87M280.42 171.05V185.73M280.95 171.03V184.81M281.34 171.56V184.03M281.67 172.84V185.58M282.01 172.35V185.89M282.43 172.47V185.42M282.77 172.84V185.88M283.35 171.71V185.35M283.95 171.3V185.35M284.52 171.55V185.47M285.22 172.78V184.27M285.85 172.68V184.27M286.17 171.4V184.43M286.67 171V185.29M286.97 171.82V184.96M287.36 172.25V184.05M288.01 171.45V184.08M288.5 171.44V184.05M288.86 171.65V185.81M289.4 172.77V185.39M289.8 172.64V184.06M290.4 172.01V185.6M290.94 172.42V184.94M291.41 172.45V185.54M292.09 172.6V185.66M292.78 171.48V184.05M293.28 171.49V184.91M293.71 172.21V184.81M294.11 172.77V185.58M294.66 172.82V185.64M294.99 171.37V184.2M295.35 171.7V184.89M295.97 171.73V184.7M296.3 172.73V184.26M296.77 172.69V185.66M297.43 171.16V184.22M297.81 171.15V184.23M298.15 172.69V184.14M298.74 171.11V184.58M299.1 172.17V185.71M299.49 172.51V185.07M299.87 172.35V185.62M300.25 172.35V184.35M300.78 172.68V185.45M301.18 171.53V185.23M301.6 171.05V185.79M302.27 171.23V185.18M302.79 172.54V184.52M303.37 171.17V185.29M303.73 171.06V184.73M304.38 172.78V185.93M304.74 171.82V185.77M305.43 172.6V185.07M305.79 171.05V184.18M306.27 171.73V185.05M306.97 172.46V185.61M307.51 171.98V184.44M308.09 172.57V184.72M308.49 172.06V184.08M309.08 171.02V184.49M309.52 171.07V185.87M310.02 172.91V184.22M310.69 172.06V184.47M311.28 172.07V185.93M311.63 171.37V185.29M312.32 172.75V184.26M312.7 172.6V185.3M313.2 171.24V184.28M313.73 172.72V184.35" stroke="#bcb600" stroke-width="0.6" stroke-opacity="0.7" fill="none"/><path d="M276 174.6V181.88M276.4 174.04V182.96M277 174.78V182.78M277.51 173.95V181.72M277.84 173.82V183.27M278.5 174.63V182.52M279.14 173.86V182.01M279.5 175.08V182.59M280.03 173.96V181.87M280.49 174.69V183.26M281.03 174.31V182.36M281.5 175V183.21M281.92 174.25V182.27M282.3 174.27V182.56M282.69 174.95V182.7M283.17 174.92V183.05M283.64 174.72V181.95M284.08 174.02V183.2M284.72 175.22V182.87M285.38 174.15V182.17M285.95 175.19V182.67M286.31 174.56V183.16M286.76 174.23V183.07M287.37 174.32V181.79M287.7 173.83V182.28M288.28 174.83V181.81M288.85 174.5V182.86M289.28 174.72V182.75M289.79 175.04V182.79M290.13 174.28V183.19M290.62 174.17V182.05M291.12 174.36V182.4M291.54 173.81V182.4M292.16 175.12V182.65M292.53 174.25V182.67M293.02 174.62V183.21M293.62 175.2V182.62M294.1 174.53V182.31M294.51 175.08V181.88M295.18 174.62V182.28M295.65 174.99V183.16M296.04 174.29V181.99M296.47 174.3V182.27M296.99 175.28V182.79M297.37 175.13V183.14M297.75 174.09V181.98M298.27 173.73V182.87M298.66 174.62V181.71M299.29 173.87V182.07M299.98 173.95V183.21M300.45 174.35V182.63M300.96 174.69V183.28M301.29 174.27V182.53M301.83 174.07V182.62M302.32 174.18V182.01M302.8 174.04V181.75M303.33 174.98V182.1M303.73 174.61V181.82M304.42 174.3V182.85M304.96 174.91V182.61M305.49 174.49V183.26M306.17 174.87V181.97M306.76 174.2V181.72M307.2 174.56V182M307.6 174.58V182.88M308.06 174.71V182.73M308.62 174.32V183.08M309.12 175.24V182.64M309.81 174.43V181.73M310.22 174.62V182.54M310.67 174.51V181.97M311.21 174.36V182.17M311.59 174.51V182.47M311.93 174.12V181.86M312.29 174.88V183.01M312.82 174.32V182.89M313.35 174.38V183.1M313.84 174.82V182.21" stroke="#e0dc00" stroke-width="0.6" stroke-opacity="0.85" fill="none"/><path d="M276 176.31V180.11M276.42 176.87V180.69M277.28 176.09V181.03M277.94 176.17V181.34M278.63 176.89V180.61M279.2 175.82V180.3M279.74 176.57V181.14M280.49 176V180.58M281.15 176V180.56M281.84 175.86V180.78M282.63 176.57V181.33M283.48 176.46V181.03M284.32 176.7V181.35M284.79 176.05V181.04M285.33 176.09V181.27M285.9 175.66V180.14M286.55 176.41V181.29M287.15 176.42V180.35M287.72 176.02V181.18M288.47 175.81V180.63M289.17 176.32V180.44M289.89 176.22V180.34M290.35 176.85V181.1M291.01 175.68V181.04M291.87 176.13V180.96M292.64 175.91V181.2M293.43 175.86V180.53M293.94 176V180.22M294.53 175.75V180.27M295.16 176.66V180.65M295.78 176.5V181.17M296.31 175.92V180.94M297.15 176.57V181.44M297.95 175.91V180.8M298.65 176.22V180.49M299.06 175.85V180.31M299.95 175.66V180.27M300.41 175.91V181.13M300.93 176.7V180.89M301.51 176.4V181.2M302.33 176.19V181.5M302.97 176.01V180.2M303.64 175.78V180.6M304.2 175.69V180.16M304.79 176.4V180.64M305.42 175.84V180.97M305.91 176.83V180.98M306.6 176.36V180.3M307.02 176.7V181.06M307.52 176.82V180.27M308.37 176.28V181.5M308.93 176.52V181.34M309.65 176.08V180.4M310.47 175.83V180.9M311.08 176.48V181.26M311.71 175.72V180.44M312.51 175.59V181.06M313.2 176.72V181.21" stroke="#ffff10" stroke-width="0.6" stroke-opacity="0.75" fill="none"/><path d="M302.5 147.08V178.5M298.38 159.69V178.5M283.85 158.85V178.5M300.73 178.5V197.41M310.65 178.5V193.63M288.07 178.5V192.7M282.87 147.7V178.5M312.55 166.93V178.5M295.82 160.81V178.5M300.94 178.5V191.49M311.02 166.3V178.5M305.84 178.5V189.97M308.63 167.76V178.5M306.61 162.09V178.5M292.95 178.5V189.83M294.03 178.5V191.46M279.5 178.5V194.21M294.86 163.53V178.5M304.08 178.5V193.47M277.42 161.48V178.5" stroke="#8c8600" stroke-width="0.7" stroke-opacity="0.7" fill="none"/>
<path d="M265.7 185V226.28" stroke="#8e8800" stroke-width="1" fill="none"/><path d="M265.9 217.25L265.9 221.57L265.9 225.89L265.91 230.21L265.93 234.54L265.96 238.86L266.02 243.18L266.09 247.5L266.19 251.82L266.32 256.14L266.49 260.46L266.71 264.79L266.96 269.11L267.27 273.43L267.64 277.75L268.07 282.07L268.57 286.39L269.14 290.72L269.79 295.04L270.53 299.36L271.36 303.68" stroke="#8c8600" stroke-width="1.1" fill="none"/><path d="M267.64 277.75L268.07 282.07L268.57 286.39L269.14 290.72L269.79 295.04L270.53 299.36L271.36 303.68" stroke="#e4e200" stroke-width="2.2" stroke-linecap="round" fill="none"/><path d="M269.22 270.14L269.35 274.53L269.62 278.91L269.99 283.3L270.44 287.68L270.96 292.07L271.55 296.46L272.2 300.84L272.91 305.23L273.68 309.61L274.5 314" stroke="#e4e200" stroke-width="1.9" stroke-linecap="round" fill="none"/><path d="M269.52 283.09V291.62M265.11 239.43V246.84M267.51 252.39V258.02M266.3 250.16V257.93M267.96 272.1V281.19M268.89 276.19V284.21M266.95 238.89V249.07M268.32 276.86V280.35" stroke="#c8c400" stroke-width="0.6" stroke-opacity="0.7" fill="none"/>
<path d="M313.7 185V227.56" stroke="#8e8800" stroke-width="1" fill="none"/><path d="M313.9 218.25L313.9 222.71L313.9 227.16L313.91 231.62L313.94 236.07L313.97 240.53L314.03 244.98L314.11 249.44L314.22 253.89L314.37 258.35L314.56 262.81L314.8 267.26L315.08 271.72L315.43 276.17L315.84 280.63L316.32 285.08L316.88 289.54L317.51 293.99L318.24 298.45L319.06 302.9L319.98 307.36" stroke="#8c8600" stroke-width="1.1" fill="none"/><path d="M315.84 280.63L316.32 285.08L316.88 289.54L317.51 293.99L318.24 298.45L319.06 302.9L319.98 307.36" stroke="#e4e200" stroke-width="2.2" stroke-linecap="round" fill="none"/><path d="M317.62 272.78L317.77 277.3L318.07 281.82L318.48 286.35L318.98 290.87L319.56 295.39L320.22 299.91L320.94 304.43L321.73 308.96L322.59 313.48L323.5 318" stroke="#e4e200" stroke-width="1.9" stroke-linecap="round" fill="none"/><path d="M313.86 252.46V256.65M313.81 259.17V262.62M315.72 251.16V256.61M318.92 280.98V289.6M316.06 254.84V259.22M321.01 299.51V305.9M314.74 257.62V263.43M315.4 252.33V262.1" stroke="#c8c400" stroke-width="0.6" stroke-opacity="0.7" fill="none"/>
<path d="M421.5 318V521M459.5 294V527M469.5 305V535M508.5 305V535M517.5 313V503M572.5 315V490M610.5 220V330M562.5 222V324M621.5 137V616M717.5 318V485M756.5 216V328M766.5 300V487M805.5 222V332M815.5 300V521" stroke="#545000" stroke-width="1.0" stroke-opacity="1.0" fill="none"/>
<path d="M670.5 133V520" stroke="#545000" stroke-width="1.0" stroke-opacity="1.0" fill="none"/>
<path d="M670.5 520V616" stroke="#4e4a00" stroke-width="1.0" stroke-opacity="1.0" fill="none"/>
<path d="M421.5 516.99V536.1M421.91 517.82V539.44M429 518.36V536.44M429.74 516.18V537.12M431.71 515.06V538.12M432.5 515.03V537.29M435.11 515.34V539.72M437.38 518.23V537.54M438.12 517.39V538.09M440.79 516.21V538.74M441.89 515.45V539.73M443.57 518.15V539.15M444.41 516.46V537.5M446.98 516.19V536.92M448.06 517.41V538.06M450.75 517.15V539.22M453.3 518.55V539.15M454.37 517.66V537.62M455.8 515.97V537.16M457.58 516.35V537.05" stroke="#8a8600" stroke-width="0.6" stroke-opacity="0.55" fill="none"/><path d="M421.5 519.66V535.78M422.17 518.63V534.64M422.7 519.42V535.65M423.03 518.79V534.97M423.71 520.01V536.22M424.18 519.69V535.01M424.74 519.84V536.01M425.37 520.2V536.08M425.77 520.08V536.17M426.08 518.52V536.08M426.49 519.03V535.37M427.04 520.34V535.02M427.59 519.04V535M428.03 518.5V534.73M428.51 519.3V535.17M429.14 518.98V536.44M429.74 519.89V535.15M430.44 520.21V534.66M430.75 519V536.39M431.2 518.98V536.21M431.54 519.52V536.16M432.11 519.01V534.85M432.8 519.99V535.69M433.3 520.01V534.64M433.81 519.13V535.73M434.34 519.9V535.19M434.98 520.1V535.81M435.67 519.58V535.5M436.23 520.39V535.04M436.87 519.05V534.54M437.42 518.98V536M437.95 519.92V534.76M438.52 518.61V535.38M439.12 519.28V535.36M439.65 519.61V535.99M440.26 518.65V534.79M440.86 520.13V535.42M441.37 519.15V536.35M442.05 519.69V535.99M442.37 519.14V534.86M443.02 518.76V535.34M443.7 519.74V535.16M444.09 520.04V536.02M444.65 519.74V536.3M445.2 519.96V534.89M445.75 519.88V536.47M446.08 519.91V534.96M446.64 518.59V534.63M447.17 520.2V535.05M447.65 519.24V535.75M448.28 518.9V534.63M448.93 518.75V534.96M449.42 519.91V534.78M449.73 520.37V536.2M450.39 519.11V535.74M451.03 519.98V535.83M451.42 519.02V535.53M451.94 520.1V536.18M452.51 520.18V535.06M453.13 519.86V535.67M453.45 518.71V535.62M453.84 519V536.29M454.16 519.71V535.99M454.6 519.52V535.88M455.22 519.02V536.04M455.75 519.29V535.97M456.22 519.42V536.49M456.76 519.85V535.51M457.41 519.41V534.72M457.8 519.7V536.42M458.14 519.85V534.64M458.65 520.27V534.68M459.12 520.31V534.73M459.64 518.76V535.85" stroke="#bcb600" stroke-width="0.6" stroke-opacity="0.7" fill="none"/><path d="M421.5 521.32V533.17M421.94 521.55V532.82M422.39 521.97V533.4M422.88 521.91V532.94M423.55 521.86V532.8M424.14 522.67V533.79M424.46 521.39V532.34M425.14 521.74V533.6M425.74 521.5V533.1M426.18 522.48V532.75M426.75 522.08V532.29M427.2 522.24V532.2M427.81 521.92V533.3M428.44 522.43V532.34M429.04 521.34V533.12M429.65 522.37V533.53M430.27 521.62V532.65M430.91 521.83V533.77M431.35 522.56V532.36M431.96 521.34V532.26M432.41 521.73V532.66M432.94 522.19V532.67M433.63 522.56V533.72M434.26 522.36V533.2M434.87 522.78V533.09M435.49 521.85V533.76M436.07 521.98V533.73M436.54 521.33V533.65M436.96 521.95V532.61M437.36 522.49V533.6M438.03 522.28V532.44M438.65 522.31V532.47M439.11 522.25V532.74M439.54 521.59V532.32M440.13 521.63V533.11M440.61 522.77V533.53M440.96 521.75V533.13M441.38 522.16V533.77M441.85 521.24V532.53M442.49 522.44V533.59M442.93 521.41V533.06M443.25 521.59V533.38M443.82 521.73V533.44M444.28 522.23V533.59M444.6 522.34V533.41M445.23 521.85V533.3M445.81 521.2V533.61M446.27 521.53V533.02M446.65 522.29V532.28M447.21 521.96V532.55M447.75 522.12V533.67M448.11 522.22V533.54M448.6 521.66V533.3M448.95 521.34V533.32M449.5 521.51V533.61M450.01 522.45V532.77M450.34 522.21V533.24M451.02 521.22V533.66M451.41 522.35V532.86M452.06 521.93V532.65M452.69 522.3V532.45M453.19 521.23V533.16M453.62 522.6V532.98M453.97 521.61V532.98M454.59 522.27V533.2M455.08 522.55V533.01M455.41 521.33V532.82M455.93 521.57V532.23M456.49 521.47V532.82M457.01 521.54V532.45M457.61 522.02V533.14M458.21 522.23V533.4M458.67 522.2V533.31M459.01 522.15V532.56M459.52 521.83V532.66" stroke="#e0dc00" stroke-width="0.6" stroke-opacity="0.85" fill="none"/><path d="M421.5 524.57V529.97M422.31 524.1V531.57M422.87 524.63V531.04M423.46 524.42V529.99M423.94 523.66V530.63M424.66 523.61V530.47M425.31 524.84V531.21M425.77 523.7V530.35M426.51 524.99V530.15M426.95 523.85V531.05M427.46 524.82V531.11M428.14 523.81V531.05M428.71 524.13V530.42M429.21 523.58V530.85M429.81 524.8V530.35M430.66 525.23V531.33M431.51 523.62V530.06M431.93 523.74V531.44M432.81 524.01V530.45M433.65 523.94V529.76M434.36 523.71V530.11M435.19 525.02V530.92M435.81 523.86V531.55M436.54 523.88V530.98M437.29 523.93V531.06M437.81 524.01V531.31M438.27 523.55V530.09M439.17 524.01V531.5M439.84 524.91V530.1M440.39 524.84V531.62M441.24 523.64V531.38M442.13 523.41V530.98M442.97 524.34V529.72M443.73 523.98V530.59M444.55 524.07V530.87M445.26 524.19V530.03M445.72 523.95V531.13M446.41 523.79V530.25M447.29 523.6V529.89M448.02 523.83V531.5M448.86 524.98V530.88M449.35 523.52V531.33M450.25 525.16V530.36M450.96 524.68V529.92M451.64 523.91V531.12M452.16 524.96V531.05M452.71 524.41V531.08M453.39 524.49V529.73M454.09 523.56V530.61M454.51 524.08V531M454.98 525.24V529.89M455.6 523.83V530.54M456.28 524.08V531.3M456.83 524.98V531.34M457.35 524.62V530.22M457.91 524.76V530M458.46 525.01V529.93M459.2 524.2V530.74" stroke="#ffff10" stroke-width="0.6" stroke-opacity="0.75" fill="none"/><path d="M445.19 513.37V527.5M455.15 527.5V539.3M433.44 509.32V527.5M453.15 508.95V527.5M447.17 509.76V527.5M446.45 527.5V539.14M455.5 527.5V544.55M434.12 527.5V540.59M440.98 511.91V527.5M428.74 527.5V539.31M452.7 527.5V542.26M433.94 510.09V527.5M424.43 515.17V527.5M424.14 510.8V527.5M428.45 513.84V527.5M442.21 527.5V541.76" stroke="#8c8600" stroke-width="0.7" stroke-opacity="0.7" fill="none"/>
<path d="M470.51 524.03V547.18M472 521.67V545.99M474.67 522.75V545.49M475.68 522.86V545.66M482.08 523.87V545.06M482.57 522.38V544.89M485.89 522.29V544.87M487.98 523.92V544.7M488.81 524.42V545.93M490.39 524.51V547.39M491.1 525.26V545.89M493.15 524.22V545.99M494.32 523.78V545.59M495.25 522.47V546.93M499 521.79V545.76M500.52 522.27V548.26M501.96 522.05V547.64M504.86 522.13V545.95M506.33 522.35V546.02" stroke="#8a8600" stroke-width="0.6" stroke-opacity="0.55" fill="none"/><path d="M470 525.3V544.47M470.33 525.3V543.49M470.71 525.61V543.57M471.31 526.78V544.25M471.65 525.92V544.2M472.03 526.59V543.38M472.69 526.7V543.18M473.05 526.07V543.85M473.46 525.06V543.38M474.11 525.2V544.49M474.54 525.27V543.64M474.98 525.52V544.78M475.68 525.6V544.59M476 526.83V543.89M476.64 525.65V544.97M476.96 526.59V543.34M477.62 526.3V544.66M478.1 526.91V544.63M478.62 526.5V544.55M478.95 526.05V543.51M479.26 525.34V543.19M479.88 525.41V544.5M480.34 525.1V544.36M480.92 525.76V544.31M481.41 526.7V543.94M481.85 526.31V544.14M482.55 525.24V543.4M482.98 526.23V544.02M483.58 526.52V544.65M484.12 525.68V543.33M484.74 526.6V544.12M485.4 526.17V543.44M485.98 525.07V544.24M486.65 525.44V544.98M487.06 525.03V544.75M487.39 525.57V544.62M488.08 526.82V544.46M488.51 526.58V543.88M489.13 525.18V544.17M489.57 526.29V543.89M490.03 526.6V544.73M490.44 526.16V544.58M490.76 525.96V543.62M491.2 526.23V543.26M491.58 526.18V543.45M491.93 526.72V543.87M492.59 525.65V544.64M493.21 526.53V543.41M493.64 525.81V543.39M494 525.1V543.4M494.45 526.52V543.25M495.1 525.83V544.69M495.59 526.26V543.68M496.03 526.37V543.19M496.37 525.57V544.7M497 525.06V544.21M497.57 526.96V544.86M497.92 526.13V543.79M498.61 526.27V543.49M499.19 525.44V543.47M499.76 526.15V543.99M500.39 525.03V543.03M501.09 525.65V543.27M501.56 526.89V543.23M502.06 525.43V544.41M502.45 526.75V543.18M502.98 525.67V543.9M503.45 526.25V544.09M503.83 525.86V543.03M504.19 526.26V544.93M504.66 525.12V544.06M505.13 525.57V544.26M505.57 526.16V544.04M505.9 525.25V543.02M506.34 525.18V544.98M506.85 526.04V544.42M507.38 525.84V543.69M507.74 526.15V543.55M508.04 525.05V544.21" stroke="#bcb600" stroke-width="0.6" stroke-opacity="0.7" fill="none"/><path d="M470 528.06V541.1M470.48 527.74V541.56M470.98 527.96V540.87M471.43 528.1V541.25M472.08 527.9V540.72M472.63 528.61V541.86M473.09 527.96V540.96M473.45 528.43V542.2M474.14 528.32V541.29M474.69 527.94V540.83M475.34 527.82V541.01M475.82 527.9V542.1M476.26 528.72V541.2M476.69 527.95V542.07M477.19 528.06V541.68M477.56 528.22V541.05M478.04 528.94V542.07M478.73 529.2V540.89M479.16 528.8V541.05M479.49 528.6V541.98M479.9 528.25V541.79M480.22 528.62V541.23M480.62 528.24V541.17M481.1 528.53V541.09M481.72 528.3V541.29M482.06 528.03V540.97M482.49 528.71V541.57M482.94 528.93V541.9M483.51 529.02V541M484.1 528.52V542.11M484.4 527.85V541.66M484.77 528.44V541.08M485.35 528.3V541.15M485.9 527.73V542.03M486.41 528.54V541.06M486.72 529.13V541.23M487.17 527.9V540.9M487.51 528.69V541.11M487.84 527.71V540.87M488.43 529.04V541.79M488.89 527.87V541.07M489.37 529.11V541.02M489.78 529.1V540.9M490.34 528.7V541.78M490.69 529.17V540.81M491.31 529.07V541M491.7 528.29V541.48M492.38 528.19V541.13M492.84 527.71V541.08M493.54 528.79V542M493.86 527.98V542.26M494.17 527.88V542.28M494.76 528.97V540.98M495.19 528.29V540.81M495.78 527.8V541.02M496.11 528.63V541.44M496.73 527.75V541.6M497.07 527.96V541.14M497.44 528.92V542.14M498 528.43V542.28M498.43 529.28V542.2M499.03 528.04V541.33M499.67 527.99V540.91M500.32 529.18V541.95M500.98 529.28V541.84M501.47 529.3V540.94M501.77 527.82V540.83M502.29 529.11V541.2M502.81 528.53V541.23M503.18 528.52V541.2M503.84 528.64V541.64M504.51 528.41V541.72M504.95 528.04V541.45M505.33 529.14V541.98M505.89 527.73V540.91M506.53 528.81V542.2M506.95 528.12V542.18M507.27 528.98V541.6M507.67 528.71V541.76M507.98 528.04V541.86" stroke="#e0dc00" stroke-width="0.6" stroke-opacity="0.85" fill="none"/><path d="M470 531.34V538.37M470.82 531.35V539.45M471.52 532.16V538.97M471.94 530.65V538.17M472.78 531.03V538.01M473.52 531.47V539.81M474.14 531.05V537.7M475.02 532.15V539.69M475.64 530.2V538.96M476.37 530.79V539.14M476.94 531.05V538.76M477.6 530.51V539.34M478.09 531.27V539.09M478.95 531.61V539.43M479.36 532.27V539.18M480.11 530.21V537.91M480.52 530.56V538.71M481.33 530.92V539.38M481.93 531.31V539.72M482.64 531.64V537.93M483.47 531.09V538.57M484.36 530.57V539.7M485.06 531.09V538.79M485.9 530.49V539.55M486.36 532.05V539.66M486.98 532.16V539.13M487.46 530.94V539.82M488.34 530.82V539.46M489.1 530.99V539.72M489.73 531.9V537.76M490.61 530.44V537.83M491.22 531.71V538.02M491.68 531.62V539.4M492.41 531.24V538.9M493.02 530.23V537.7M493.55 530.8V539.48M494.04 530.41V537.97M494.54 531.07V539.28M495.25 531.69V537.99M495.7 532.23V538.07M496.41 531.89V537.84M497.25 530.19V538.85M497.67 531.74V537.79M498.17 532.06V538.78M498.81 530.76V538.44M499.32 531.48V538.82M500.02 530.87V539.22M500.82 531.06V537.78M501.36 531.2V539.04M502.25 530.72V538.33M502.89 530.23V538.16M503.34 531.99V539.3M504.11 530.87V539.28M504.62 530.56V539M505.13 531.94V537.75M505.59 532.3V538.72M506.03 532.19V537.74M506.76 531.47V539.62M507.41 532.34V537.64M508.16 530.92V539.27" stroke="#ffff10" stroke-width="0.6" stroke-opacity="0.75" fill="none"/><path d="M502.2 535V551.93M485.72 519.02V535M475.04 535V549.08M503.06 535V551.04M490.99 516.52V535M482.98 518.72V535M478.14 535V550.96M472.62 535V551.42M492.17 535V552.31M471.46 535V552.04M485.65 516.35V535M502.42 535V550.44M481.96 520.73V535M478.18 535V547.53M495.82 535V550.62M505.4 535V551.76" stroke="#8c8600" stroke-width="0.7" stroke-opacity="0.7" fill="none"/>
<path d="M463 297L466 302L468.7 307L468.9 318L466 321L464.5 325L463.7 332L462.5 322L462.1 311Z" fill="#e6e400" fill-opacity="0.95" stroke="#e6e400" stroke-opacity="0.76" stroke-width="0.6" stroke-linejoin="round"/><path d="M464 301L467.5 308L467.9 316L464.5 318Z" fill="#ffff30" fill-opacity="0.9" stroke="#ffff30" stroke-opacity="0.7200000000000001" stroke-width="0.6" stroke-linejoin="round"/><path d="M460.3 305L461.7 318" stroke="#d8d400" stroke-width="1.5" fill="none"/>
<path d="M510.8 305L514.3 309L517.1 313L517.5 326L514.8 322L512.3 323L509.8 333L509.1 325L509.7 314Z" fill="#e6e400" fill-opacity="0.95" stroke="#e6e400" stroke-opacity="0.76" stroke-width="0.6" stroke-linejoin="round"/><path d="M511.3 308L515.8 313L516.3 320L511.8 319Z" fill="#ffff30" fill-opacity="0.9" stroke="#ffff30" stroke-opacity="0.7200000000000001" stroke-width="0.6" stroke-linejoin="round"/>
<path d="M525.7 464.3L531 443.3L540.3 406L556.7 347.8L562.4 321" stroke="#a8a400" stroke-width="4.8" stroke-opacity="0.45" fill="none" stroke-linecap="round" stroke-linejoin="round"/><path d="M519.9 490L525.7 464.3" stroke="#a8a400" stroke-width="3.4" stroke-opacity="0.35" fill="none"/><path d="M525.7 464.3L531 443.3L540.3 406L556.7 347.8L562.4 321" stroke="#dcd800" stroke-width="2.5" fill="none" stroke-linejoin="round" stroke-opacity="0.95"/><path d="M519.9 490L525.7 464.3" stroke="#dcd800" stroke-width="1.9" fill="none" stroke-opacity="0.95"/><path d="M518.7 505L519.9 490" stroke="#d4d000" stroke-width="1.2" fill="none" stroke-opacity="0.9"/><path d="M525.7 464.3L531 443.3L540.3 406L556.7 347.8L562.4 321" stroke="#ffff30" stroke-width="1.0" fill="none" stroke-linejoin="round"/><path d="M537.89 409.43V401.6M522.38 472.83V465.03M519.04 484.32V479.31M531.9 435.73V433.72M548.55 385.52V377.95M520.84 491.03V488.79M518.39 486.63V484.4M557.9 336.95V332.97M530.91 457.22V452.04M553.64 359.3V355.31M558.38 353.02V348.43M541.71 396.25V393.01M542.19 391.07V388.09M559.91 346.14V340.41M548.25 369.95V365.93M548 386.98V383.37M528.58 450.13V447.63M527.4 450.15V444.29M531.49 438.36V435.16M528.54 464.66V459.5M534.78 432.35V429.59M520.76 483.51V476.33M550.5 381.35V373.93M556.28 341.82V339.53M524.7 470.54V468.27M538.6 416.25V409.58M564.18 325.81V319.31M526.75 454.6V447.26M556.1 341.62V337.64M545.55 381.7V378.08M520.68 479.88V477.64M537.51 425.38V421.62M538.71 419.94V415.35M535.52 421.72V416.01M520.74 483.14V476M539.08 424.73V419.42M557.75 348.28V346.01M532.1 441.74V435.96M534.79 438.51V435.57M555.54 347.22V339.37M530.86 453.16V450.78M540.56 411.49V406.27M530.15 452.36V448.72M561.88 337.07V333.52M527.23 459.07V452.61M549.51 376.1V369.73M537.54 411.17V405.64M533.28 442.54V438.68M523.4 483.37V475.74M524.43 466.21V460.08M528.01 453.79V446.09M546.9 385.24V379.15M530.86 456.33V452.03M522.22 471.78V464.12M560.57 326.22V322.02M528.85 458.45V455.94M529.56 441.71V438.25M550.3 383.26V376.87M526.42 459.7V456.19M560.81 331.04V327.41" stroke="#bcb800" stroke-width="0.6" stroke-opacity="0.6" fill="none"/>
<path d="M576.2 464.8L590.7 406.4L607 348L609.8 329.3" stroke="#a8a400" stroke-width="4.8" stroke-opacity="0.45" fill="none" stroke-linecap="round" stroke-linejoin="round"/><path d="M574.3 477L576.2 464.8" stroke="#a8a400" stroke-width="3.4" stroke-opacity="0.35" fill="none"/><path d="M576.2 464.8L590.7 406.4L607 348L609.8 329.3" stroke="#dcd800" stroke-width="2.5" fill="none" stroke-linejoin="round" stroke-opacity="0.95"/><path d="M574.3 477L576.2 464.8" stroke="#dcd800" stroke-width="1.9" fill="none" stroke-opacity="0.95"/><path d="M573.2 490.4L574.3 477" stroke="#d4d000" stroke-width="1.2" fill="none" stroke-opacity="0.9"/><path d="M576.2 464.8L590.7 406.4L607 348L609.8 329.3" stroke="#ffff30" stroke-width="1.0" fill="none" stroke-linejoin="round"/><path d="M592.96 395.28V392.96M576.59 470.79V464.12M575.26 462.6V457.62M581.42 437.45V432.78M609.28 348.85V345.68M584.07 432.69V425.36M574.12 469.3V462.09M572.56 477.04V474.49M609.7 348.77V345.44M579.13 451.29V443.65M603.85 358.56V353.1M573.29 478.36V472.33M577.79 460.03V452.03M595.03 392.45V390.24M610.59 336.35V332.02M606.88 338.48V334.43M581.95 453.45V451.21M572.21 478.19V471.39M587.79 429.28V425.85M577.28 475.71V469.48M603.46 360.23V357.16M581.29 455.56V452.94M573.42 469.95V462.44M606.34 352.49V349.25M610.83 333.27V328.08M585.89 418.04V416M586.59 426.61V419.44M606.69 336.34V329.43M577.38 450.93V448.54M591.01 411.6V406.63M602.18 371.36V364.59M603.25 364.44V362.01M573.02 475.63V470.38M608.66 340.4V335.2M585.7 424.52V421.34M591.38 398.75V393.59M578.69 466.87V460.82M608.02 356.54V351.85M593.31 397.42V389.42M574.08 472.41V465.79M606.89 345.4V338.01M573.85 473.75V469.84M573.38 476.56V471.15M609.8 346.23V343M599.92 377.66V372.08M573.51 476.5V473.92M608.12 349.72V343.88M610.42 335.75V329.54M583.39 430.46V427.84M588.73 412.96V405.68M575.85 479.48V473.84M578.94 450.58V448.43M611 339.8V336.61M592.34 400V392.07M573.82 473.25V470.46M605.1 347.96V340.38M585.15 424.5V421.25M609.62 336.87V329.03M595.97 390.32V388.07M576.77 466.23V463.73" stroke="#bcb800" stroke-width="0.6" stroke-opacity="0.6" fill="none"/>
<path d="M722.2 464.8L737.2 406.4L752.9 348L755.9 329.3" stroke="#a8a400" stroke-width="4.8" stroke-opacity="0.45" fill="none" stroke-linecap="round" stroke-linejoin="round"/><path d="M720.1 475L722.2 464.8" stroke="#a8a400" stroke-width="3.4" stroke-opacity="0.35" fill="none"/><path d="M722.2 464.8L737.2 406.4L752.9 348L755.9 329.3" stroke="#dcd800" stroke-width="2.5" fill="none" stroke-linejoin="round" stroke-opacity="0.95"/><path d="M720.1 475L722.2 464.8" stroke="#dcd800" stroke-width="1.9" fill="none" stroke-opacity="0.95"/><path d="M719 487L720.1 475" stroke="#d4d000" stroke-width="1.2" fill="none" stroke-opacity="0.9"/><path d="M722.2 464.8L737.2 406.4L752.9 348L755.9 329.3" stroke="#ffff30" stroke-width="1.0" fill="none" stroke-linejoin="round"/><path d="M747.75 364.55V362.54M735.86 407.53V405.25M732.16 436.4V431.81M724.02 453.82V449.62M721.3 476.96V472.33M750.44 357.35V351.14M753.76 342.77V336.54M728.58 434.89V428.8M738.61 402.02V395.99M753.4 342.84V336.68M720.08 476.72V470.64M734 425.15V423.12M753.64 333.33V328.09M719.41 470.03V464.3M754.31 346.55V341.45M722.28 469.04V462.04M743.12 389.7V386.61M721.89 475.24V467.28M724 461.03V456.25M723.04 475.06V470.91M750.92 364.41V362.33M752.26 339.5V335.2M748.94 369.48V362.02M753.25 348.82V342.78M719.57 467.71V464.91M752.04 346.17V340.42M722.07 473.76V471.52M744.62 390.29V383.79M737.71 407.03V402.5M747.93 371.95V366.81M745.36 377.71V370.67M753.18 344.88V337.85M753.19 350.74V343.09M719.35 476.09V473.69M718.9 472.24V464.5M728.05 445.16V439.74M737.32 417.83V413.02M724.16 468.29V462.55M753.64 342.98V338.77M718.39 473.5V466.51M726.71 460.12V453.03M722.93 470.48V466.34M752.16 344.12V336.3M725.91 447.08V442.6M746.84 378.04V370.74M753.2 331.97V327.26M723 469.12V461.19M753.37 335.91V329.67M734.8 418.34V410.49M757.54 335.66V331.52M751.23 347.75V342.07M752.44 359.49V354.55M721.67 477.43V470.59M737.82 402.64V396.02M730.02 431V424.53M750.69 351.77V349.1M720.21 469.53V465.32M756.54 343.02V335.69M743.66 388.13V383.05M756.67 343.48V336.42" stroke="#bcb800" stroke-width="0.6" stroke-opacity="0.6" fill="none"/>
<path d="M770.8 464.8L785.3 406.4L802.2 348L805.2 332.8" stroke="#a8a400" stroke-width="4.8" stroke-opacity="0.45" fill="none" stroke-linecap="round" stroke-linejoin="round"/><path d="M768.9 475L770.8 464.8" stroke="#a8a400" stroke-width="3.4" stroke-opacity="0.35" fill="none"/><path d="M770.8 464.8L785.3 406.4L802.2 348L805.2 332.8" stroke="#dcd800" stroke-width="2.5" fill="none" stroke-linejoin="round" stroke-opacity="0.95"/><path d="M768.9 475L770.8 464.8" stroke="#dcd800" stroke-width="1.9" fill="none" stroke-opacity="0.95"/><path d="M767.8 487L768.9 475" stroke="#d4d000" stroke-width="1.2" fill="none" stroke-opacity="0.9"/><path d="M770.8 464.8L785.3 406.4L802.2 348L805.2 332.8" stroke="#ffff30" stroke-width="1.0" fill="none" stroke-linejoin="round"/><path d="M768.91 471.59V467.35M785.98 403.87V401.73M771.77 471.55V464.55M769.74 477.95V470.39M801.93 339.58V331.83M804.51 341.56V336.18M794.82 379.57V374.77M788.76 401.34V393.96M777.05 432.24V428.22M799.79 350.27V346.9M783.18 408.48V404.15M768.69 466.72V464.29M804.5 338.55V334.72M771.4 460.08V454.96M771.41 473.77V467.36M794.63 375.74V370.25M780.44 433.13V430.14M806.92 337.83V330.26M796.89 363.06V360.73M798.49 368.6V362.77M780.36 420.41V417.09M780.71 420.42V414.45M803.46 337.2V329.41M770.5 469.3V463.78M802.21 340.51V335.1M770.08 464.89V457M767.96 474.39V468.99M772.21 457.07V452.62M770.6 477.64V471.61M795.51 382.22V374.25M805.25 336.8V329.75M771.32 474.84V471.47M791.34 390.71V384.61M771.75 469.55V461.66M793.15 382.97V380.53M772.96 462.02V455.84M792.93 390.11V384.54M802.91 339.23V332.22M771.3 472.09V464.68M778.79 434.49V428.74M804.12 346.24V341.37M777.51 440.29V436.18M772.29 467.8V465.34M767.42 470.14V467.68M803.4 337.28V332.44M797.02 375.38V368.75M790.19 392.5V388.36M793.35 382.15V376.67M769.32 472V468.18M771.13 474.48V467.05M771.22 456.08V449.38M807.29 338.81V331.54M769.93 475.23V472.06M802.27 347.54V342.18M791.03 387.91V383.52M798.58 353.67V349.68M773.33 457.39V449.42M796.25 368.57V361.42M796.97 366.76V361.88M802.64 336.21V333.97" stroke="#bcb800" stroke-width="0.6" stroke-opacity="0.6" fill="none"/>
<path d="M562.5 222V252.72" stroke="#8e8800" stroke-width="1" fill="none"/><path d="M562.7 246L562.7 249.22L562.7 252.43L562.71 255.65L562.74 258.86L562.77 262.08L562.83 265.3L562.92 268.51L563.03 271.73L563.18 274.94L563.37 278.16L563.62 281.38L563.91 284.59L564.26 287.81L564.68 291.02L565.17 294.24L565.74 297.46L566.39 300.67L567.13 303.89L567.96 307.1L568.9 310.32" stroke="#8c8600" stroke-width="1.1" fill="none"/><path d="M563.62 281.38L563.91 284.59L564.26 287.81L564.68 291.02L565.17 294.24L565.74 297.46L566.39 300.67L567.13 303.89L567.96 307.1L568.9 310.32" stroke="#e4e200" stroke-width="2.2" stroke-linecap="round" fill="none"/><path d="M566.5 285.36L566.65 288.62L566.96 291.89L567.37 295.15L567.88 298.42L568.48 301.68L569.15 304.94L569.89 308.21L570.7 311.47L571.57 314.74L572.5 318" stroke="#e4e200" stroke-width="1.9" stroke-linecap="round" fill="none"/><path d="M563.21 283.23V288.65M565 276.86V283.34M567.59 298.12V306.98M563.51 275.64V285.12M564.03 260.8V269.18M563.34 267.25V272M567.5 299.49V310.4M563.91 261.39V268.73" stroke="#c8c400" stroke-width="0.6" stroke-opacity="0.7" fill="none"/>
<path d="M610.6 220V250.4" stroke="#8e8800" stroke-width="1" fill="none"/><path d="M610.8 243.75L610.8 246.93L610.8 250.12L610.81 253.3L610.83 256.48L610.87 259.66L610.92 262.85L611 266.03L611.11 269.21L611.25 272.39L611.43 275.57L611.66 278.76L611.94 281.94L612.27 285.12L612.66 288.31L613.12 291.49L613.65 294.67L614.26 297.85L614.96 301.04L615.75 304.22L616.63 307.4" stroke="#8c8600" stroke-width="1.1" fill="none"/><path d="M611.66 278.76L611.94 281.94L612.27 285.12L612.66 288.31L613.12 291.49L613.65 294.67L614.26 297.85L614.96 301.04L615.75 304.22L616.63 307.4" stroke="#e4e200" stroke-width="2.2" stroke-linecap="round" fill="none"/><path d="M614.36 282.7L614.5 285.93L614.79 289.16L615.18 292.39L615.66 295.62L616.22 298.85L616.85 302.08L617.55 305.31L618.31 308.54L619.13 311.77L620 315" stroke="#e4e200" stroke-width="1.9" stroke-linecap="round" fill="none"/><path d="M614.85 284.77V289.04M611.49 273.26V283.68M611.48 271.76V277.27M613.93 288.51V297.08M610.78 276.46V281.49M612.19 264.44V269.08M611.85 264.51V271.82M614.46 276.5V284.63" stroke="#c8c400" stroke-width="0.6" stroke-opacity="0.7" fill="none"/>
<path d="M756.5 216V249.28" stroke="#8e8800" stroke-width="1" fill="none"/><path d="M756.7 242L756.7 245.48L756.7 248.97L756.71 252.45L756.73 255.94L756.77 259.42L756.82 262.9L756.89 266.39L757 269.87L757.13 273.36L757.31 276.84L757.52 280.32L757.79 283.81L758.11 287.29L758.48 290.78L758.92 294.26L759.43 297.74L760.02 301.23L760.68 304.71L761.44 308.2L762.28 311.68" stroke="#8c8600" stroke-width="1.1" fill="none"/><path d="M757.52 280.32L757.79 283.81L758.11 287.29L758.48 290.78L758.92 294.26L759.43 297.74L760.02 301.23L760.68 304.71L761.44 308.2L762.28 311.68" stroke="#e4e200" stroke-width="2.2" stroke-linecap="round" fill="none"/><path d="M760.1 284.64L760.24 288.18L760.51 291.71L760.89 295.25L761.35 298.78L761.88 302.32L762.48 305.86L763.15 309.39L763.88 312.93L764.66 316.46L765.5 320" stroke="#e4e200" stroke-width="1.9" stroke-linecap="round" fill="none"/><path d="M759.38 286.55V293.19M756.99 279.62V288.14M757.32 260.42V268.06M761.4 291.48V300.21M758.64 284.22V294.67M759.4 276.78V284.28M758.74 269.31V277.71M758.72 289.84V297.8" stroke="#c8c400" stroke-width="0.6" stroke-opacity="0.7" fill="none"/>
<path d="M805.5 222V253.36" stroke="#8e8800" stroke-width="1" fill="none"/><path d="M805.7 246.5L805.7 249.78L805.7 253.07L805.71 256.35L805.73 259.63L805.77 262.92L805.82 266.2L805.9 269.48L806.01 272.76L806.16 276.05L806.34 279.33L806.57 282.61L806.85 285.9L807.18 289.18L807.58 292.46L808.05 295.75L808.58 299.03L809.2 302.31L809.9 305.59L810.7 308.88L811.59 312.16" stroke="#8c8600" stroke-width="1.1" fill="none"/><path d="M806.57 282.61L806.85 285.9L807.18 289.18L807.58 292.46L808.05 295.75L808.58 299.03L809.2 302.31L809.9 305.59L810.7 308.88L811.59 312.16" stroke="#e4e200" stroke-width="2.2" stroke-linecap="round" fill="none"/><path d="M809.3 286.68L809.44 290.01L809.73 293.34L810.13 296.68L810.62 300.01L811.18 303.34L811.82 306.67L812.52 310L813.29 313.34L814.12 316.67L815 320" stroke="#e4e200" stroke-width="1.9" stroke-linecap="round" fill="none"/><path d="M811.03 300.94V308.94M810.2 299.61V310.12M805.38 274.84V280.07M806.14 277.37V283.88M807.16 289.49V293.25M810.25 289.92V298.12M809.07 292.57V302.98M809.26 296.2V300.33" stroke="#c8c400" stroke-width="0.6" stroke-opacity="0.7" fill="none"/>
<path d="M622.25 167.78V186.09M623.43 168.06V187.58M624.82 167.55V189.2M627.3 170.5V188.43M628.98 171.3V186.4M635.17 169.04V189.27M636.78 168.17V188.28M637.83 170.33V189M638.33 168.18V189.17M641.22 169.74V188.81M641.88 167.53V188.74M644.79 170.84V186.55M647.7 170.41V185.77M651.62 171.15V186.07M653.11 170.16V186.84M654.98 168.06V186.45M658.38 168.04V185.89" stroke="#8a8600" stroke-width="0.6" stroke-opacity="0.55" fill="none"/><path d="M621.5 172.71V184.77M621.96 171.54V185.32M622.53 172.46V184.7M622.87 171.67V184.99M623.49 171.67V185.5M623.98 171.21V185.97M624.34 171.04V184.75M624.77 172.01V184.81M625.19 171.97V184.76M625.79 173V184.62M626.38 172.68V185.47M626.88 172.6V184.55M627.19 172.83V185.55M627.88 172.22V184.27M628.58 172.59V184.89M629.15 172.03V184.2M629.49 172.25V185.17M630.19 172.55V185.35M630.65 171.38V184.7M631.1 171.21V184.81M631.73 172.67V185.3M632.07 172.92V185.62M632.77 172.92V185.25M633.35 172.48V185.71M633.95 172.52V185.66M634.42 172.2V184.41M634.73 172.39V185.08M635.42 172.29V185.69M635.89 172.76V184.85M636.34 172.44V185.34M636.87 171.29V184.91M637.26 171.27V184.38M637.83 172.63V184.32M638.46 171.57V184.02M638.8 172.01V185.96M639.38 171.05V184.57M640 171.51V184.47M640.32 172.75V186M640.86 171.18V184.22M641.32 171.75V185.05M642 171.09V184.43M642.51 172.33V185.43M643.15 172.15V185.09M643.78 171.35V184.78M644.28 172.47V185.14M644.85 171.95V184.85M645.52 171.4V185.44M645.91 171.71V184.44M646.55 172.03V184.43M647.22 171.59V185.7M647.89 171.08V184.56M648.35 172.96V184.04M648.73 171.53V184.66M649.1 171.72V185.84M649.5 171.02V184.06M650.1 171.86V184.2M650.69 172.89V185.79M651.28 172.73V184.95M651.98 172.26V185.84M652.43 171.88V185.13M652.79 172.74V184.39M653.18 172.09V185.8M653.56 172.48V184.26M653.89 171.29V185.73M654.56 171.19V185.3M654.88 171.2V184.23M655.37 172V185.57M656.07 172.13V185.6M656.69 171.19V184.09M657.09 172.96V185.13M657.56 172.95V184.1M658.18 172.34V185.15M658.74 171.82V185.51M659.33 171.34V185.65M659.9 172.24V184.61" stroke="#bcb600" stroke-width="0.6" stroke-opacity="0.7" fill="none"/><path d="M621.5 174.53V182.95M622.08 174.84V183.03M622.6 174.58V182.29M622.94 174.26V182.61M623.4 175.01V182.4M623.77 174.15V182.79M624.25 175.04V183.1M624.68 174.13V181.95M625.16 174.89V182.34M625.53 175.2V182.25M626.22 174.85V182.66M626.73 174.09V181.97M627.09 174.38V181.85M627.48 174.75V183.07M627.9 174.35V183.02M628.43 175.09V183.22M628.8 174.3V182.6M629.49 174.15V182.56M630.05 174.99V182.5M630.42 174.63V182.7M630.96 174.98V181.76M631.51 173.77V183.02M631.93 174.44V182.36M632.3 175.19V183.29M632.95 174.97V182.88M633.42 174.16V182.11M633.94 175.08V182.35M634.26 173.75V181.81M634.66 175.23V182.66M635.23 175.03V182.23M635.86 174.01V182.23M636.54 174.42V182.96M637.21 174.72V182.69M637.58 174.42V182.27M637.97 174.02V182.55M638.58 174.29V182.98M638.93 173.79V182.74M639.41 174.12V183.13M640.1 173.9V182.39M640.76 174.23V181.87M641.36 174.82V182.32M641.96 174V183.19M642.4 175.11V181.8M642.99 173.71V181.77M643.53 174.91V182.77M644.08 175.11V182.99M644.62 174.97V182.57M645.19 174.11V182.62M645.69 174.67V183.16M646.25 175.18V182.55M646.73 173.95V183.15M647.41 174.7V182.93M647.86 174.27V183.01M648.26 175.27V182.22M648.72 174.16V182.89M649.38 174.25V182.84M649.72 174.22V182.92M650.14 174.06V182.22M650.74 174.33V182.82M651.32 174.17V183.03M651.96 174.46V183.2M652.5 174.29V182.57M653.06 174.52V181.93M653.65 175.29V182.31M654.1 175.15V183.28M654.79 174.14V183.21M655.09 173.94V183.22M655.77 174.96V183.05M656.32 174.72V182.52M656.94 175.16V182.13M657.47 174.21V182.14M658.14 174.97V182.34M658.51 174.46V182.25M659 174.28V183.12M659.47 174.91V183.02M659.89 174.98V182.73" stroke="#e0dc00" stroke-width="0.6" stroke-opacity="0.85" fill="none"/><path d="M621.5 176.18V180.42M621.96 176.65V180.45M622.46 176.36V180.14M623.28 176.76V181.41M623.87 175.59V180.88M624.57 176.08V180.59M625.04 176.6V180.34M625.81 175.54V180.27M626.23 176.21V181.23M627.1 176.08V180.95M627.73 175.58V181.18M628.14 175.86V180.33M628.62 175.86V180.47M629.04 176.32V180.63M629.66 176.58V181.36M630.28 175.93V180.85M631.07 175.81V181.02M631.47 175.55V180.13M631.93 176.19V181.16M632.41 176.53V180.66M633.02 176.71V180.63M633.44 175.89V180.44M634.29 176.49V180.32M635.17 175.63V181.31M635.85 176.52V181.48M636.63 175.65V181.21M637.42 176.8V181.43M638.11 176.7V180.35M638.88 175.71V180.65M639.35 176.19V180.21M639.87 176.68V180.43M640.38 176.2V181.17M640.88 175.86V180.79M641.55 176.21V181M642.25 176.75V181.07M642.75 176.27V181.27M643.49 176.87V181.18M644.16 176.63V181.49M644.75 175.61V180.5M645.26 176.13V180.23M646.1 175.72V181.41M646.93 175.66V180.2M647.75 176.7V180.2M648.22 175.96V180.86M648.81 176.84V180.87M649.63 176.42V180.23M650.43 176.85V180.93M650.91 176.87V180.94M651.35 176.47V180.69M652.02 175.78V180.11M652.83 175.77V180.22M653.45 175.98V180.64M654.2 176.2V181.06M654.79 176.69V180.87M655.36 176.49V181.48M656.01 175.92V181.25M656.48 175.95V181.29M657.11 175.68V180.63M657.86 175.86V181.23M658.43 176.73V180.14M659.01 176.86V180.36M659.9 176.78V180.86" stroke="#ffff10" stroke-width="0.6" stroke-opacity="0.75" fill="none"/><path d="M653.54 160.94V178.5M631.88 147.41V178.5M657.64 151.6V178.5M641.82 144.83V178.5M634.74 178.5V210.43M629.21 178.5V197.06M651.76 178.5V200.62M626.5 157.33V178.5M655.72 161.69V178.5M646.93 178.5V192.57M658.23 178.5V192.08M653.21 178.5V188.72M647.58 162.27V178.5M650.94 166.59V178.5M648.19 168.24V178.5M635.55 178.5V190.26M628.85 164.77V178.5M634.56 178.5V190.16M628.93 178.5V190.14M639.96 167.6V178.5" stroke="#8c8600" stroke-width="0.7" stroke-opacity="0.7" fill="none"/>
<path d="M670.5 168V187.29M671.16 168.73V187.17M672.33 169.55V185.75M673.26 168.3V186.4M674.95 171.06V187.86M676.46 171.04V187.18M677.65 169.35V187.35M679.65 168.74V186.03M681.34 171.38V188.11M683.73 168.33V186.47M686.23 168.58V186.95M687.12 168.3V189.21M689.47 168.91V189.07M690.08 168.26V185.51M693.79 169.43V188.22M695.49 171.31V188.54M697.43 169.72V188.59M698.02 169.33V189.25M699.64 169.43V187.24M701.43 168.23V186.14M704.06 169.14V187.12M704.54 171.01V188.5M707.26 168.25V186.53M707.76 168.74V188.35" stroke="#8a8600" stroke-width="0.6" stroke-opacity="0.55" fill="none"/><path d="M670.5 171.23V185.36M670.92 171.25V184.74M671.46 171.72V185.34M671.94 172.86V184.7M672.57 172.95V185.03M673.18 171.92V184.2M673.5 172.79V184.78M674.02 171.75V185M674.43 171.91V185.55M674.85 171.9V185.95M675.18 172.34V184.09M675.55 172.72V184.6M675.99 172.12V185.51M676.52 171.9V185.2M677.2 171.92V184.84M677.55 171.07V185.43M678.24 172.07V184.85M678.81 171.84V185.34M679.4 171.8V185.86M679.99 172V185.7M680.34 171.3V185.22M680.71 171.68V184.73M681.22 172V185.02M681.88 172.1V184.69M682.24 172.08V185.33M682.65 172.98V185.18M683.24 171.18V185.96M683.88 172.18V184.84M684.38 172.4V184.62M685.02 171.66V185.58M685.33 172.69V185.42M685.75 172.14V185.01M686.43 171.88V185.26M686.81 171.81V185.16M687.19 171.36V185.6M687.6 171.56V184.35M688.02 171.59V185.84M688.45 172.64V185.76M688.78 172.64V184.54M689.39 173V184.54M689.89 172.28V185.18M690.25 172.2V184.48M690.78 171.69V184.64M691.46 171.6V184.45M691.79 171.82V185.41M692.45 172.14V185.52M692.92 171.15V185.78M693.3 171.47V185.06M693.78 171.68V184.31M694.26 172.65V184.99M694.66 171.11V184.63M695.07 172.41V184.63M695.63 172.59V185.51M696.11 171.06V184.26M696.42 171.8V185.6M696.78 173V185.53M697.35 171.98V185.42M697.75 171.29V184.65M698.17 171.74V185.33M698.75 172.66V185.14M699.43 172.74V184.54M699.93 172.74V185.24M700.56 171.08V185.79M700.89 171.61V184.8M701.58 172.19V184.13M702.26 171.39V185.72M702.93 171.37V184.15M703.45 172.22V185.28M703.99 172.6V185.61M704.65 171.64V185.98M705.33 171.98V185.94M705.84 172.07V185.54M706.21 171.07V185.58M706.67 172.7V185.93M707.25 171.11V184.79M707.77 172.95V185.24M708.41 172.21V185.6" stroke="#bcb600" stroke-width="0.6" stroke-opacity="0.7" fill="none"/><path d="M670.5 174.64V182.09M671.11 175.28V181.92M671.69 174.25V181.97M672.05 173.96V181.95M672.45 174.57V182.67M672.83 174.97V182.83M673.24 174.6V182.57M673.67 173.82V182.12M674.04 174.89V183.2M674.72 174.68V182.53M675.16 174.03V182.39M675.82 174.66V182.89M676.26 174.63V182.06M676.62 174.01V182.31M677.3 174.63V183.08M677.92 173.98V182.33M678.31 174.04V182.05M678.92 174.09V183.22M679.24 173.77V182.36M679.57 173.91V182.59M680.18 174.28V182.43M680.84 175.14V181.71M681.43 174.95V182M682.12 174.08V182.44M682.78 174.27V181.86M683.31 174.66V182.92M683.67 174.56V182.84M684.31 175.28V182.73M684.92 174.59V182.11M685.35 175.1V182.87M685.81 174.65V182.11M686.13 173.71V183.05M686.55 174.34V183.17M687.25 174.27V182.01M687.92 173.96V181.94M688.43 174.78V182.82M688.9 174.14V182.98M689.27 174.39V182.15M689.63 174.07V183.27M690.01 173.78V182.88M690.53 174.42V181.77M691.13 175.02V182.79M691.81 175.03V182.85M692.14 174.84V182.3M692.68 174.57V182.18M693.3 173.8V182.2M693.68 173.99V182.92M694.36 174.65V182.77M694.79 175.08V182.56M695.2 175.06V182.37M695.64 174.69V181.95M696.26 175.05V181.9M696.89 175.08V182.73M697.58 174.34V181.76M697.91 173.93V181.97M698.27 173.72V182.51M698.8 174.69V182.78M699.44 174.19V182.48M700.05 174.81V183.28M700.59 174.38V183.21M701.05 173.97V182.89M701.65 175.2V182.02M702.07 175.05V181.75M702.62 175.18V181.75M703.31 174.79V182.64M703.86 174.25V181.9M704.16 173.87V182.56M704.71 173.96V182.15M705.29 174.39V182.18M705.64 173.73V181.95M705.95 174.4V182.93M706.42 174.78V183.26M707.04 174.54V181.86M707.69 175.13V182.06M708.24 174.94V182.08" stroke="#e0dc00" stroke-width="0.6" stroke-opacity="0.85" fill="none"/><path d="M670.5 176.49V180.46M671.31 176.53V181.17M671.75 175.97V181.3M672.2 175.6V180.97M672.69 176.21V180.62M673.57 175.87V181.47M674.07 175.61V181.11M674.67 175.75V180.5M675.08 175.82V180.67M675.83 176.28V181.08M676.54 176.2V180.35M677.33 176.7V180.88M677.78 175.67V180.25M678.42 176.79V180.19M679.18 176.86V181.27M679.63 176.35V181.08M680.26 176.68V180.51M680.69 175.99V180.22M681.51 176.54V180.76M682.08 176.3V181.29M682.87 176.36V181.25M683.67 176.18V180.78M684.21 176.57V181.49M684.87 176.46V180.2M685.49 175.77V180.27M686.19 176.48V180.82M686.91 176.65V181.33M687.5 176.77V180.16M688.32 176.8V180.99M688.91 175.7V180.44M689.32 176.2V181.05M690.19 176.66V181.26M690.74 175.64V181.44M691.3 175.58V180.94M691.84 176.44V180.58M692.52 176.15V181.47M693.4 176.64V181.08M693.95 176.17V181.46M694.85 175.8V181.06M695.53 176.43V181.48M695.99 175.91V180.94M696.54 176.1V180.58M697.1 176.79V180.32M697.72 176.09V180.88M698.39 176.73V180.24M699.26 176.71V180.18M700.11 176.54V180.39M700.7 176.49V181.49M701.21 175.95V180.79M701.67 176.19V181.46M702.11 176.12V180.8M702.77 176.85V181.41M703.57 176.74V181.12M704.1 176.82V180.6M704.66 176.89V180.32M705.1 175.83V181.45M705.64 176.25V180.89M706.28 176.81V181.16M706.7 175.88V180.61M707.57 175.86V180.76M708.29 176.37V180.8" stroke="#ffff10" stroke-width="0.6" stroke-opacity="0.75" fill="none"/><path d="M685.8 151.14V178.5M684.48 158.86V178.5M677.49 178.5V198.98M673.28 178.5V201.16M705.85 153.38V178.5M671.76 155.18V178.5M690.75 178.5V207.38M697.2 178.5V192.03M673.78 167.61V178.5M692.77 162.33V178.5M681.36 166.25V178.5M677.01 167.82V178.5M705.79 162.5V178.5M692.48 164.96V178.5M677.66 178.5V191.07M699.74 178.5V193.68M704.87 166.28V178.5M697.85 178.5V188.85M684.54 178.5V191.66M684.54 164.17V178.5" stroke="#8c8600" stroke-width="0.7" stroke-opacity="0.7" fill="none"/>
<path d="M660.2 185V226.28" stroke="#8e8800" stroke-width="1" fill="none"/><path d="M660.4 217.25L660.4 221.57L660.4 225.89L660.41 230.21L660.43 234.54L660.46 238.86L660.52 243.18L660.59 247.5L660.69 251.82L660.82 256.14L660.99 260.46L661.21 264.79L661.46 269.11L661.77 273.43L662.14 277.75L662.57 282.07L663.07 286.39L663.64 290.72L664.29 295.04L665.03 299.36L665.86 303.68" stroke="#8c8600" stroke-width="1.1" fill="none"/><path d="M662.14 277.75L662.57 282.07L663.07 286.39L663.64 290.72L664.29 295.04L665.03 299.36L665.86 303.68" stroke="#e4e200" stroke-width="2.2" stroke-linecap="round" fill="none"/><path d="M663.72 270.14L663.85 274.53L664.12 278.91L664.49 283.3L664.94 287.68L665.46 292.07L666.05 296.46L666.7 300.84L667.41 305.23L668.18 309.61L669 314" stroke="#e4e200" stroke-width="1.9" stroke-linecap="round" fill="none"/><path d="M663.17 272.85V280.67M667.11 298.06V305.94M662.36 245.36V255.11M662.66 279.18V287.58M663.23 284.42V291.89M661.55 249.65V255.3M665.72 285.12V294.3M663.97 280.85V290.71" stroke="#c8c400" stroke-width="0.6" stroke-opacity="0.7" fill="none"/>
<path d="M708.2 185V227.56" stroke="#8e8800" stroke-width="1" fill="none"/><path d="M708.4 218.25L708.4 222.71L708.4 227.16L708.41 231.62L708.44 236.07L708.47 240.53L708.53 244.98L708.61 249.44L708.72 253.89L708.87 258.35L709.06 262.81L709.3 267.26L709.58 271.72L709.93 276.17L710.34 280.63L710.82 285.08L711.38 289.54L712.01 293.99L712.74 298.45L713.56 302.9L714.48 307.36" stroke="#8c8600" stroke-width="1.1" fill="none"/><path d="M710.34 280.63L710.82 285.08L711.38 289.54L712.01 293.99L712.74 298.45L713.56 302.9L714.48 307.36" stroke="#e4e200" stroke-width="2.2" stroke-linecap="round" fill="none"/><path d="M712.12 272.78L712.27 277.3L712.57 281.82L712.98 286.35L713.48 290.87L714.06 295.39L714.72 299.91L715.44 304.43L716.23 308.96L717.09 313.48L718 318" stroke="#e4e200" stroke-width="1.9" stroke-linecap="round" fill="none"/><path d="M714.04 288.5V299.85M715.55 295.43V303.45M712.41 285.35V293.92M711.28 288.01V297.01M715.98 299.51V310.35M714.32 288.66V296.27M711 267.57V278.55M714.18 299.65V309.52" stroke="#c8c400" stroke-width="0.6" stroke-opacity="0.7" fill="none"/>
<path d="M816.5 318V521M854.5 294V527M864.5 305V535M903.5 305V535M912.5 313V503M967.5 315V490M1005.5 220V330M957.5 222V324M1016.5 137V616M1112.5 318V485M1151.5 216V328M1161.5 300V487M1200.5 222V332M1210.5 300V521" stroke="#545000" stroke-width="1.0" stroke-opacity="1.0" fill="none"/>
<path d="M1065.5 133V520" stroke="#545000" stroke-width="1.0" stroke-opacity="1.0" fill="none"/>
<path d="M1065.5 520V616" stroke="#4e4a00" stroke-width="1.0" stroke-opacity="1.0" fill="none"/>
<path d="M819.3 518.02V536.22M820.22 515.12V539.74M820.79 515.72V539.46M821.94 518.34V536.83M822.49 518.19V539.77M823.33 517.72V538.9M823.76 516.84V537.6M825.38 516.25V537.75M826.44 516.1V539.44M827.1 516.59V539.51M829.75 516.71V539.03M832.13 517.59V539.54M832.91 516.16V539.33M833.4 516.14V536.62M833.9 516.47V539.58M834.55 518.45V536.13M836.52 516.99V536.64M839.56 518.22V539.85M841.96 518.15V539.05M842.55 516.74V539.21M843.77 516.19V537.58M845.84 518.27V537.5M850.46 518.97V539.35M851.81 517.23V536.37M852.66 516.2V537.09M854.51 515.71V536" stroke="#8a8600" stroke-width="0.6" stroke-opacity="0.55" fill="none"/><path d="M816.5 518.59V536.1M816.97 518.74V535.65M817.54 519.44V536.13M817.9 519.62V536.2M818.24 519.06V534.62M818.87 519.78V535.73M819.4 519.76V534.56M819.94 519.06V535.56M820.64 520.03V536.23M820.96 518.55V534.8M821.5 519.15V535.28M821.96 519V535.99M822.47 520.22V536.25M822.96 518.99V535.46M823.46 519.85V536.25M823.82 518.97V535.78M824.41 518.94V536.09M824.99 518.82V536.42M825.38 519.2V535.31M825.97 518.81V535.78M826.53 519V535.02M826.96 519.63V536.06M827.26 519.18V534.91M827.66 519.47V535.3M828.32 519.49V535.21M828.67 519.26V534.93M829.17 518.68V536.45M829.61 518.98V535.26M830.04 519.18V536.4M830.38 520.43V536.18M830.96 518.87V536.46M831.64 520.35V536.08M832.09 519.19V535.61M832.61 518.54V534.63M832.98 519.6V535.85M833.57 519.83V534.64M834.06 519.06V536.16M834.6 519.53V534.78M835.12 519.39V535.47M835.81 519.92V535.31M836.4 518.91V536.02M836.88 519.08V535.24M837.35 520.25V535.83M837.87 519.29V534.66M838.26 519.13V535.59M838.8 520.32V535.09M839.29 518.61V535.8M839.95 518.72V536.36M840.28 520.17V534.73M840.85 519.38V536.07M841.17 519.18V536.46M841.57 519V535.48M841.98 519.29V534.53M842.59 520.1V535.51M843.14 520.24V535.91M843.77 519.46V534.97M844.43 520.03V535.02M845 519.38V535.97M845.48 519.69V535.63M845.8 520.48V535.05M846.43 519.75V535.48M846.88 520.37V535.5M847.37 518.76V534.78M847.91 519.33V535.96M848.24 519.67V536.23M848.93 519.92V535.56M849.38 519.67V534.7M849.98 519.85V534.56M850.67 518.78V536.28M851.33 519.18V535.89M851.98 520.02V534.55M852.29 519.63V535.86M852.82 518.56V535.9M853.24 519.48V536.45M853.66 520.45V536.41M854.19 519.44V535.67" stroke="#bcb600" stroke-width="0.6" stroke-opacity="0.7" fill="none"/><path d="M816.5 522.12V532.77M816.87 521.44V533.15M817.51 522.3V532.26M817.94 522.27V533.77M818.48 521.25V532.46M818.78 521.46V532.78M819.21 521.93V532.89M819.73 521.55V533.59M820.3 522.63V532.72M820.82 521.48V532.44M821.25 522.67V532.75M821.62 522.25V533.57M822.07 522.43V532.39M822.75 521.59V533.32M823.23 522.53V533.29M823.56 521.22V533.47M824.2 521.61V532.52M824.69 521.28V533.49M825.19 521.41V533.24M825.62 522.72V532.38M826.14 521.57V533.17M826.44 522.07V533.57M827.06 522.14V532.35M827.51 522.65V533.19M827.89 521.65V533.62M828.51 521.42V533.35M829.14 521.85V533.42M829.67 522.5V533.26M830.22 521.6V533.61M830.92 522.71V532.25M831.51 522.45V533.07M832.16 521.25V532.63M832.47 521.44V533.47M832.94 521.7V532.97M833.38 521.51V532.21M833.93 522.36V532.91M834.53 521.46V532.26M835.06 521.95V533.46M835.55 522.09V532.91M836.06 521.45V533.73M836.48 522.34V533.31M836.95 522.47V532.71M837.59 522.15V533.74M838.13 521.81V533.48M838.52 521.6V533.09M838.96 522.52V533.66M839.33 521.3V532.62M839.91 521.41V533.27M840.34 521.62V533.71M840.83 522.56V532.4M841.45 521.43V532.56M841.77 522.01V532.63M842.38 522.53V533.29M842.78 522.09V533.48M843.12 522.52V532.37M843.62 522.74V533.47M844.11 521.26V532.43M844.62 521.3V533.5M845.04 521.49V533.77M845.6 522.57V533.33M845.99 522.36V532.92M846.38 522.64V533.34M847.07 521.74V532.23M847.44 521.42V533.25M848.02 521.81V533.76M848.44 522.29V533.62M848.97 521.21V532.59M849.52 521.42V533.61M850.17 522.74V533.58M850.52 521.43V532.87M851.09 521.27V532.74M851.71 521.53V532.44M852.22 521.48V532.89M852.54 521.6V533.13M853.22 522.4V532.8M853.78 521.83V533.38M854.2 521.89V533.46M854.52 521.88V533.21" stroke="#e0dc00" stroke-width="0.6" stroke-opacity="0.85" fill="none"/><path d="M816.5 525.04V530.08M816.99 524.8V531.57M817.82 525.27V531.45M818.47 524.32V529.87M819.03 524.61V530.83M819.73 523.73V529.82M820.33 524.76V531.13M821.21 524.58V530.86M821.81 523.4V530.96M822.59 523.66V531.36M823.38 523.71V530.64M823.94 523.51V531.1M824.61 525V530.77M825.22 524.22V530.35M825.71 523.86V530.08M826.56 524.41V529.8M826.98 524.76V530.57M827.81 523.63V531.56M828.47 525.01V529.85M829.21 524.87V530.83M829.96 524.06V531.07M830.53 524.93V530.01M831.14 523.94V530.67M831.91 524.65V530.19M832.5 524.79V530.86M833.28 523.63V531.16M833.77 523.85V530.72M834.3 525.21V531.41M834.99 523.64V530.86M835.85 524.29V530.7M836.51 524.34V530.45M837.06 524.36V530.39M837.72 524.82V531.14M838.31 523.61V531.31M839.14 524.19V530.17M839.97 523.95V530.17M840.6 523.79V530.83M841.38 523.44V530.59M841.94 524.75V531.47M842.76 524.79V531.47M843.55 523.94V530.74M844.34 524.51V529.95M844.78 524.67V530.21M845.25 524.69V530.4M845.83 523.91V530.71M846.66 524.85V531M847.36 525.1V530.45M848.22 523.41V531.4M848.71 524.72V529.82M849.41 523.63V531.05M850.16 525.05V531.17M850.58 524.79V530.55M851.05 523.77V531.04M851.62 524.72V530.57M852.45 525.05V530.82M852.91 523.94V530.24M853.73 523.86V529.78M854.27 524.73V531.36" stroke="#ffff10" stroke-width="0.6" stroke-opacity="0.75" fill="none"/><path d="M850.97 527.5V540.37M832.5 510.93V527.5M821.32 527.5V539.39M851.48 513.03V527.5M850.85 511.96V527.5M841.13 509.62V527.5M833.71 508.5V527.5M850.36 508.23V527.5M831.08 527.5V539.37M852.1 527.5V539.26M852.93 508.38V527.5M830.81 527.5V544.41M851.36 527.5V543.68M820.46 509.4V527.5M837.99 512.38V527.5M841.2 527.5V543.12" stroke="#8c8600" stroke-width="0.7" stroke-opacity="0.7" fill="none"/>
<path d="M868.78 524.01V546.44M871.6 522.52V547.94M874.68 522.12V548.18M875.44 521.88V546.3M876.13 522.58V546.71M877.81 522.17V547.27M879.74 521.58V548.28M880.59 523.49V546.77M882.43 524.19V544.83M885.79 523.86V547.04M887.49 523.41V545.16M889.35 524.35V547.56M890.7 524.95V545.87M892.08 524.45V544.74M894.54 524.28V544.71M896.62 523.27V546.29M898.19 524.88V547.7M899.43 522.64V544.52M900.18 524.29V547.14M901.6 523.25V544.57M902.41 524.18V544.52M902.85 523.08V546.87" stroke="#8a8600" stroke-width="0.6" stroke-opacity="0.55" fill="none"/><path d="M865 526.82V544.75M865.36 525.2V544.8M865.69 526.65V544.66M866.05 526.59V543.49M866.54 526.23V543.37M866.85 526.92V544.47M867.27 526.48V543.77M867.95 526.13V544.21M868.46 525.11V544.5M868.96 525V543.14M869.34 525.71V544.82M870.04 526.09V543.47M870.47 525.36V544.13M871.11 525.31V543.88M871.45 526.16V543.83M871.97 525.06V544.68M872.38 526.97V543.4M872.72 526.63V544.74M873.12 526.89V543.09M873.67 525.21V543.26M874.21 525.91V543.52M874.55 525.08V543.9M875.23 526.59V543.58M875.78 525.9V543.94M876.28 526.66V543.18M876.59 525.43V543.84M877 526.27V543.18M877.66 526.02V543.69M878.2 526.16V544.64M878.7 525.25V544.24M879.17 525.91V544.65M879.69 526.51V544.08M880.24 525.69V544.58M880.92 525.88V543.19M881.4 526.43V543.72M881.9 525.18V543.58M882.37 526.87V543.39M882.91 525.83V544.72M883.56 525.78V543.7M883.86 525.25V544.63M884.38 526.83V544.94M885.01 526.94V544.44M885.51 526.78V543.97M885.88 525.93V543.85M886.36 525.09V543.61M887.02 526.66V544.75M887.63 525.66V544.23M888.28 526.94V544.02M888.72 526.73V543.58M889.31 525.78V543.62M889.88 525.43V544.82M890.41 526.3V543.23M891.07 526.33V544.2M891.42 526.34V544.49M892.02 525.17V544.18M892.58 526.32V543.81M892.93 525.45V543.42M893.29 525.9V544.9M893.68 526.96V543.64M894.2 526.89V544.82M894.59 525.05V544.85M895.02 525.47V543.62M895.46 525.74V543.62M896.1 525.52V544.52M896.73 526.27V544.83M897.14 525.03V543.93M897.46 526.88V543.2M898.01 526.29V543.97M898.62 526.85V544.33M899.11 525.34V543.23M899.71 525.93V543.76M900.33 525.56V544.99M901.02 525.04V544.09M901.44 526.91V544.46M901.75 525.23V543.24M902.13 526.23V543.55M902.7 526.38V544.72M903.03 526.45V544.18" stroke="#bcb600" stroke-width="0.6" stroke-opacity="0.7" fill="none"/><path d="M865 529.08V541.85M865.47 528.19V541.33M866.16 527.98V542.22M866.51 528.89V541.63M867.14 528.27V541.86M867.66 528.05V540.77M868.3 529.07V541.12M868.74 528.76V541.26M869.11 529.11V542M869.75 529.27V541.16M870.12 528.51V541.43M870.56 528.59V541.27M871.1 529.16V541.47M871.45 528.21V541.06M871.9 529.15V541.47M872.53 528.86V541.09M873.19 528.42V541.01M873.75 529.08V541.34M874.23 529.14V541.81M874.66 528.87V540.73M875.28 528.52V541.38M875.75 528.03V542.26M876.15 529.22V542.26M876.69 528.19V541.65M877.15 528.57V542.08M877.53 528.88V541.06M878.06 528.54V541.98M878.73 528.04V541.13M879.21 528.06V540.79M879.81 528.5V541.59M880.44 529.21V542.28M880.87 528.35V540.96M881.32 528.78V541.14M882 527.82V541.05M882.44 528.32V541.77M882.94 528.6V541.62M883.39 529.13V541.46M883.91 528.65V541.89M884.54 529.17V541.61M885.19 528.61V541.3M885.54 528.07V541M885.96 528.1V540.76M886.6 529.19V541.23M887.22 528.07V540.82M887.92 528.11V542.01M888.47 528.03V542.24M888.85 528.83V541.51M889.33 528.76V541.19M889.95 528.9V541.57M890.33 528.61V542.13M890.75 528.49V540.82M891.37 528.59V541.76M891.74 527.71V542.01M892.07 528.95V540.96M892.6 527.82V541.43M893.26 528.6V541.57M893.66 528.38V541.55M894.28 528.56V541.7M894.66 527.93V541.74M895.12 528.25V541.47M895.74 528.38V540.72M896.29 529.27V542.06M896.92 528.67V541.88M897.23 527.86V541.9M897.82 527.9V541.38M898.12 528.02V541.24M898.61 528.13V542.05M899.27 529.19V542.12M899.93 528.84V541.76M900.6 528.37V541.34M900.97 528.2V542.13M901.62 529.19V541.87M902.28 528.51V541.02M902.85 528.42V541.16" stroke="#e0dc00" stroke-width="0.6" stroke-opacity="0.85" fill="none"/><path d="M865 532.36V537.63M865.48 530.75V538.59M866.03 531.48V538.62M866.67 532.25V539.75M867.19 531.45V539.4M867.61 531.15V539.36M868.18 531.9V537.86M868.76 531.09V538.9M869.48 530.78V539.3M870.12 530.27V538.01M870.52 531.31V539.22M871.11 530.98V537.97M871.67 531.32V538.57M872.5 530.73V539.5M873.08 531.7V538.26M873.94 530.81V539.17M874.46 530.68V537.85M875.26 532.14V538.34M876.11 532.02V538.27M876.98 532.18V539.16M877.85 531.63V538.12M878.37 530.9V539.08M878.88 532.33V537.99M879.32 532.38V538.01M880.13 531.73V537.85M880.57 530.81V539.64M881.08 532.09V538.1M881.51 531.58V539.3M882.29 532.15V539.84M883.01 531.63V539.5M883.83 530.62V538.17M884.45 530.8V539.46M885.01 531.94V538.56M885.43 531.7V539.41M885.99 531.17V538.13M886.71 531.94V538.46M887.27 530.35V537.85M888.07 530.86V539.86M888.51 530.82V538.49M889.17 532.11V539.41M889.67 531.99V538.99M890.1 532.27V538.47M890.56 531.55V538.68M891.07 530.19V538.34M891.49 531.47V538.65M892.12 530.85V539.46M892.66 530.32V539.09M893.26 531.08V539.39M893.79 530.2V538.02M894.27 532.05V539.53M894.88 530.47V539.82M895.72 531.93V539.42M896.38 531.4V539.37M897.21 531.43V538.89M897.99 531.09V537.75M898.43 530.59V537.88M899.05 530.8V539.68M899.9 531.49V539.53M900.62 532.07V539.23M901.2 530.66V537.66M901.95 532.12V537.72M902.82 530.28V539.29" stroke="#ffff10" stroke-width="0.6" stroke-opacity="0.75" fill="none"/><path d="M868.58 516.55V535M866.14 515.11V535M889.29 513.01V535M878.78 535V547.77M883.72 512.36V535M880.1 535V549.03M873.15 520.27V535M867.56 535V551.03M881.18 516.69V535M896.94 535V551.43M878.33 517.56V535M869.37 535V549.4M869.85 515.06V535M873.82 522.19V535M892.56 535V548.61M874.46 515.54V535" stroke="#8c8600" stroke-width="0.7" stroke-opacity="0.7" fill="none"/>
<path d="M858 297L861 302L863.7 307L863.9 318L861 321L859.5 325L858.7 332L857.5 322L857.1 311Z" fill="#e6e400" fill-opacity="0.95" stroke="#e6e400" stroke-opacity="0.76" stroke-width="0.6" stroke-linejoin="round"/><path d="M859 301L862.5 308L862.9 316L859.5 318Z" fill="#ffff30" fill-opacity="0.9" stroke="#ffff30" stroke-opacity="0.7200000000000001" stroke-width="0.6" stroke-linejoin="round"/><path d="M855.3 305L856.7 318" stroke="#d8d400" stroke-width="1.5" fill="none"/>
<path d="M905.8 305L909.3 309L912.1 313L912.5 326L909.8 322L907.3 323L904.8 333L904.1 325L904.7 314Z" fill="#e6e400" fill-opacity="0.95" stroke="#e6e400" stroke-opacity="0.76" stroke-width="0.6" stroke-linejoin="round"/><path d="M906.3 308L910.8 313L911.3 320L906.8 319Z" fill="#ffff30" fill-opacity="0.9" stroke="#ffff30" stroke-opacity="0.7200000000000001" stroke-width="0.6" stroke-linejoin="round"/>
<path d="M920.7 464.3L926 443.3L935.3 406L951.7 347.8L957.4 321" stroke="#a8a400" stroke-width="4.8" stroke-opacity="0.45" fill="none" stroke-linecap="round" stroke-linejoin="round"/><path d="M914.9 490L920.7 464.3" stroke="#a8a400" stroke-width="3.4" stroke-opacity="0.35" fill="none"/><path d="M920.7 464.3L926 443.3L935.3 406L951.7 347.8L957.4 321" stroke="#dcd800" stroke-width="2.5" fill="none" stroke-linejoin="round" stroke-opacity="0.95"/><path d="M914.9 490L920.7 464.3" stroke="#dcd800" stroke-width="1.9" fill="none" stroke-opacity="0.95"/><path d="M913.7 505L914.9 490" stroke="#d4d000" stroke-width="1.2" fill="none" stroke-opacity="0.9"/><path d="M920.7 464.3L926 443.3L935.3 406L951.7 347.8L957.4 321" stroke="#ffff30" stroke-width="1.0" fill="none" stroke-linejoin="round"/><path d="M938.6 399.39V395.03M957.26 325.57V320.8M934.77 403.04V396.38M951.92 358.59V351.28M913.68 489.91V486.46M931.04 431.16V427.87M933.33 416.5V412.81M948.62 360.91V357.15M913.95 492.31V486.99M920.84 457.23V452.35M922.48 466.54V462.12M918.2 464.53V462.33M918.11 466.35V460.92M927.78 449.57V444.61M949.91 358.64V356.13M917.59 487.05V482.93M940.49 385.01V380.13M920.39 473.52V467.35M944.9 363.87V361.76M920.59 478.3V475.39M929.07 436.32V429.29M916.02 482.33V476.2M941.76 385.97V380.29M918.72 482.4V474.44M954.61 346.23V341.89M926.35 446.66V443.29M917.47 485.38V483.25M954.14 327.86V322.41M917.97 479.85V477.49M921.03 460.97V457.15M935.69 416.1V411.52M922.82 466.75V459.67M924.02 448.8V445.69M928.51 445.91V442.3M927.86 445.82V440.9M954.27 349.75V344.8M926.02 443.15V437.84M937.73 396.35V393.53M934.34 413.03V407.22M915.35 486.34V483.25M933.92 414.78V407.65M951.96 343.47V339.48M942.64 388.86V386.2M956.79 338.21V330.77M924.54 449.18V443.21M915.74 479.43V473.31M938.42 403.21V397.05M923.42 453.93V449.5M944.32 367.55V364.46M956.25 338.53V333M957.24 327V322.4M943.97 368.93V364.91M937.98 396.55V390.24M952.99 338.86V335.41M944.4 373.53V368.87M957.9 325.88V321.16M947.6 362.04V359.35M917.94 478.8V476.03M931.01 433.45V427.49M948.93 370.4V363.45" stroke="#bcb800" stroke-width="0.6" stroke-opacity="0.6" fill="none"/>
<path d="M971.2 464.8L985.7 406.4L1002 348L1004.8 329.3" stroke="#a8a400" stroke-width="4.8" stroke-opacity="0.45" fill="none" stroke-linecap="round" stroke-linejoin="round"/><path d="M969.3 477L971.2 464.8" stroke="#a8a400" stroke-width="3.4" stroke-opacity="0.35" fill="none"/><path d="M971.2 464.8L985.7 406.4L1002 348L1004.8 329.3" stroke="#dcd800" stroke-width="2.5" fill="none" stroke-linejoin="round" stroke-opacity="0.95"/><path d="M969.3 477L971.2 464.8" stroke="#dcd800" stroke-width="1.9" fill="none" stroke-opacity="0.95"/><path d="M968.2 490.4L969.3 477" stroke="#d4d000" stroke-width="1.2" fill="none" stroke-opacity="0.9"/><path d="M971.2 464.8L985.7 406.4L1002 348L1004.8 329.3" stroke="#ffff30" stroke-width="1.0" fill="none" stroke-linejoin="round"/><path d="M1005.19 339.33V333.41M970.22 469.5V462.4M991.55 396.89V392.11M969.78 474.36V467.96M1005.25 334.52V327.26M974.02 465.34V460.63M1004.07 342.27V336.49M995.42 383.74V376.02M968.17 473.04V469.21M1004.35 348.15V340.32M969.24 480.86V473.04M970.75 466.85V459.94M970.64 474.49V471.31M968.54 476.52V473.93M969.79 475.65V468.45M969.55 473.37V467.04M1003.59 332.86V326.79M1002.78 344.63V341.31M996.4 363.93V357.12M985.49 403.58V398.28M1006.13 337.79V335.54M1002.54 342.47V335.19M970.51 473.73V466.17M974.98 456.62V450.3M1003.34 353.76V346.81M1004.35 344.88V340.66M971.64 458.63V456.13M972.02 475.32V467.46M971.83 479.17V473.64M971.76 468.31V465.24M971.33 456.67V451.31M989.81 398.88V392.97M971.7 473.3V469.96M970.75 468.69V462.99M1000.9 350.13V343.56M969.12 478.79V474.33M968.01 474.14V466.37M997.72 363.54V357.56M1001.6 337.69V334.07M1003.9 345.01V339.78M973.41 451.04V445.5M981.38 418.19V410.47M1005.48 345.73V340.51M1000.29 341.84V339.8M975.07 449.23V443.88M978.76 428.15V420.25M981 427.11V420.53M984.88 410.19V405.54M1005.07 345.37V342.43M972.89 468.05V462.49M975.79 454.18V447.1M985.2 408.62V400.68M1000.75 358.97V352.7M1004.87 344.69V342.02M1006.84 335.78V332.76M988.76 392.86V390.33M982.86 415.16V407.42M967.41 478.52V471.45M987.19 413.58V407.19M994.71 385V381.43" stroke="#bcb800" stroke-width="0.6" stroke-opacity="0.6" fill="none"/>
<path d="M1117.2 464.8L1132.2 406.4L1147.9 348L1150.9 329.3" stroke="#a8a400" stroke-width="4.8" stroke-opacity="0.45" fill="none" stroke-linecap="round" stroke-linejoin="round"/><path d="M1115.1 475L1117.2 464.8" stroke="#a8a400" stroke-width="3.4" stroke-opacity="0.35" fill="none"/><path d="M1117.2 464.8L1132.2 406.4L1147.9 348L1150.9 329.3" stroke="#dcd800" stroke-width="2.5" fill="none" stroke-linejoin="round" stroke-opacity="0.95"/><path d="M1115.1 475L1117.2 464.8" stroke="#dcd800" stroke-width="1.9" fill="none" stroke-opacity="0.95"/><path d="M1114 487L1115.1 475" stroke="#d4d000" stroke-width="1.2" fill="none" stroke-opacity="0.9"/><path d="M1117.2 464.8L1132.2 406.4L1147.9 348L1150.9 329.3" stroke="#ffff30" stroke-width="1.0" fill="none" stroke-linejoin="round"/><path d="M1126.54 426.37V418.47M1148.73 357.76V352.69M1115.49 472.53V468.96M1124.6 438.12V433.94M1116.08 467.55V464.71M1133.86 404.56V401.02M1119.1 469.04V463.19M1150.3 332.92V328.33M1144.21 355.59V352.93M1117.34 468.48V460.66M1125.92 434.34V428.43M1129.74 423.32V419.77M1129.12 428.28V423.49M1148.29 345.55V339.24M1148.35 333.15V327.91M1138.11 381.73V375.33M1149.01 350.09V343.7M1145.79 359.57V355.85M1144.43 367.6V359.98M1148.5 348.66V342.94M1116.63 473.35V470.86M1150.77 331.93V327.43M1145.94 358.07V353.06M1148.2 350.52V348.25M1150.54 331.21V329.03M1128.74 417.28V411.21M1148.49 334.25V330.94M1146.61 358.3V355.41M1114.82 470.14V467.36M1150.59 347.3V342.71M1138.17 382.6V378.35M1116.88 458.27V452.74M1115.38 476.05V473.69M1148.37 346.64V339.26M1118.23 452.7V448.57M1129.8 414.05V410.09M1141.33 369.5V362.89M1134.67 394.76V390.09M1150.25 350.15V342.62M1134.98 404.65V402.38M1124.02 449.3V447.07M1140.49 379.93V372.18M1128.15 423.43V419.44M1125.26 438.33V432.26M1148.9 337.72V330.87M1141.07 374.6V370.71M1146.42 346.63V344.51M1139.2 387.05V383.2M1150.79 347.23V342.95M1151.8 344.49V337.15M1151.64 335.65V329.57M1137.13 399.67V393.43M1130.29 408.71V401.17M1150.75 346.83V340.92M1117.61 475.26V470.64M1114.07 477V471.01M1114.9 475.19V470.87M1114.61 472.41V468.74M1142.61 372.34V368.35M1138.85 379.8V376.92" stroke="#bcb800" stroke-width="0.6" stroke-opacity="0.6" fill="none"/>
<path d="M1165.8 464.8L1180.3 406.4L1197.2 348L1200.2 332.8" stroke="#a8a400" stroke-width="4.8" stroke-opacity="0.45" fill="none" stroke-linecap="round" stroke-linejoin="round"/><path d="M1163.9 475L1165.8 464.8" stroke="#a8a400" stroke-width="3.4" stroke-opacity="0.35" fill="none"/><path d="M1165.8 464.8L1180.3 406.4L1197.2 348L1200.2 332.8" stroke="#dcd800" stroke-width="2.5" fill="none" stroke-linejoin="round" stroke-opacity="0.95"/><path d="M1163.9 475L1165.8 464.8" stroke="#dcd800" stroke-width="1.9" fill="none" stroke-opacity="0.95"/><path d="M1162.8 487L1163.9 475" stroke="#d4d000" stroke-width="1.2" fill="none" stroke-opacity="0.9"/><path d="M1165.8 464.8L1180.3 406.4L1197.2 348L1200.2 332.8" stroke="#ffff30" stroke-width="1.0" fill="none" stroke-linejoin="round"/><path d="M1192.84 372.86V370.21M1173.05 444.23V437.35M1187.38 386.56V381.14M1197.02 341.68V334.52M1198.17 336.02V330.61M1175.39 432.3V428M1197.34 342.6V335.97M1186.26 390.63V385.59M1200.83 335.25V330.91M1162.66 468.5V465.21M1197.8 355.63V347.91M1161.49 478.24V471.27M1189.99 372.34V368.41M1174.75 425.08V418.33M1197.24 359.46V353.01M1180.54 402.27V395.26M1162.71 475.86V468.11M1164.97 465.25V461.75M1172.63 438.43V431M1184.62 397.62V390.35M1162.16 476.95V472.54M1164.29 473.19V469.14M1174.83 438.96V433.79M1167.39 472.69V467.35M1201.1 341.76V335.11M1201.1 338.83V336.74M1198.3 355.69V348.21M1198.57 341.05V334.71M1195.66 362.06V357.22M1197.67 339.51V331.61M1167.31 472.16V466.1M1165.86 477.45V469.8M1169.42 445.45V439.86M1168.43 463.55V457.39M1195.55 360.56V356.69M1196.06 347.32V344.69M1165.47 469.58V464.85M1197.27 345.94V342.03M1194.07 362.45V356.82M1197.43 347.53V343.66M1164.68 470.69V467.72M1168.31 458.67V454.66M1164.39 473.48V470.36M1199.84 348.23V342.01M1199.44 349.12V345.59M1198.95 341.9V338.21M1173.47 430.62V428.54M1163.36 475.48V467.98M1163.71 477.06V470.38M1178.63 418.18V412.9M1198.12 343.85V338.18M1200.29 341.01V336.77M1195.26 346.91V344.45M1196.17 349.9V347.35M1201.79 341.17V334.87M1183.55 396.53V393.47M1182.08 403V397.44M1186.6 392.78V386.77M1170.4 436.62V434.18M1166.07 472.21V468.1" stroke="#bcb800" stroke-width="0.6" stroke-opacity="0.6" fill="none"/>
<path d="M957.5 222V252.72" stroke="#8e8800" stroke-width="1" fill="none"/><path d="M957.7 246L957.7 249.22L957.7 252.43L957.71 255.65L957.74 258.86L957.77 262.08L957.83 265.3L957.92 268.51L958.03 271.73L958.18 274.94L958.37 278.16L958.62 281.38L958.91 284.59L959.26 287.81L959.68 291.02L960.17 294.24L960.74 297.46L961.39 300.67L962.13 303.89L962.96 307.1L963.9 310.32" stroke="#8c8600" stroke-width="1.1" fill="none"/><path d="M958.62 281.38L958.91 284.59L959.26 287.81L959.68 291.02L960.17 294.24L960.74 297.46L961.39 300.67L962.13 303.89L962.96 307.1L963.9 310.32" stroke="#e4e200" stroke-width="2.2" stroke-linecap="round" fill="none"/><path d="M961.5 285.36L961.65 288.62L961.96 291.89L962.37 295.15L962.88 298.42L963.48 301.68L964.15 304.94L964.89 308.21L965.7 311.47L966.57 314.74L967.5 318" stroke="#e4e200" stroke-width="1.9" stroke-linecap="round" fill="none"/><path d="M961.96 297.73V305.44M960.95 281.06V288.68M957.8 271.57V275.76M958.31 284.35V290.26M961.65 292.99V302.47M960.3 282.34V288.93M961.4 280.65V288.55M957.5 263.93V271.61" stroke="#c8c400" stroke-width="0.6" stroke-opacity="0.7" fill="none"/>
<path d="M1005.6 220V250.4" stroke="#8e8800" stroke-width="1" fill="none"/><path d="M1005.8 243.75L1005.8 246.93L1005.8 250.12L1005.81 253.3L1005.83 256.48L1005.87 259.66L1005.92 262.85L1006 266.03L1006.11 269.21L1006.25 272.39L1006.43 275.57L1006.66 278.76L1006.94 281.94L1007.27 285.12L1007.66 288.31L1008.12 291.49L1008.65 294.67L1009.26 297.85L1009.96 301.04L1010.75 304.22L1011.63 307.4" stroke="#8c8600" stroke-width="1.1" fill="none"/><path d="M1006.66 278.76L1006.94 281.94L1007.27 285.12L1007.66 288.31L1008.12 291.49L1008.65 294.67L1009.26 297.85L1009.96 301.04L1010.75 304.22L1011.63 307.4" stroke="#e4e200" stroke-width="2.2" stroke-linecap="round" fill="none"/><path d="M1009.36 282.7L1009.5 285.93L1009.79 289.16L1010.18 292.39L1010.66 295.62L1011.22 298.85L1011.85 302.08L1012.55 305.31L1013.31 308.54L1014.13 311.77L1015 315" stroke="#e4e200" stroke-width="1.9" stroke-linecap="round" fill="none"/><path d="M1007.16 280.04V290.93M1005.89 265.66V273.48M1007.46 264.84V275.93M1008.37 265.81V273.74M1010.72 290.83V295.13M1013.46 302.85V309.33M1009.89 283.04V293.2M1009.58 281.81V287.04" stroke="#c8c400" stroke-width="0.6" stroke-opacity="0.7" fill="none"/>
<path d="M1151.5 216V249.28" stroke="#8e8800" stroke-width="1" fill="none"/><path d="M1151.7 242L1151.7 245.48L1151.7 248.97L1151.71 252.45L1151.73 255.94L1151.77 259.42L1151.82 262.9L1151.89 266.39L1152 269.87L1152.13 273.36L1152.31 276.84L1152.52 280.32L1152.79 283.81L1153.11 287.29L1153.48 290.78L1153.92 294.26L1154.43 297.74L1155.02 301.23L1155.68 304.71L1156.44 308.2L1157.28 311.68" stroke="#8c8600" stroke-width="1.1" fill="none"/><path d="M1152.52 280.32L1152.79 283.81L1153.11 287.29L1153.48 290.78L1153.92 294.26L1154.43 297.74L1155.02 301.23L1155.68 304.71L1156.44 308.2L1157.28 311.68" stroke="#e4e200" stroke-width="2.2" stroke-linecap="round" fill="none"/><path d="M1155.1 284.64L1155.24 288.18L1155.51 291.71L1155.89 295.25L1156.35 298.78L1156.88 302.32L1157.48 305.86L1158.15 309.39L1158.88 312.93L1159.66 316.46L1160.5 320" stroke="#e4e200" stroke-width="1.9" stroke-linecap="round" fill="none"/><path d="M1154.73 296.35V303.07M1154.56 295.38V305.44M1156.2 299.04V304.08M1152.83 284.2V288M1154.6 277.27V284.41M1155.84 298.89V302.96M1154.92 285.63V292.08M1156.72 299.9V307.78" stroke="#c8c400" stroke-width="0.6" stroke-opacity="0.7" fill="none"/>
<path d="M1200.5 222V253.36" stroke="#8e8800" stroke-width="1" fill="none"/><path d="M1200.7 246.5L1200.7 249.78L1200.7 253.07L1200.71 256.35L1200.73 259.63L1200.77 262.92L1200.82 266.2L1200.9 269.48L1201.01 272.76L1201.16 276.05L1201.34 279.33L1201.57 282.61L1201.85 285.9L1202.18 289.18L1202.58 292.46L1203.05 295.75L1203.58 299.03L1204.2 302.31L1204.9 305.59L1205.7 308.88L1206.59 312.16" stroke="#8c8600" stroke-width="1.1" fill="none"/><path d="M1201.57 282.61L1201.85 285.9L1202.18 289.18L1202.58 292.46L1203.05 295.75L1203.58 299.03L1204.2 302.31L1204.9 305.59L1205.7 308.88L1206.59 312.16" stroke="#e4e200" stroke-width="2.2" stroke-linecap="round" fill="none"/><path d="M1204.3 286.68L1204.44 290.01L1204.73 293.34L1205.13 296.68L1205.62 300.01L1206.18 303.34L1206.82 306.67L1207.52 310L1208.29 313.34L1209.12 316.67L1210 320" stroke="#e4e200" stroke-width="1.9" stroke-linecap="round" fill="none"/><path d="M1200.82 279.06V285.59M1200.6 275.35V285.33M1201.82 259.59V268.25M1200.1 266.31V273.58M1202.02 272.92V278.84M1203.44 290.47V296.59M1201.18 272.54V278.55M1204.28 288.1V295.29" stroke="#c8c400" stroke-width="0.6" stroke-opacity="0.7" fill="none"/>
<path d="M1018.32 167.63V187.84M1019.53 170.01V186.19M1021.23 168.02V189.39M1023.84 167.66V185.81M1024.32 170.83V187.87M1027.2 170.23V187.81M1028.67 170.33V188.02M1029.09 170.86V187.7M1030.57 168.75V186.77M1032.18 168.54V185.95M1033.23 171.24V189.19M1033.75 168.14V189.38M1034.47 170.63V186.89M1034.89 167.93V187.7M1035.38 167.64V186.57M1037.04 170.42V188.53M1038.05 171.31V188.3M1039.61 168.78V189.18M1041.7 170.9V187.56M1042.66 169.16V189.15M1044.56 169.85V188.62M1045.57 170.1V187.57M1045.99 170.45V186.47M1046.87 169.59V186.22M1048.51 171.01V186.83M1053.36 170.65V188.95" stroke="#8a8600" stroke-width="0.6" stroke-opacity="0.55" fill="none"/><path d="M1016.5 171.26V185.72M1016.86 172.06V185.7M1017.37 172.49V184.66M1017.69 172.46V184.19M1018.17 172.07V184.67M1018.55 172.24V185.3M1018.88 172.06V185.47M1019.36 171.41V184.9M1019.78 171.99V184.95M1020.37 172.47V184.02M1020.75 172.98V184.87M1021.27 172.59V185.86M1021.71 171.57V185.15M1022.03 171.71V184.75M1022.43 172.24V184.26M1022.97 172.62V184.49M1023.33 171.05V184.02M1023.77 171.1V184.54M1024.1 171.5V184.97M1024.65 171.23V185.02M1024.95 171.8V184.02M1025.28 171.19V185.42M1025.79 171.54V185.23M1026.32 172.23V184.64M1026.88 171.63V185.43M1027.33 172.31V185.1M1027.84 172.2V185M1028.53 172.34V185.73M1028.91 171.9V185.67M1029.57 172.03V185.83M1029.94 171.78V184.72M1030.46 171.04V184.26M1031.06 171.32V184.27M1031.59 171.91V184.66M1032.26 172.89V184M1032.81 171.11V185.14M1033.29 171.59V184.59M1033.97 171.33V184.35M1034.5 171.57V184.71M1035.11 172.69V185.8M1035.65 172.96V184.46M1036.07 171.71V184.27M1036.68 171.21V184.84M1037.26 172.3V185.46M1037.92 171.44V184.66M1038.52 171.55V184.12M1039.06 171.93V185.49M1039.44 171.51V184.78M1039.99 171.6V185.27M1040.5 172.28V185.52M1041.11 172.32V184.67M1041.7 172.75V185.56M1042.08 171.68V184.93M1042.73 171.95V184.34M1043.19 171.69V185.37M1043.54 172.31V184.46M1043.95 171.54V185.34M1044.55 171.95V184.18M1045.17 172.67V184.14M1045.52 171.12V185.94M1046.2 172.59V184.29M1046.59 172.01V184.53M1047.22 171.26V185.75M1047.73 171.1V184.85M1048.18 172.02V185.18M1048.75 172.84V185.59M1049.25 171.59V185.52M1049.75 172.23V185.87M1050.26 171.08V184.65M1050.63 171.92V184.5M1051.32 172.86V185.26M1051.65 172.04V185.74M1051.99 171.52V184.24M1052.46 172.58V185.03M1052.79 172.6V184.59M1053.24 171.42V185.23M1053.58 172.65V184.28M1054.21 172.77V185.94M1054.6 171.93V184.37M1055.08 171.26V184.58" stroke="#bcb600" stroke-width="0.6" stroke-opacity="0.7" fill="none"/><path d="M1016.5 174.16V182.87M1016.97 174.25V182.82M1017.37 175.24V181.84M1017.82 175.13V182.47M1018.36 175.25V182.22M1018.71 174.21V181.91M1019.18 174.87V182.86M1019.81 174.08V182.48M1020.42 173.8V182.12M1021.06 174.45V182.68M1021.36 174V182.14M1021.97 173.81V181.85M1022.48 173.85V183.19M1023.13 174.09V182.03M1023.68 174.8V182.51M1024.35 174.5V183.21M1024.97 173.97V183.22M1025.59 173.79V182.18M1025.95 174.93V182.51M1026.37 174.85V182.8M1026.92 174.7V182.44M1027.29 174.04V182.99M1027.8 175.04V181.99M1028.38 173.96V182.01M1028.83 174.35V181.74M1029.29 174.71V182.1M1029.7 174.54V181.86M1030.4 174.47V182.38M1030.98 174.58V182.28M1031.67 174.31V182.88M1032.37 175.28V183.03M1032.76 175.14V182.52M1033.19 174.22V183.02M1033.53 173.72V183.06M1033.94 175.25V182.37M1034.26 174.37V182.59M1034.92 174.85V182.87M1035.32 175.24V182.08M1035.85 174.59V182.84M1036.19 175.16V182.54M1036.53 174.63V182.22M1037.09 174.32V182.37M1037.71 174.1V182.24M1038.26 175.29V183.06M1038.84 174.87V182.77M1039.5 175.28V182.3M1039.83 174.5V182.82M1040.21 174.59V181.81M1040.68 174.22V183.07M1041 174.44V182.11M1041.6 174.84V183.22M1041.92 174.17V183.15M1042.43 174.5V182.79M1043.02 174.8V181.95M1043.45 173.7V183.23M1044 174.24V182.52M1044.43 173.75V182.9M1044.79 173.92V182.15M1045.33 174.67V182.22M1045.65 174.28V182.5M1046.25 174.6V183.03M1046.71 174.26V182.04M1047.14 174.37V182.39M1047.64 174.49V183.09M1047.99 174.6V183.29M1048.4 173.81V182.41M1048.83 173.89V183.2M1049.25 175.02V182.39M1049.7 174.66V183.22M1050.08 174.4V182.1M1050.55 174.03V182.53M1051 174.25V182.92M1051.32 174.86V182.93M1051.82 174.69V183.15M1052.17 173.85V181.77M1052.63 174.32V182.81M1053.23 174.72V182.66M1053.73 175.24V182.69M1054.32 175.06V182.09M1054.62 175.02V182.73" stroke="#e0dc00" stroke-width="0.6" stroke-opacity="0.85" fill="none"/><path d="M1016.5 176.23V180.8M1017.03 175.68V181.2M1017.77 175.96V181.3M1018.29 175.8V181.03M1018.75 176.39V180.11M1019.63 175.97V180.43M1020.2 175.95V181.05M1020.88 176.88V181.31M1021.7 176.8V181.06M1022.56 175.99V180.25M1023 175.54V181.43M1023.4 176.29V180.44M1023.92 176.35V180.95M1024.6 176.09V181.08M1025.2 175.59V180.4M1025.86 175.86V180.61M1026.56 176.58V180.58M1027.38 176.82V181.14M1027.86 176.69V180.36M1028.58 176.52V180.57M1029.24 176.54V180.4M1030.04 175.9V181.43M1030.62 176.69V180.41M1031.4 176.81V181.34M1032.28 176V180.11M1032.74 176.75V180.75M1033.16 176.76V181.03M1033.75 176.53V181.19M1034.26 176.02V180.5M1035.03 176.78V181.38M1035.91 175.96V180.44M1036.47 176.3V180.5M1037.26 176.54V180.57M1037.73 176.43V181.45M1038.54 176.36V181.06M1038.96 175.55V180.8M1039.39 176.5V181.03M1040.21 176.77V181.45M1041 176.04V180.42M1041.67 175.75V181.32M1042.27 175.77V180.95M1043.09 176.82V180.55M1043.68 176.8V180.73M1044.49 175.7V180.7M1045.1 175.63V180.26M1045.99 176.76V180.39M1046.46 175.65V180.15M1047.29 176.44V180.17M1048.01 176.42V180.33M1048.71 175.81V180.16M1049.53 176.89V181.12M1050.1 176.16V180.15M1050.97 175.5V180.24M1051.61 175.58V181.16M1052.08 176.25V181.29M1052.86 176.52V180.49M1053.41 176.69V180.57M1053.92 175.81V181.5M1054.56 175.71V180.89M1055.11 176.33V180.16" stroke="#ffff10" stroke-width="0.6" stroke-opacity="0.75" fill="none"/><path d="M1023 156.71V178.5M1018.19 148.4V178.5M1044.96 149.05V178.5M1033.97 178.5V209.12M1043.57 153.47V178.5M1045.6 178.5V189.81M1032.53 178.5V190.6M1053.48 178.5V210.24M1049.24 165.49V178.5M1052.43 166.33V178.5M1022.66 178.5V193.64M1051.08 178.5V192.53M1042.61 178.5V192.51M1038.15 164.97V178.5M1023.25 161.62V178.5M1050.87 178.5V189.21M1041.4 167.83V178.5M1051.46 178.5V189.03M1048.33 178.5V191.79M1037.92 163.83V178.5" stroke="#8c8600" stroke-width="0.7" stroke-opacity="0.7" fill="none"/>
<path d="M1069.85 168.59V186.25M1072.89 168.02V186.01M1075.95 168.62V186.64M1076.47 168.03V188.68M1077.53 170.05V186.4M1078.04 171.38V186.22M1079.12 169.54V189.08M1080.68 170.29V189.29M1082.67 170.23V186.33M1084.18 167.77V187.03M1086.64 168.55V186.94M1089.55 170.46V185.92M1090.2 171.07V189.43M1090.86 167.96V187.36M1095.09 168.17V186.12M1098.72 171.32V185.72M1100.67 168.65V186.01M1101.65 169.35V188.67M1102.13 170.05V185.86" stroke="#8a8600" stroke-width="0.6" stroke-opacity="0.55" fill="none"/><path d="M1065.5 171.79V185.81M1065.88 172.59V185.24M1066.4 172.06V184.29M1067.02 171.47V184.07M1067.4 171.76V184.2M1068.06 171.65V184.96M1068.49 172.28V186M1069.04 172.11V185.1M1069.4 172.31V185.86M1069.88 171.99V185.11M1070.2 171.1V185.12M1070.53 171.36V184.03M1071.01 172.11V184.55M1071.52 172.46V185.79M1071.85 171.85V184.91M1072.47 171.68V184.79M1072.88 171.31V185.31M1073.24 171.69V185.63M1073.66 173V185.39M1074.2 172.15V185.23M1074.83 171.06V184.73M1075.35 171.42V185.03M1075.78 171.85V185.83M1076.46 171.66V185.86M1077.12 171.54V185.74M1077.44 172.17V184.09M1078.06 171.77V185.3M1078.51 172.97V185.02M1078.85 171.35V184.77M1079.21 172.08V185.68M1079.56 171.98V184.74M1079.94 171.28V185.8M1080.27 172.73V185.81M1080.67 171.89V185.25M1080.98 171.36V184.98M1081.43 171.35V184.34M1081.78 172.5V185.72M1082.4 171.18V185.89M1082.83 172.37V185.24M1083.22 171.51V184.3M1083.63 172.83V184.72M1083.95 172.46V185.71M1084.32 172.32V184.45M1084.63 172.5V185.09M1085.12 171.75V184.12M1085.56 172.13V185.47M1086.12 171.87V185.7M1086.72 171.45V185.46M1087.08 172.8V185.65M1087.53 171.58V185.29M1088.22 172.64V184.3M1088.66 171.3V184.91M1089.22 171.42V184.91M1089.54 172.44V184.36M1089.93 172V185.35M1090.5 172.32V184.54M1090.94 172.33V185.68M1091.53 172.21V185.38M1092.17 172.29V185.02M1092.74 172.98V185.11M1093.29 171.35V184.82M1093.96 172.66V184.37M1094.63 172.02V184.7M1095.11 172.72V185.24M1095.77 172.44V185.51M1096.43 171.32V185.94M1096.82 171.2V184.17M1097.48 172.59V184.69M1098.03 171.12V184.65M1098.63 172.22V185.95M1098.94 172.14V185.4M1099.26 171.7V184.15M1099.8 172.68V184.15M1100.24 171.64V185.87M1100.82 171.32V184M1101.2 172.8V185.05M1101.51 171.62V185.9M1101.85 171.55V184.57M1102.35 171.12V184.06M1103.01 172.21V185.34" stroke="#bcb600" stroke-width="0.6" stroke-opacity="0.7" fill="none"/><path d="M1065.5 174.87V182.17M1065.9 174.73V183.17M1066.27 175.11V181.93M1066.62 173.72V182.36M1066.98 174.48V182.02M1067.57 174.37V181.98M1068.03 174.02V182.24M1068.42 174.33V182.91M1069.05 174.21V181.85M1069.51 174.91V182.37M1070.12 173.77V182.33M1070.75 174.81V182.24M1071.41 174.64V182.33M1071.96 173.82V181.85M1072.42 174.66V183.24M1072.9 175.11V181.89M1073.58 173.78V183.27M1074.16 174.3V181.99M1074.47 175.1V182.21M1075.14 174.88V182.19M1075.57 174.21V182.35M1076.02 174.97V182.14M1076.69 174.23V182.39M1077.19 174.01V181.73M1077.83 174.61V183.01M1078.45 174.96V182.67M1078.78 174.22V182.52M1079.31 174.38V181.91M1079.65 174.69V182.08M1080.26 173.97V182.49M1080.72 174.37V182.7M1081.14 173.8V181.95M1081.54 175.22V182.91M1081.94 173.82V181.99M1082.37 174.31V182.71M1083 175.15V181.72M1083.41 175.03V183.12M1083.88 174.28V181.98M1084.4 174.26V182.93M1084.87 174.93V182.98M1085.47 174.67V183.23M1085.86 174.13V182.86M1086.21 175.15V183.03M1086.74 174.86V182.89M1087.18 175.22V183.3M1087.55 174.8V181.93M1088.14 174.7V183M1088.56 175.2V182.71M1089.1 174.13V183.02M1089.65 173.83V183.01M1090.3 174.12V181.97M1090.98 175.28V181.79M1091.33 175.04V182.2M1091.69 175.09V181.79M1092.15 174.41V181.98M1092.79 174.51V182.58M1093.39 174.03V182.75M1093.9 173.86V182.81M1094.27 173.8V183.18M1094.73 173.76V182.14M1095.31 175.26V181.84M1095.91 174.66V181.85M1096.26 174.22V182.67M1096.66 174.1V182.49M1097.08 174.17V182.75M1097.45 174.76V183.01M1098.03 174.94V183.1M1098.6 174.33V181.91M1099.24 174.2V182.95M1099.91 174.65V182.76M1100.36 174.12V183.22M1101 173.95V181.98M1101.67 174.08V182.09M1102.16 174.17V182.3M1102.8 175.02V182.54M1103.29 174.89V182.29" stroke="#e0dc00" stroke-width="0.6" stroke-opacity="0.85" fill="none"/><path d="M1065.5 176.4V181.46M1066.38 176.4V180.48M1067.26 176.89V181.21M1068.14 175.76V181.37M1068.6 175.72V181.07M1069.16 176.5V180.69M1069.57 176.48V180.13M1070.03 175.68V181.5M1070.73 175.85V180.99M1071.47 176.33V181.36M1072.14 176.46V181.41M1072.63 175.94V180.1M1073.46 176.67V180.97M1074.27 175.7V181.25M1074.82 175.82V180.84M1075.54 176.77V180.74M1076.33 176.53V180.73M1076.83 176.41V180.45M1077.62 176.77V181.19M1078.03 176.13V181.14M1078.55 175.71V181.23M1079.07 175.93V181.02M1079.82 175.71V180.34M1080.22 175.85V180.24M1080.76 175.72V180.98M1081.62 176.3V180.27M1082.48 175.82V180.45M1083.23 175.51V181.04M1083.87 176.39V180.35M1084.41 176.88V180.94M1085.14 176.59V180.24M1085.7 176.6V180.11M1086.24 176.28V181.11M1086.97 176.68V180.66M1087.72 176.74V180.97M1088.59 176.49V181.41M1089.43 175.85V181.35M1089.95 176.37V180.65M1090.42 175.78V181.46M1091.17 176.64V181.18M1091.68 175.79V181.38M1092.31 176.66V180.53M1092.97 175.66V180.42M1093.7 176.18V181.49M1094.3 176.34V181.28M1094.86 176.86V180.79M1095.41 175.83V181.08M1096.24 176.09V180.51M1096.65 176.02V181.23M1097.13 176.48V181.33M1097.89 176.44V181.14M1098.7 175.98V181.18M1099.49 176.64V181.16M1100.08 175.71V181.03M1100.79 175.74V181.07M1101.25 175.66V180.64M1101.66 176.84V181.07M1102.22 176.73V180.97M1102.75 176.62V180.37M1103.24 175.95V181.38" stroke="#ffff10" stroke-width="0.6" stroke-opacity="0.75" fill="none"/><path d="M1082.47 155.07V178.5M1093.83 168.18V178.5M1068.56 178.5V191.65M1068.48 166.8V178.5M1078.93 141.93V178.5M1069.81 178.5V198.92M1075.42 143.51V178.5M1067.52 153.46V178.5M1088.15 167.26V178.5M1076.63 161.77V178.5M1070.97 162.03V178.5M1094.27 167.54V178.5M1087.38 178.5V190.52M1078 178.5V193.71M1087.26 178.5V192.94M1083.19 178.5V193.63M1080.29 162.18V178.5M1084.57 163.9V178.5M1087.03 166.08V178.5M1097.09 163.74V178.5" stroke="#8c8600" stroke-width="0.7" stroke-opacity="0.7" fill="none"/>
<path d="M1055.2 185V226.28" stroke="#8e8800" stroke-width="1" fill="none"/><path d="M1055.4 217.25L1055.4 221.57L1055.4 225.89L1055.41 230.21L1055.43 234.54L1055.46 238.86L1055.52 243.18L1055.59 247.5L1055.69 251.82L1055.82 256.14L1055.99 260.46L1056.21 264.79L1056.46 269.11L1056.77 273.43L1057.14 277.75L1057.57 282.07L1058.07 286.39L1058.64 290.72L1059.29 295.04L1060.03 299.36L1060.86 303.68" stroke="#8c8600" stroke-width="1.1" fill="none"/><path d="M1057.14 277.75L1057.57 282.07L1058.07 286.39L1058.64 290.72L1059.29 295.04L1060.03 299.36L1060.86 303.68" stroke="#e4e200" stroke-width="2.2" stroke-linecap="round" fill="none"/><path d="M1058.72 270.14L1058.85 274.53L1059.12 278.91L1059.49 283.3L1059.94 287.68L1060.46 292.07L1061.05 296.46L1061.7 300.84L1062.41 305.23L1063.18 309.61L1064 314" stroke="#e4e200" stroke-width="1.9" stroke-linecap="round" fill="none"/><path d="M1058.51 288.71V296.84M1057.33 259.26V265.27M1056.78 265.99V274M1058.15 249.76V260M1058.1 248.21V254.41M1058.18 258.38V263.26M1059.31 277.08V287.33M1059.02 266.73V276.29" stroke="#c8c400" stroke-width="0.6" stroke-opacity="0.7" fill="none"/>
<path d="M1103.2 185V227.56" stroke="#8e8800" stroke-width="1" fill="none"/><path d="M1103.4 218.25L1103.4 222.71L1103.4 227.16L1103.41 231.62L1103.44 236.07L1103.47 240.53L1103.53 244.98L1103.61 249.44L1103.72 253.89L1103.87 258.35L1104.06 262.81L1104.3 267.26L1104.58 271.72L1104.93 276.17L1105.34 280.63L1105.82 285.08L1106.38 289.54L1107.01 293.99L1107.74 298.45L1108.56 302.9L1109.48 307.36" stroke="#8c8600" stroke-width="1.1" fill="none"/><path d="M1105.34 280.63L1105.82 285.08L1106.38 289.54L1107.01 293.99L1107.74 298.45L1108.56 302.9L1109.48 307.36" stroke="#e4e200" stroke-width="2.2" stroke-linecap="round" fill="none"/><path d="M1107.12 272.78L1107.27 277.3L1107.57 281.82L1107.98 286.35L1108.48 290.87L1109.06 295.39L1109.72 299.91L1110.44 304.43L1111.23 308.96L1112.09 313.48L1113 318" stroke="#e4e200" stroke-width="1.9" stroke-linecap="round" fill="none"/><path d="M1105.24 261.27V270.74M1105.26 274.51V280.79M1107.81 278.44V288.32M1107.49 288.65V295.7M1109.1 284.26V293.63M1108.03 279.64V289.66M1106.92 267.89V275.75M1104.34 271.15V280.2" stroke="#c8c400" stroke-width="0.6" stroke-opacity="0.7" fill="none"/>
</g>
</svg>
<!-- y labels -->
<div class="yl" style="left:22px;top:59.5px;height:12.5px">2.42 V</div>
<div class="yl" style="left:22px;top:107.6px;height:14.6px">2.22 V</div>
<div class="yl" style="left:22px;top:165.7px;height:14.6px">2.02 V</div>
<div class="yl" style="left:22px;top:223.8px;height:14.6px">1.82 V</div>
<div class="yl" style="left:22px;top:281.9px;height:14.6px">1.62 V</div>
<div class="yl" style="left:22px;top:340.0px;height:14.6px">1.42 V</div>
<div class="yl" style="left:22px;top:398.1px;height:14.6px">1.22 V</div>
<div class="yl" style="left:22px;top:456.2px;height:14.6px">1.02 V</div>
<div class="yl" style="left:22px;top:514.8px;height:14.6px;background:rgba(40,40,40,0.45)">820 mV</div>
<div class="yl" style="left:22px;top:572.4px;height:14.6px">620 mV</div>
<div class="yl" style="left:22px;top:623.3px;height:14.2px">420 mV</div>
<!-- time labels -->
<div class="tl" style="left:131.4px;top:617.5px">2.636 s</div>
<div class="tl" style="left:226.8px;top:617.5px">2.64 s</div>
<div class="tl" style="left:322.2px;top:617.5px">2.644 s</div>
<div class="tl" style="left:417.6px;top:617.5px">2.648 s</div>
<div class="tl" style="left:513.0px;top:617.5px">2.652 s</div>
<div class="tl" style="left:608.4px;top:617.5px">2.656 s</div>
<div class="tl" style="left:703.8px;top:617.5px">2.66 s</div>
<div class="tl" style="left:799.2px;top:617.5px">2.664 s</div>
<div class="tl" style="left:894.6px;top:617.5px">2.668 s</div>
<div class="tl" style="right:265px;top:617.5px;transform:none">2.671 s</div>
<svg width="1230" height="772"><path d="M17.2 344.8 L20.6 348 L17.2 351.2" fill="none" stroke="#d8d800" stroke-width="1.2"/></svg>
<!-- red box -->
<div class="a" style="left:12px;top:54px;width:407px;height:588px;border:5px solid #ff0000"></div>
<!-- blue dashed line -->
<svg width="1230" height="772"><line x1="17" y1="316.5" x2="413" y2="316.5" stroke="#64a8e4" stroke-width="5" stroke-dasharray="14.6 4.57" stroke-dashoffset="2.4"/></svg>

<!-- diagram tab -->
<div class="a" style="left:67px;top:58px;width:134px;height:27px;background:#b4b4b4;border-radius:0 0 6px 6px"></div>
<div class="a" style="left:77.8px;top:65.6px;font-size:11.5px;font-weight:bold;color:#111;line-height:14px;letter-spacing:0.72px">Diagram1: Ch1</div>
<div class="a" style="left:182px;top:65px;width:14.5px;height:14.5px;border-radius:3px;background:linear-gradient(#f25050,#c01818 50%,#8a0606);box-shadow:inset 0 0 0 0.6px #600"></div><svg width="1230" height="772"><path d="M185.6 68.6 L192.9 75.9 M192.9 68.6 L185.6 75.9" stroke="#fff" stroke-width="2.3"/></svg>

<div class="t" style="top:17.1px;left:1097.5px;font-size:12.5px;line-height:12.5px;color:#f4f4f4;font-weight:bold;letter-spacing:0.25px;transform:scaleX(1.22);transform-origin:0 0">2020-09-26</div>
<div class="t" style="top:31.9px;left:1107.8px;font-size:12.5px;line-height:12.5px;color:#f4f4f4;font-weight:bold;letter-spacing:0.1px;transform:scaleX(1.2);transform-origin:0 0">02:16:03</div>
<svg width="1230" height="772" style="position:absolute;left:0;top:0">
<path d="M1201.4 12 L1218.8 29.3 L1201.4 46.6 L1184 29.3 Z" fill="none" stroke="#1ea2e2" stroke-width="2.5"/>
<path d="M1208.8 18.8 L1202 27.5 C1200.5 29.5 1199 31 1197 32.5 C1195.5 33.8 1194 36 1193 38.8" fill="none" stroke="#1ea2e2" stroke-width="1.8"/>
<path d="M1193.6 30 V21.8 H1196.6 C1199.4 21.8 1199.4 26 1196.6 26 H1194 M1196.4 26 L1199.4 30" fill="none" stroke="#1ea2e2" stroke-width="1.6"/>
<path d="M1208.3 31.5 C1207.6 30.2 1203 30 1203 32.4 C1203 34.6 1208.6 34 1208.6 36.2 C1208.6 38.6 1203.6 38.6 1202.6 37.2" fill="none" stroke="#1ea2e2" stroke-width="1.6"/>
</svg>
<svg width="1230" height="772" style="position:absolute;left:0;top:0"><path d="M946.8 79.7 L952.6 73.7 H966.4 V85.7 H952.6 Z" fill="#1a0c0c" stroke="#22c8d2" stroke-width="1.3"/><text x="953.2" y="83.9" font-family="Liberation Sans" font-weight="bold" font-size="9.5" fill="#22c8d2">TA</text></svg>
<div class="a" style="left:1053px;top:198px;width:171px;height:531px;background:#222"></div>
<div class="a" style="left:1050px;top:198px;width:3px;height:531px;background:#8c8c8c"></div>
<div class="a" style="left:976px;top:54px;width:248px;height:144px;background:#464646;border-radius:0 0 0 6px;border-left:3px solid #dcdcdc;border-bottom:2px solid #dcdcdc"></div>
<div class="a" style="left:979px;top:54px;width:245px;height:2px;background:#727272"></div>
<div class="a" style="left:979px;top:56px;width:245px;height:16px;background:#080808"></div>
<div class="a" style="left:979px;top:72px;width:245px;height:1px;background:#747474"></div>
<div class="a" style="left:979px;top:141px;width:245px;height:1px;background:#747474"></div>
<div class="a" style="left:979px;top:142px;width:245px;height:17px;background:#080808"></div>
<div class="a" style="left:979px;top:159px;width:245px;height:1px;background:#747474"></div>
<div class="t" style="top:57.3px;left:985.0px;font-size:14.5px;line-height:14.5px;color:#fff;letter-spacing:1.35px;-webkit-text-stroke:0.4px #fff">Horizontal</div>
<div class="t" style="top:74.7px;left:981.5px;font-size:14px;line-height:14px;color:#e2e2e2;letter-spacing:1px">1 &micro;s</div>
<div class="t" style="top:74.7px;right:7.0px;text-align:right;font-size:14px;line-height:14px;color:#e2e2e2;letter-spacing:1.1px">1 MSa/s</div>
<div class="t" style="top:91.8px;left:981.0px;font-size:14px;line-height:14px;color:#8c8c8c;letter-spacing:1px">40 kSa</div>
<div class="t" style="top:91.8px;right:6.5px;text-align:right;font-size:14px;line-height:14px;color:#e2e2e2;letter-spacing:2px">RT</div>
<div class="t" style="top:108.8px;left:981.0px;font-size:14px;line-height:14px;color:#e2e2e2;letter-spacing:1px">4 ms/div</div>
<div class="t" style="top:125.2px;left:981.0px;font-size:14px;line-height:14px;color:#e2e2e2;letter-spacing:1px">2.651 s</div>
<div class="t" style="top:144.2px;left:985.5px;font-size:14.5px;line-height:14.5px;color:#fff;letter-spacing:1.35px;-webkit-text-stroke:0.4px #fff">Trigger</div>
<div class="t" style="top:144.6px;right:7.0px;text-align:right;font-size:14px;line-height:14px;color:#e8b000;letter-spacing:1.5px">Auto</div>
<div class="t" style="top:162.6px;left:981.0px;font-size:14px;line-height:14px;color:#e2e2e2;letter-spacing:1px">A:</div>
<div class="t" style="top:162.6px;left:1026.0px;font-size:14px;line-height:14px;color:#e2e2e2;letter-spacing:1px">Edge</div>
<svg width="1230" height="772" style="position:absolute;left:0;top:0"><path d="M1067 162.5 H1074 V175 H1084 M1068.5 166 L1074 172 L1079.5 166" fill="none" stroke="#e2e2e2" stroke-width="1.4"/></svg>
<div class="t" style="top:162.6px;left:1089.0px;font-size:14px;line-height:14px;color:#e6e600;letter-spacing:1px">Ch1</div>
<div class="t" style="top:179.5px;left:981.0px;font-size:14px;line-height:14px;color:#e2e2e2;letter-spacing:1px">Level:</div>
<div class="t" style="top:179.5px;left:1026.0px;font-size:14px;line-height:14px;color:#e2e2e2;letter-spacing:1px">2.34 V</div>
<div class="a" style="left:976px;top:216px;width:229px;height:85px;background:#1f1d07;border:2px solid #dede00;border-radius:7px;overflow:hidden"><div style="position:absolute;left:0;top:0;width:225px;height:17px;background:#f0f000;border-radius:0 0 6px 6px"></div></div>
<div class="t" style="top:219.8px;left:1038.5px;font-size:14px;line-height:14px;color:#000;font-weight:bold;letter-spacing:1.8px">Ch1Wfm1</div>
<svg width="1230" height="772" style="position:absolute;left:0;top:0"><path d="M1157.5 225 L1163.5 219 L1169.5 225 Z M1157.5 227 L1163.5 233 L1169.5 227 Z" fill="#d42a2a"/></svg>
<div class="a" style="left:1177px;top:218px;width:25px;height:14px;border-radius:5px;background:linear-gradient(#9cc4ff,#2f66d6 60%,#1d48a8);border:1px solid #1a3c80"><div style="position:absolute;left:6px;top:5px;width:11px;height:2.5px;background:#fff"></div></div>
<div class="t" style="top:237.0px;left:979.5px;font-size:14px;line-height:14px;color:#e2e2e2;letter-spacing:0.9px">200 mV/div</div>
<div class="t" style="top:253.1px;left:979.5px;font-size:14px;line-height:14px;color:#8c8c8c;letter-spacing:0.9px">0 div</div>
<div class="t" style="top:253.1px;left:1093.0px;font-size:14px;line-height:14px;color:#e2e2e2;letter-spacing:1.2px">1.42 V</div>
<div class="t" style="top:269.2px;left:979.5px;font-size:14px;line-height:14px;color:#e2e2e2;letter-spacing:0.9px">DC 1M&Omega;</div>
<div class="t" style="top:269.2px;left:1091.6px;font-size:14px;line-height:14px;color:#e2e2e2;letter-spacing:1.05px">BW: 500 MHz</div>
<div class="t" style="top:285.2px;left:979.5px;font-size:14px;line-height:14px;color:#e2e2e2;letter-spacing:0.9px">Sample</div>
<div class="a" style="left:12px;top:645px;width:955px;height:82px;background:#3c4347;border:1px solid #cfcfcf;border-top:none"></div>
<div class="a" style="left:12px;top:645px;width:955px;height:29px;background:linear-gradient(#6c6c6c,#a8a8a8 40%,#dadada 85%,#e6e6e6)"></div>
<svg width="1230" height="772" style="position:absolute;left:0;top:0"><path d="M63.5 645 C67.5 645 69 647 69.5 652 L70 667.5 C70.5 672 72.5 674 77 674 L186 674 C190.5 674 192.5 672 193 667.5 L193.5 652 C194 647 195.5 645 199.5 645" fill="#c4c4c4" stroke="#3a3a3a" stroke-width="1"/></svg>
<div class="t" style="top:656.7px;left:78.3px;font-size:12px;line-height:12px;color:#111;font-weight:bold;letter-spacing:0.25px">Meas Results</div>
<div class="a" style="left:171px;top:654.5px;width:15px;height:14px;border-radius:3px;background:linear-gradient(#f04040,#a00c0c);"></div>
<svg width="1230" height="772" style="position:absolute;left:0;top:0"><path d="M174.5 657.5 L182.5 665.5 M182.5 657.5 L174.5 665.5" stroke="#fff" stroke-width="2.2"/></svg>
<div class="t" style="top:678.2px;left:15.2px;font-size:12.5px;line-height:12.5px;color:#f4f4f4;font-weight:bold;letter-spacing:0.3px">Meas Group 1</div>
<div class="a" style="left:117.7px;top:678px;width:12.5px;height:12px;background:#ff6600;color:#6a2000;font-size:7px;line-height:12px;text-align:center;font-family:Liberation Sans">C3</div>
<div class="a" style="left:15.2px;top:692px;width:99px;height:15px;background:#383f43"></div>
<div class="a" style="left:15.2px;top:708px;width:99px;height:15px;background:#383f43"></div>
<div class="a" style="left:116.2px;top:692px;width:98.5px;height:15px;background:#c9c9c9"></div>
<div class="a" style="left:116.2px;top:708px;width:98.5px;height:15px;background:#c9c9c9"></div>
<div class="t" style="top:694.6px;left:17.2px;font-size:12.5px;line-height:12.5px;color:#f4f4f4;font-weight:bold;letter-spacing:0.3px">Max</div>
<div class="t" style="top:711.3px;left:17.2px;font-size:12.5px;line-height:12.5px;color:#f4f4f4;font-weight:bold;letter-spacing:0.3px">Min</div>
<div class="t" style="top:694.6px;right:1016.8px;text-align:right;font-size:12.5px;line-height:12.5px;color:#111;font-weight:bold;letter-spacing:1.25px">3.9526 mV</div>
<div class="t" style="top:711.3px;right:1016.8px;text-align:right;font-size:12.5px;line-height:12.5px;color:#111;font-weight:bold;letter-spacing:1.25px">-3.9526 mV</div>
<div class="t" style="top:678.2px;left:219.4px;font-size:12.5px;line-height:12.5px;color:#f4f4f4;font-weight:bold;letter-spacing:0.3px">Meas Group 2</div>
<div class="a" style="left:321.9px;top:678px;width:12.5px;height:12px;background:#22e622;color:#6a2000;font-size:7px;line-height:12px;text-align:center;font-family:Liberation Sans">C2</div>
<div class="a" style="left:219.4px;top:692px;width:99px;height:15px;background:#383f43"></div>
<div class="a" style="left:219.4px;top:708px;width:99px;height:15px;background:#383f43"></div>
<div class="a" style="left:320.4px;top:692px;width:98.5px;height:15px;background:#c9c9c9"></div>
<div class="a" style="left:320.4px;top:708px;width:98.5px;height:15px;background:#c9c9c9"></div>
<div class="t" style="top:694.6px;left:221.4px;font-size:12.5px;line-height:12.5px;color:#f4f4f4;font-weight:bold;letter-spacing:0.3px">Max</div>
<div class="t" style="top:711.3px;left:221.4px;font-size:12.5px;line-height:12.5px;color:#f4f4f4;font-weight:bold;letter-spacing:0.3px">Min</div>
<div class="t" style="top:694.6px;right:812.6px;text-align:right;font-size:12.5px;line-height:12.5px;color:#111;font-weight:bold;letter-spacing:1.25px">181.82 mV</div>
<div class="t" style="top:711.3px;right:812.6px;text-align:right;font-size:12.5px;line-height:12.5px;color:#111;font-weight:bold;letter-spacing:1.25px">63.241 mV</div>
<div class="t" style="top:678.2px;left:423.6px;font-size:12.5px;line-height:12.5px;color:#f4f4f4;font-weight:bold;letter-spacing:0.3px">Meas Group 3</div>
<div class="a" style="left:526.1px;top:678px;width:12.5px;height:12px;background:#ff6600;color:#6a2000;font-size:7px;line-height:12px;text-align:center;font-family:Liberation Sans">C3</div>
<div class="a" style="left:423.6px;top:692px;width:99px;height:15px;background:#383f43"></div>
<div class="a" style="left:423.6px;top:708px;width:99px;height:15px;background:#383f43"></div>
<div class="a" style="left:524.6px;top:692px;width:98.5px;height:15px;background:#c9c9c9"></div>
<div class="a" style="left:524.6px;top:708px;width:98.5px;height:15px;background:#c9c9c9"></div>
<div class="t" style="top:694.6px;left:425.6px;font-size:12.5px;line-height:12.5px;color:#f4f4f4;font-weight:bold;letter-spacing:0.3px">Max</div>
<div class="t" style="top:711.3px;left:425.6px;font-size:12.5px;line-height:12.5px;color:#f4f4f4;font-weight:bold;letter-spacing:0.3px">Min</div>
<div class="t" style="top:694.6px;right:608.4px;text-align:right;font-size:12.5px;line-height:12.5px;color:#111;font-weight:bold;letter-spacing:1.25px">3.9526 mV</div>
<div class="t" style="top:711.3px;right:608.4px;text-align:right;font-size:12.5px;line-height:12.5px;color:#111;font-weight:bold;letter-spacing:1.25px">-3.9526 mV</div>
<div class="t" style="top:678.2px;left:627.8px;font-size:12.5px;line-height:12.5px;color:#f4f4f4;font-weight:bold;letter-spacing:0.3px">Meas Group 4</div>
<div class="a" style="left:730.3px;top:678px;width:12.5px;height:12px;background:#f0f000;color:#6a2000;font-size:7px;line-height:12px;text-align:center;font-family:Liberation Sans">C1</div>
<div class="a" style="left:627.8px;top:692px;width:99px;height:15px;background:#383f43"></div>
<div class="a" style="left:627.8px;top:708px;width:99px;height:15px;background:#383f43"></div>
<div class="a" style="left:728.8px;top:692px;width:98.5px;height:15px;background:#c9c9c9"></div>
<div class="a" style="left:728.8px;top:708px;width:98.5px;height:15px;background:#c9c9c9"></div>
<div class="t" style="top:694.6px;left:629.8px;font-size:12.5px;line-height:12.5px;color:#f4f4f4;font-weight:bold;letter-spacing:0.3px">Max</div>
<div class="t" style="top:711.3px;left:629.8px;font-size:12.5px;line-height:12.5px;color:#f4f4f4;font-weight:bold;letter-spacing:0.3px">Min</div>
<div class="t" style="top:694.6px;right:404.2px;text-align:right;font-size:12.5px;line-height:12.5px;color:#111;font-weight:bold;letter-spacing:1.25px">2.176 V</div>
<div class="t" style="top:711.3px;right:404.2px;text-align:right;font-size:12.5px;line-height:12.5px;color:#111;font-weight:bold;letter-spacing:1.25px">500.14 mV</div>
</body></html>
